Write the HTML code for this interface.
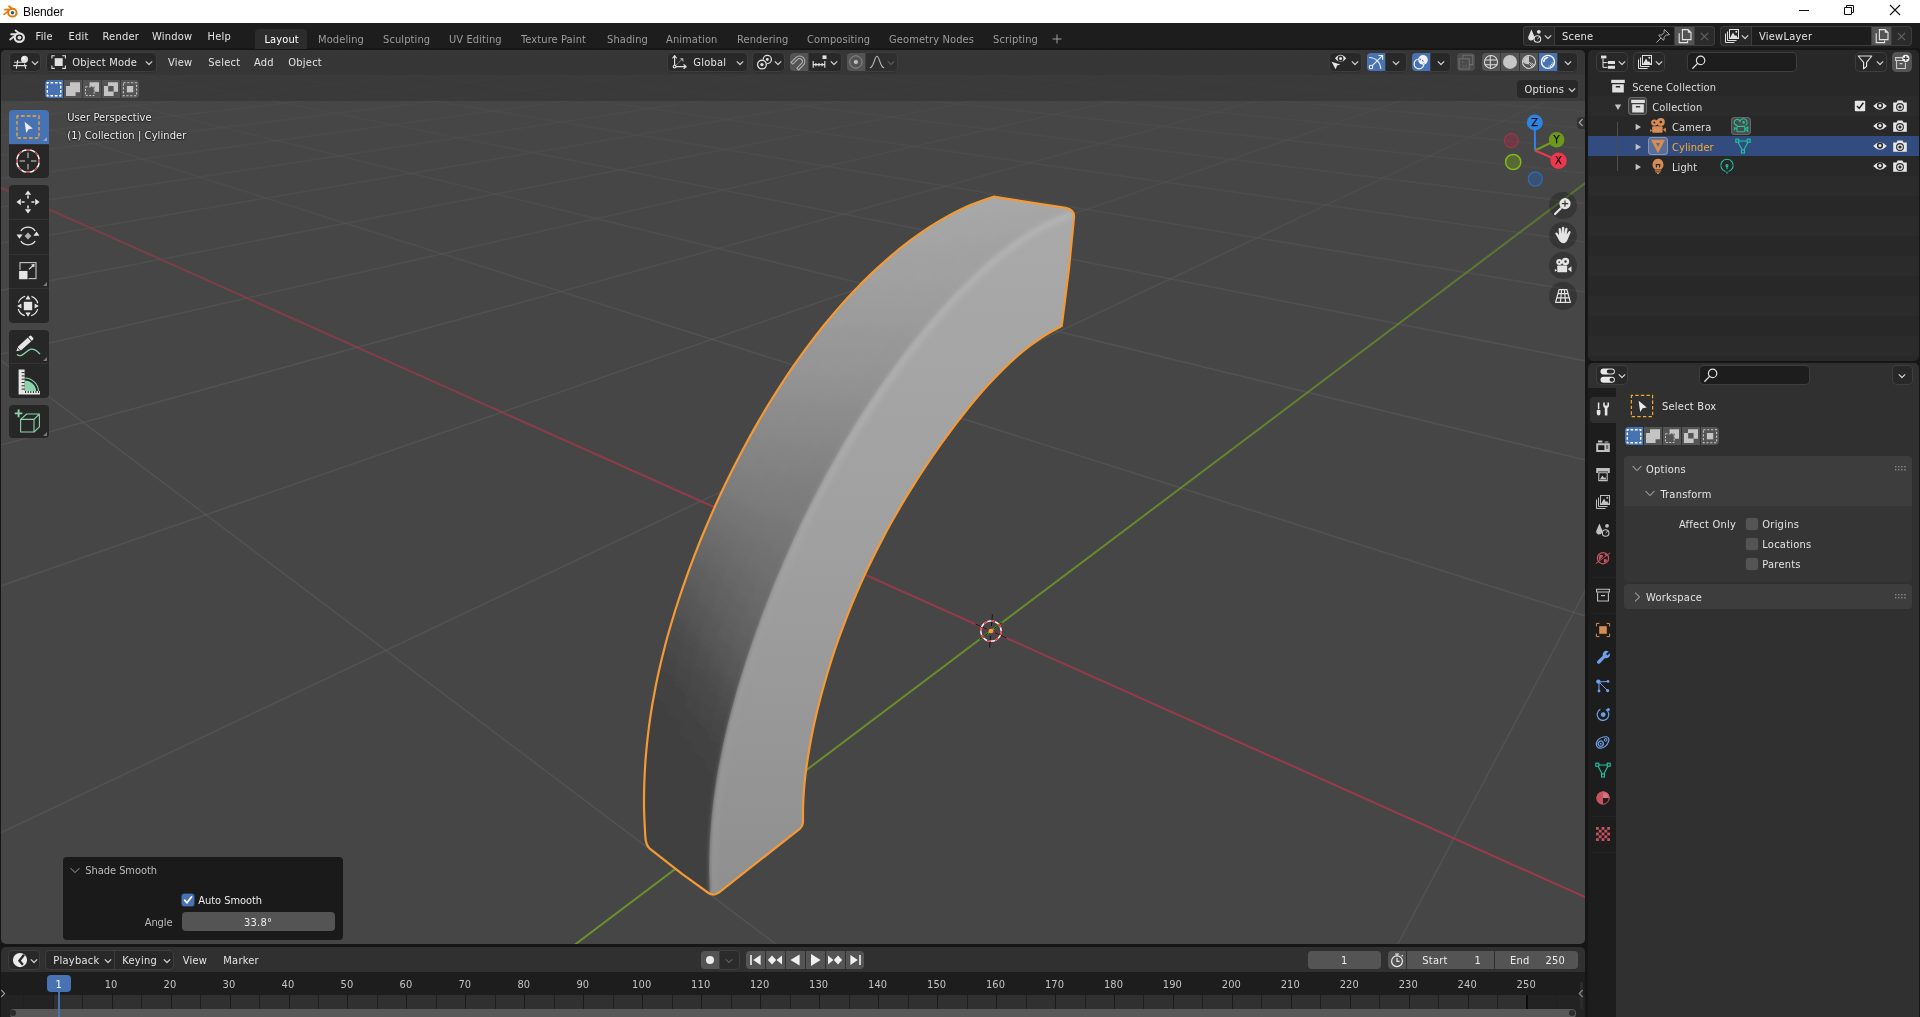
<!DOCTYPE html>
<html lang="en">
<head>
<meta charset="utf-8">
<title>Blender</title>
<style>
*{box-sizing:border-box;margin:0;padding:0}
html,body{width:1920px;height:1017px;overflow:hidden;background:#161616}
body{position:relative;font-family:"DejaVu Sans Condensed","DejaVu Sans","Liberation Sans",sans-serif;font-size:11px;font-stretch:condensed;color:#e0e0e0;line-height:1;-webkit-font-smoothing:antialiased}
.abs{position:absolute}
.t{position:absolute;white-space:nowrap;letter-spacing:.24px}
svg{position:absolute;overflow:visible}
/* title bar */
#titlebar{position:absolute;left:0;top:0;width:1920px;height:23px;background:#fff;color:#000;font-family:"Liberation Sans",sans-serif}
/* top bar */
#topbar{position:absolute;left:0;top:23px;width:1920px;height:25px;background:#1d1d1d}
/* areas */
#v3d{position:absolute;left:1px;top:50px;width:1584px;height:894px;border-radius:5px;overflow:hidden;background:#464646}
#titlebar,#topbar,#v3d,#timeline,#outliner,#props{will-change:transform}
#v3d svg.scene{left:-1px;top:-50px;width:1920px;height:1017px}
#timeline{position:absolute;left:1px;top:947px;width:1584px;height:70px;border-radius:5px 5px 0 0;overflow:hidden;background:#1d1d1d}
#outliner{position:absolute;left:1588px;top:50px;width:1332px;height:310.5px;border-radius:5px;overflow:hidden;background:#282828}
#outliner{width:331px}
#props{position:absolute;left:1588px;top:363px;width:331px;height:654px;border-radius:5px 5px 0 0;overflow:hidden;background:#303030}
.grid line{stroke:#5a5a5a;stroke-width:1.6;opacity:.62}
/* timeline */
.tk{position:absolute;top:47.5px;width:1px;height:14.3px;background:#1f1f1f}
.tk.mj{background:#1a1a1a}
.tn{position:absolute;top:32.2px;width:40px;text-align:center;color:#c4c4c4;font-size:11px;letter-spacing:.12px}
</style>
</head>
<body>
<div id="titlebar">
<svg style="left:2.6px;top:4.7px" width="14.6" height="12.8" viewBox="0 0 16 14"><g fill="none" stroke="#ea7600" stroke-width="1.9" stroke-linecap="round"><path d="M6.6 1.3 L10.4 4.2"/><path d="M2.2 5.1 H9"/><path d="M1.2 10.2 L6.2 6.4"/></g><ellipse cx="10.3" cy="8.4" rx="4.6" ry="4.3" fill="#ffffff" stroke="#ea7600" stroke-width="2.2"/><circle cx="10.4" cy="8.4" r="1.9" fill="#265787"/></svg>
<span class="abs" style="left:23px;top:6px;font-size:12px;letter-spacing:-.1px;white-space:nowrap;color:#000">Blender</span>
<svg style="left:1790px;top:0" width="130" height="23" viewBox="1790 0 130 23" fill="none" stroke="#111" stroke-width="1"><path d="M1799 10.5 H1809"/><path d="M1844.5 7.5 H1851.5 V14.5 H1844.5 Z M1846.5 7.5 V5.5 H1853.5 V12.5 H1851.5"/><path d="M1890 5 L1900 15 M1900 5 L1890 15" stroke-width="1.1"/></svg>
</div>
<div id="topbar">
<svg style="left:9.4px;top:5.7px" width="16" height="14.4" viewBox="0 0 16 14"><g fill="none" stroke="#e0e0e0" stroke-width="1.9" stroke-linecap="round"><path d="M6.6 1.3 L10.4 4.2"/><path d="M2.2 5.1 H9"/><path d="M1.2 10.2 L6.2 6.4"/></g><ellipse cx="10.3" cy="8.4" rx="4.6" ry="4.3" fill="#1d1d1d" stroke="#e0e0e0" stroke-width="2.2"/><circle cx="10.4" cy="8.4" r="1.9" fill="#e0e0e0"/></svg>
<span class="t" style="left:35.5px;top:8px;font-size:11px;color:#e3e3e3;">File</span>
<span class="t" style="left:68.5px;top:8px;font-size:11px;color:#e3e3e3;">Edit</span>
<span class="t" style="left:102.5px;top:8px;font-size:11px;color:#e3e3e3;">Render</span>
<span class="t" style="left:152px;top:8px;font-size:11px;color:#e3e3e3;">Window</span>
<span class="t" style="left:207.5px;top:8px;font-size:11px;color:#e3e3e3;">Help</span>
<div class="abs" style="left:255px;top:5.5px;width:52px;height:20px;background:#2c2c2c;border-radius:4px 4px 0 0;"></div>
<span class="t" style="left:264.5px;top:10.5px;font-size:11px;color:#ffffff;letter-spacing:.11px;">Layout</span>
<span class="t" style="left:318px;top:10.5px;font-size:11px;color:#9c9c9c;letter-spacing:.11px;">Modeling</span>
<span class="t" style="left:383px;top:10.5px;font-size:11px;color:#9c9c9c;letter-spacing:.11px;">Sculpting</span>
<span class="t" style="left:449px;top:10.5px;font-size:11px;color:#9c9c9c;letter-spacing:.11px;">UV Editing</span>
<span class="t" style="left:521px;top:10.5px;font-size:11px;color:#9c9c9c;letter-spacing:.11px;">Texture Paint</span>
<span class="t" style="left:607px;top:10.5px;font-size:11px;color:#9c9c9c;letter-spacing:.11px;">Shading</span>
<span class="t" style="left:666px;top:10.5px;font-size:11px;color:#9c9c9c;letter-spacing:.11px;">Animation</span>
<span class="t" style="left:737px;top:10.5px;font-size:11px;color:#9c9c9c;letter-spacing:.11px;">Rendering</span>
<span class="t" style="left:807px;top:10.5px;font-size:11px;color:#9c9c9c;letter-spacing:.11px;">Compositing</span>
<span class="t" style="left:889px;top:10.5px;font-size:11px;color:#9c9c9c;letter-spacing:.11px;">Geometry Nodes</span>
<span class="t" style="left:993px;top:10.5px;font-size:11px;color:#9c9c9c;letter-spacing:.11px;">Scripting</span>
<svg style="left:1052.4px;top:10.6px" width="10" height="10" viewBox="0 0 10 10"><path d="M5 0.5 V9.5 M0.5 5 H9.5" stroke="#a0a0a0" stroke-width="1" fill="none"/></svg>
<div class="abs" style="left:1523px;top:3px;width:191.5px;height:19.5px;background:#3d3d3d;border-radius:4px;"></div>
<div class="abs" style="left:1523.5px;top:3.5px;width:30.5px;height:18.5px;background:#282828;border-radius:3.5px 0 0 3.5px;"></div>
<div class="abs" style="left:1554.5px;top:3.5px;width:119.5px;height:18.5px;background:#1d1d1d;border-radius:0;"></div>
<div class="abs" style="left:1674.5px;top:3.5px;width:19.5px;height:18.5px;background:#545454;border-radius:0;"></div>
<div class="abs" style="left:1694.5px;top:3.5px;width:19.5px;height:18.5px;background:#2b2b2b;border-radius:0 3.5px 3.5px 0;"></div>
<svg style="left:1527px;top:4.5px" width="16" height="16" viewBox="0 0 16 16"><path d="M4.4 1.4 L7.8 9.6 Q6.2 13 3.2 12.4 Q0.6 11.6 1.4 8.6 Z" fill="#e0e0e0"/><circle cx="10.4" cy="11" r="3.3" fill="none" stroke="#e0e0e0" stroke-width="1.1"/><path d="M10.4 11 L13 8.6" stroke="#e0e0e0" stroke-width="1"/><circle cx="11.8" cy="3.8" r="1.9" fill="#e0e0e0"/></svg>
<svg style="left:1543px;top:10.5px" width="10" height="6" viewBox="0 0 10 6"><path d="M1.8 1.3 L5 4.5 L8.2 1.3" fill="none" stroke="#d0d0d0" stroke-width="1.2" stroke-linejoin="round"/></svg>
<span class="t" style="left:1562px;top:8.3px;font-size:11px;color:#e3e3e3;">Scene</span>
<svg style="left:1655px;top:4.5px" width="16" height="16" viewBox="0 0 16 16"><path d="M9.5 1.5 L14.5 6.5 L13 7 L11.5 6.8 L9 9.3 Q9.5 11 8.5 12.3 L3.7 7.5 Q5 6.5 6.7 7 L9.2 4.5 L9 3 Z" fill="none" stroke="#b0b0b0" stroke-width="1" stroke-linejoin="round"/><path d="M6 10 L1.5 14.5" stroke="#b0b0b0" stroke-width="1" fill="none"/></svg>
<svg style="left:1676.5px;top:4.5px" width="16" height="16" viewBox="0 0 16 16"><path d="M2.2 5.2 V14.6 H10.6 V12.6" fill="none" stroke="#e6e6e6" stroke-width="1.1"/><path d="M5.4 1.6 H11 L14 4.6 V11.6 H5.4 Z" fill="none" stroke="#e6e6e6" stroke-width="1.1"/><path d="M10.8 1.6 V4.8 H14 Z" fill="#e6e6e6"/></svg>
<svg style="left:1700px;top:9px" width="9" height="9" viewBox="0 0 9 9"><path d="M0.8 0.8 L8.2 8.2 M8.2 0.8 L0.8 8.2" stroke="#636363" stroke-width="1.1" fill="none"/></svg>
<div class="abs" style="left:1720px;top:3px;width:191.5px;height:19.5px;background:#3d3d3d;border-radius:4px;"></div>
<div class="abs" style="left:1720.5px;top:3.5px;width:30.5px;height:18.5px;background:#282828;border-radius:3.5px 0 0 3.5px;"></div>
<div class="abs" style="left:1751.5px;top:3.5px;width:119.5px;height:18.5px;background:#1d1d1d;border-radius:0;"></div>
<div class="abs" style="left:1871.5px;top:3.5px;width:19.5px;height:18.5px;background:#545454;border-radius:0;"></div>
<div class="abs" style="left:1891.5px;top:3.5px;width:19.5px;height:18.5px;background:#2b2b2b;border-radius:0 3.5px 3.5px 0;"></div>
<svg style="left:1724px;top:4.5px" width="16" height="16" viewBox="0 0 16 16"><path d="M1.5 5.5 V14.5 H10.5" fill="none" stroke="#e0e0e0" stroke-width="1"/><path d="M3.5 3.5 V12.5 H12.5" fill="none" stroke="#e0e0e0" stroke-width="1"/><rect x="5.5" y="1.5" width="9" height="9" fill="none" stroke="#e0e0e0" stroke-width="1"/><path d="M6 10 L9 4.5 L11 8 L12 7 L14 10 Z" fill="#e0e0e0"/><circle cx="12.3" cy="3.8" r="1" fill="#e0e0e0"/></svg>
<svg style="left:1740px;top:10.5px" width="10" height="6" viewBox="0 0 10 6"><path d="M1.8 1.3 L5 4.5 L8.2 1.3" fill="none" stroke="#d0d0d0" stroke-width="1.2" stroke-linejoin="round"/></svg>
<span class="t" style="left:1759px;top:8.3px;font-size:11px;color:#e3e3e3;">ViewLayer</span>
<svg style="left:1873.5px;top:4.5px" width="16" height="16" viewBox="0 0 16 16"><path d="M2.2 5.2 V14.6 H10.6 V12.6" fill="none" stroke="#e6e6e6" stroke-width="1.1"/><path d="M5.4 1.6 H11 L14 4.6 V11.6 H5.4 Z" fill="none" stroke="#e6e6e6" stroke-width="1.1"/><path d="M10.8 1.6 V4.8 H14 Z" fill="#e6e6e6"/></svg>
<svg style="left:1897px;top:9px" width="9" height="9" viewBox="0 0 9 9"><path d="M0.8 0.8 L8.2 8.2 M8.2 0.8 L0.8 8.2" stroke="#636363" stroke-width="1.1" fill="none"/></svg>
</div>
<div id="v3d">
<svg class="scene" viewBox="0 0 1920 1017">
<defs>

<linearGradient id="gr" gradientUnits="userSpaceOnUse" x1="0" y1="196" x2="0" y2="894">
<stop offset="0" stop-color="#aaaaaa"/><stop offset=".5" stop-color="#a0a0a0"/><stop offset="1" stop-color="#8f8f8f"/>
</linearGradient>
<linearGradient id="grd" gradientUnits="userSpaceOnUse" x1="0" y1="196" x2="0" y2="894">
<stop offset="0" stop-color="#b6b6b6"/><stop offset=".3" stop-color="#b0b0b0"/><stop offset=".45" stop-color="#a8a8a8"/><stop offset=".6" stop-color="#9e9e9e"/><stop offset="1" stop-color="#949494"/>
</linearGradient>
<linearGradient id="gl" gradientUnits="userSpaceOnUse" x1="0" y1="196" x2="0" y2="894"><stop offset="0.000" stop-color="#a8a8a8"/><stop offset="0.149" stop-color="#9e9e9e"/><stop offset="0.264" stop-color="#939393"/><stop offset="0.364" stop-color="#868686"/><stop offset="0.436" stop-color="#7c7c7c"/><stop offset="0.521" stop-color="#6c6c6c"/><stop offset="0.607" stop-color="#5c5c5c"/><stop offset="0.665" stop-color="#4f4f4f"/><stop offset="0.708" stop-color="#474747"/><stop offset="0.739" stop-color="#434343"/><stop offset="0.787" stop-color="#414141"/></linearGradient>
<clipPath id="csil"><path d="M645.2 834.6 C645.0 830.6 644.3 818.8 644.1 810.8 C643.9 802.8 644.0 794.8 644.2 786.8 C644.4 778.8 644.8 770.8 645.3 762.8 C645.9 754.8 646.6 746.8 647.5 738.9 C648.4 730.9 649.4 723.0 650.6 715.1 C651.8 707.2 653.2 699.3 654.7 691.5 C656.2 683.7 657.8 675.8 659.6 668.1 C661.4 660.3 663.3 652.6 665.3 644.8 C667.3 637.1 669.5 629.5 671.8 621.8 C674.0 614.2 676.4 606.6 678.9 599.0 C681.4 591.4 684.0 583.9 686.7 576.3 C689.4 568.8 692.2 561.4 695.1 553.9 C697.9 546.5 700.9 539.0 704.0 531.7 C707.1 524.3 710.3 516.9 713.5 509.6 C716.8 502.3 720.1 495.1 723.6 487.8 C727.0 480.6 730.6 473.4 734.2 466.3 C737.8 459.2 741.5 452.1 745.3 445.0 C749.1 438.0 753.0 431.0 756.9 424.1 C760.9 417.2 765.0 410.3 769.1 403.5 C773.3 396.7 777.6 389.9 781.9 383.3 C786.3 376.6 790.7 370.0 795.3 363.4 C799.9 356.9 804.5 350.5 809.3 344.1 C814.1 337.7 819.0 331.4 824.0 325.2 C829.1 319.0 834.2 312.9 839.5 306.9 C844.7 300.9 850.1 295.0 855.7 289.3 C861.2 283.5 866.9 277.9 872.7 272.4 C878.5 266.9 884.4 261.5 890.5 256.3 C896.6 251.1 902.9 246.1 909.3 241.2 C915.7 236.4 922.2 231.8 928.9 227.4 C935.6 223.1 942.5 218.9 949.5 215.1 C956.5 211.4 963.7 207.8 971.0 204.7 C978.4 201.7 989.8 198.0 993.5 196.7 L1065.5 207.8 Q1074.8 209.6 1074 217.5 L1069.2 266.5 L1064.9 301.1 L1061.7 326 C1058.9 327.5 1050.4 331.9 1045.1 335.2 C1039.8 338.5 1034.7 342.2 1029.8 345.9 C1024.8 349.6 1020.1 353.6 1015.5 357.7 C1010.8 361.8 1006.3 366.1 1002.0 370.4 C997.6 374.8 993.3 379.3 989.1 383.8 C984.9 388.4 980.8 393.1 976.8 397.8 C972.8 402.6 968.8 407.4 965.0 412.3 C961.1 417.1 957.3 422.1 953.5 427.0 C949.8 432.0 946.1 437.0 942.4 442.1 C938.8 447.2 935.2 452.3 931.7 457.4 C928.2 462.6 924.7 467.8 921.3 473.0 C917.9 478.2 914.6 483.5 911.3 488.7 C908.0 494.0 904.8 499.3 901.6 504.7 C898.5 510.0 895.4 515.4 892.3 520.8 C889.3 526.3 886.3 531.7 883.4 537.2 C880.5 542.7 877.6 548.2 874.9 553.8 C872.1 559.3 869.4 564.9 866.7 570.5 C864.1 576.1 861.5 581.8 859.0 587.5 C856.5 593.2 854.1 598.9 851.7 604.6 C849.4 610.4 847.1 616.2 844.9 622.0 C842.6 627.8 840.5 633.7 838.4 639.5 C836.3 645.4 834.3 651.3 832.4 657.2 C830.5 663.2 828.6 669.1 826.8 675.1 C825.1 681.1 823.4 687.1 821.7 693.1 C820.1 699.1 818.6 705.2 817.1 711.2 C815.7 717.3 814.3 723.3 813.0 729.4 C811.7 735.5 810.5 741.6 809.5 747.7 C808.4 753.9 807.4 760.0 806.6 766.1 C805.7 772.3 805.0 778.4 804.4 784.6 C803.9 790.8 803.4 797.0 803.2 803.2 C802.9 809.5 803.0 818.9 803.0 822.0 Q802.6 826.5 799.7 828.8 L719.1 892.4 Q713.6 896.4 708.5 893 L682 873.8 L649.5 848.3 Q645.6 845 645.2 834.6 Z"/></clipPath>
<filter id="blur3" x="-5%" y="-5%" width="110%" height="110%"><feGaussianBlur stdDeviation="2.4"/></filter>
<filter id="blur2" x="-20%" y="-20%" width="140%" height="140%"><feGaussianBlur stdDeviation="2.4"/></filter>

<linearGradient id="gfg" gradientUnits="userSpaceOnUse" x1="0" y1="70" x2="0" y2="360"><stop offset="0" stop-color="#fff" stop-opacity=".22"/><stop offset=".35" stop-color="#fff" stop-opacity=".5"/><stop offset="1" stop-color="#fff" stop-opacity="1"/></linearGradient>
<mask id="gfade" maskUnits="userSpaceOnUse" x="0" y="0" width="1920" height="1017"><rect x="0" y="0" width="1920" height="1017" fill="url(#gfg)"/></mask>
<linearGradient id="axr" gradientUnits="userSpaceOnUse" x1="0" y1="187" x2="1585" y2="897"><stop offset="0" stop-color="#963a49" stop-opacity=".62"/><stop offset=".45" stop-color="#963a49" stop-opacity=".95"/><stop offset="1" stop-color="#9c3a4a"/></linearGradient>
<linearGradient id="axg" gradientUnits="userSpaceOnUse" x1="577" y1="943" x2="1585" y2="183"><stop offset="0" stop-color="#69922a"/><stop offset=".5" stop-color="#678f29" stop-opacity=".95"/><stop offset="1" stop-color="#678f29" stop-opacity=".6"/></linearGradient>
</defs>
<g class="grid" mask="url(#gfade)">
<line x1="-50.0" y1="-29.5" x2="1650.0" y2="-79.3"/>
<line x1="-50.0" y1="-28.8" x2="1650.0" y2="-79.2"/>
<line x1="-50.0" y1="-28.1" x2="1650.0" y2="-79.1"/>
<line x1="-50.0" y1="-27.4" x2="1650.0" y2="-79.0"/>
<line x1="-50.0" y1="-26.7" x2="1650.0" y2="-78.9"/>
<line x1="-50.0" y1="-25.9" x2="1650.0" y2="-78.7"/>
<line x1="-50.0" y1="-25.2" x2="1650.0" y2="-78.6"/>
<line x1="-50.0" y1="-24.3" x2="1650.0" y2="-78.5"/>
<line x1="-50.0" y1="-23.5" x2="1650.0" y2="-78.4"/>
<line x1="-50.0" y1="-22.6" x2="1650.0" y2="-78.3"/>
<line x1="-50.0" y1="-21.7" x2="1650.0" y2="-78.1"/>
<line x1="-50.0" y1="-20.8" x2="1650.0" y2="-78.0"/>
<line x1="-50.0" y1="-19.8" x2="1650.0" y2="-77.8"/>
<line x1="-50.0" y1="-18.8" x2="1650.0" y2="-77.7"/>
<line x1="-50.0" y1="-17.7" x2="1650.0" y2="-77.5"/>
<line x1="-50.0" y1="-16.6" x2="1650.0" y2="-77.4"/>
<line x1="-50.0" y1="-15.5" x2="1650.0" y2="-77.2"/>
<line x1="-50.0" y1="-14.3" x2="1650.0" y2="-77.0"/>
<line x1="-50.0" y1="-13.0" x2="1650.0" y2="-76.8"/>
<line x1="-50.0" y1="-11.7" x2="1650.0" y2="-76.6"/>
<line x1="-50.0" y1="-10.3" x2="1650.0" y2="-76.4"/>
<line x1="-50.0" y1="-8.8" x2="1650.0" y2="-76.2"/>
<line x1="-50.0" y1="-7.3" x2="1650.0" y2="-76.0"/>
<line x1="-50.0" y1="-5.7" x2="1650.0" y2="-75.8"/>
<line x1="-50.0" y1="-4.0" x2="1650.0" y2="-75.5"/>
<line x1="-50.0" y1="-2.2" x2="1650.0" y2="-75.2"/>
<line x1="-50.0" y1="-0.4" x2="1650.0" y2="-75.0"/>
<line x1="-50.0" y1="1.6" x2="1650.0" y2="-74.7"/>
<line x1="-50.0" y1="3.7" x2="1650.0" y2="-74.4"/>
<line x1="-50.0" y1="6.0" x2="1650.0" y2="-74.0"/>
<line x1="-50.0" y1="8.4" x2="1650.0" y2="-73.7"/>
<line x1="-50.0" y1="10.9" x2="1650.0" y2="-73.3"/>
<line x1="-50.0" y1="13.6" x2="1650.0" y2="-72.9"/>
<line x1="-50.0" y1="16.5" x2="1650.0" y2="-72.5"/>
<line x1="-50.0" y1="19.6" x2="1650.0" y2="-72.0"/>
<line x1="-50.0" y1="22.9" x2="1650.0" y2="-71.5"/>
<line x1="-50.0" y1="26.5" x2="1650.0" y2="-71.0"/>
<line x1="-50.0" y1="30.4" x2="1650.0" y2="-70.4"/>
<line x1="-50.0" y1="34.6" x2="1650.0" y2="-69.8"/>
<line x1="-50.0" y1="39.2" x2="1650.0" y2="-69.1"/>
<line x1="-50.0" y1="44.3" x2="1650.0" y2="-68.4"/>
<line x1="-50.0" y1="49.8" x2="1650.0" y2="-67.6"/>
<line x1="-50.0" y1="55.8" x2="1650.0" y2="-66.7"/>
<line x1="-50.0" y1="62.5" x2="1650.0" y2="-65.7"/>
<line x1="-50.0" y1="70.0" x2="1650.0" y2="-64.6"/>
<line x1="-50.0" y1="78.4" x2="1650.0" y2="-63.3"/>
<line x1="-50.0" y1="87.8" x2="1650.0" y2="-61.9"/>
<line x1="-50.0" y1="98.5" x2="1650.0" y2="-60.4"/>
<line x1="-50.0" y1="110.8" x2="1650.0" y2="-58.5"/>
<line x1="-50.0" y1="125.0" x2="1650.0" y2="-56.4"/>
<line x1="-50.0" y1="141.7" x2="1650.0" y2="-54.0"/>
<line x1="-50.0" y1="161.5" x2="1650.0" y2="-51.0"/>
<line x1="-50.0" y1="185.4" x2="1650.0" y2="-47.5"/>
<line x1="-50.0" y1="214.9" x2="1650.0" y2="-43.2"/>
<line x1="-50.0" y1="252.0" x2="1650.0" y2="-37.7"/>
<line x1="-50.0" y1="300.3" x2="1650.0" y2="-30.6"/>
<line x1="-50.0" y1="365.6" x2="1650.0" y2="-20.9"/>
<line x1="-50.0" y1="459.0" x2="1650.0" y2="-7.1"/>
<line x1="-50.0" y1="603.5" x2="1650.0" y2="14.2"/>
<line x1="-50.0" y1="856.8" x2="1650.0" y2="51.7"/>
<line x1="-50.0" y1="3676.4" x2="1650.0" y2="468.2"/>
<line x1="-50.0" y1="-7241.6" x2="1650.0" y2="-1144.8"/>
<line x1="-50.0" y1="-1901.5" x2="1650.0" y2="-355.8"/>
<line x1="-50.0" y1="-1119.5" x2="1650.0" y2="-240.3"/>
<line x1="-50.0" y1="-457.7" x2="1650.0" y2="-1759.4"/>
<line x1="-50.0" y1="-1224.9" x2="1650.0" y2="-5067.6"/>
<line x1="-50.0" y1="1114.6" x2="1650.0" y2="5020.1"/>
<line x1="-50.0" y1="322.1" x2="1650.0" y2="1602.7"/>
<line x1="-50.0" y1="98.0" x2="1650.0" y2="636.5"/>
<line x1="-50.0" y1="60.8" x2="1650.0" y2="475.9"/>
<line x1="-50.0" y1="37.1" x2="1650.0" y2="373.8"/>
<line x1="-50.0" y1="20.7" x2="1650.0" y2="303.1"/>
<line x1="-50.0" y1="8.7" x2="1650.0" y2="251.3"/>
<line x1="-50.0" y1="-0.5" x2="1650.0" y2="211.7"/>
<line x1="-50.0" y1="-7.8" x2="1650.0" y2="180.4"/>
<line x1="-50.0" y1="-13.6" x2="1650.0" y2="155.1"/>
<line x1="-50.0" y1="-18.5" x2="1650.0" y2="134.2"/>
<line x1="-50.0" y1="-22.6" x2="1650.0" y2="116.7"/>
<line x1="-50.0" y1="-26.0" x2="1650.0" y2="101.7"/>
<line x1="-50.0" y1="-29.0" x2="1650.0" y2="88.8"/>
<line x1="-50.0" y1="-31.6" x2="1650.0" y2="77.6"/>
<line x1="-50.0" y1="-33.9" x2="1650.0" y2="67.7"/>
<line x1="-50.0" y1="-35.9" x2="1650.0" y2="59.0"/>
<line x1="-50.0" y1="-37.7" x2="1650.0" y2="51.2"/>
<line x1="-50.0" y1="-39.4" x2="1650.0" y2="44.2"/>
<line x1="-50.0" y1="-40.8" x2="1650.0" y2="37.9"/>
<line x1="-50.0" y1="-42.2" x2="1650.0" y2="32.2"/>
<line x1="-50.0" y1="-43.4" x2="1650.0" y2="26.9"/>
<line x1="-50.0" y1="-44.5" x2="1650.0" y2="22.2"/>
<line x1="-50.0" y1="-45.5" x2="1650.0" y2="17.8"/>
<line x1="-50.0" y1="-46.4" x2="1650.0" y2="13.7"/>
<line x1="-50.0" y1="-47.3" x2="1650.0" y2="10.0"/>
<line x1="-50.0" y1="-48.1" x2="1650.0" y2="6.6"/>
<line x1="-50.0" y1="-48.8" x2="1650.0" y2="3.3"/>
<line x1="-50.0" y1="-49.5" x2="1650.0" y2="0.3"/>
<line x1="-50.0" y1="-50.2" x2="1650.0" y2="-2.5"/>
<line x1="-50.0" y1="-50.8" x2="1650.0" y2="-5.1"/>
<line x1="-50.0" y1="-51.4" x2="1650.0" y2="-7.6"/>
<line x1="-50.0" y1="-51.9" x2="1650.0" y2="-9.9"/>
<line x1="-50.0" y1="-52.4" x2="1650.0" y2="-12.1"/>
<line x1="-50.0" y1="-52.9" x2="1650.0" y2="-14.1"/>
<line x1="-50.0" y1="-53.3" x2="1650.0" y2="-16.1"/>
<line x1="-50.0" y1="-53.8" x2="1650.0" y2="-17.9"/>
<line x1="-50.0" y1="-54.2" x2="1650.0" y2="-19.7"/>
<line x1="-50.0" y1="-54.6" x2="1650.0" y2="-21.3"/>
<line x1="-50.0" y1="-54.9" x2="1650.0" y2="-22.9"/>
<line x1="-50.0" y1="-55.3" x2="1650.0" y2="-24.4"/>
<line x1="-50.0" y1="-55.6" x2="1650.0" y2="-25.8"/>
<line x1="-50.0" y1="-55.9" x2="1650.0" y2="-27.2"/>
<line x1="-50.0" y1="-56.2" x2="1650.0" y2="-28.5"/>
<line x1="-50.0" y1="-56.5" x2="1650.0" y2="-29.7"/>
<line x1="-50.0" y1="-56.8" x2="1650.0" y2="-30.9"/>
<line x1="-50.0" y1="-57.1" x2="1650.0" y2="-32.1"/>
<line x1="-50.0" y1="-57.3" x2="1650.0" y2="-33.2"/>
<line x1="-50.0" y1="-57.6" x2="1650.0" y2="-34.2"/>
<line x1="-50.0" y1="-57.8" x2="1650.0" y2="-35.2"/>
<line x1="-50.0" y1="-58.0" x2="1650.0" y2="-36.2"/>
<line x1="-50.0" y1="-58.2" x2="1650.0" y2="-37.1"/>
<line x1="-50.0" y1="-58.4" x2="1650.0" y2="-38.0"/>
<line x1="-50.0" y1="-58.6" x2="1650.0" y2="-38.9"/>
<line x1="-50.0" y1="-58.8" x2="1650.0" y2="-39.7"/>
<line x1="-50.0" y1="-59.0" x2="1650.0" y2="-40.5"/>
<line x1="-50.0" y1="-59.2" x2="1650.0" y2="-41.3"/>
<line x1="-50.0" y1="-59.4" x2="1650.0" y2="-42.1"/>
<line x1="-50.0" y1="-59.5" x2="1650.0" y2="-42.8"/>
<line x1="-50.0" y1="-59.7" x2="1650.0" y2="-43.5"/>
<line x1="-50.0" y1="-59.9" x2="1650.0" y2="-44.2"/>
<line x1="-50.0" y1="-60.0" x2="1650.0" y2="-44.8"/>
<line x1="-50.0" y1="-60.2" x2="1650.0" y2="-45.4"/>
<line x1="-50.0" y1="-60.3" x2="1650.0" y2="-46.1"/>
<line x1="-50.0" y1="-60.4" x2="1650.0" y2="-46.7"/>
<line x1="-50.0" y1="-60.6" x2="1650.0" y2="-47.2"/>
<line x1="-50.0" y1="-60.7" x2="1650.0" y2="-47.8"/>
<line x1="-50.0" y1="-60.8" x2="1650.0" y2="-48.3"/>
<line x1="-50.0" y1="-61.0" x2="1650.0" y2="-48.9"/>
<line x1="-50.0" y1="-61.1" x2="1650.0" y2="-49.4"/>
<line x1="-50.0" y1="-61.2" x2="1650.0" y2="-49.9"/>
</g>
<line x1="-50" y1="165.1" x2="1650" y2="926.1" stroke="url(#axr)" stroke-width="2"/>
<line x1="500" y1="1001.1" x2="1650" y2="134.2" stroke="url(#axg)" stroke-width="2"/>

<path d="M645.2 834.6 C645.0 830.6 644.3 818.8 644.1 810.8 C643.9 802.8 644.0 794.8 644.2 786.8 C644.4 778.8 644.8 770.8 645.3 762.8 C645.9 754.8 646.6 746.8 647.5 738.9 C648.4 730.9 649.4 723.0 650.6 715.1 C651.8 707.2 653.2 699.3 654.7 691.5 C656.2 683.7 657.8 675.8 659.6 668.1 C661.4 660.3 663.3 652.6 665.3 644.8 C667.3 637.1 669.5 629.5 671.8 621.8 C674.0 614.2 676.4 606.6 678.9 599.0 C681.4 591.4 684.0 583.9 686.7 576.3 C689.4 568.8 692.2 561.4 695.1 553.9 C697.9 546.5 700.9 539.0 704.0 531.7 C707.1 524.3 710.3 516.9 713.5 509.6 C716.8 502.3 720.1 495.1 723.6 487.8 C727.0 480.6 730.6 473.4 734.2 466.3 C737.8 459.2 741.5 452.1 745.3 445.0 C749.1 438.0 753.0 431.0 756.9 424.1 C760.9 417.2 765.0 410.3 769.1 403.5 C773.3 396.7 777.6 389.9 781.9 383.3 C786.3 376.6 790.7 370.0 795.3 363.4 C799.9 356.9 804.5 350.5 809.3 344.1 C814.1 337.7 819.0 331.4 824.0 325.2 C829.1 319.0 834.2 312.9 839.5 306.9 C844.7 300.9 850.1 295.0 855.7 289.3 C861.2 283.5 866.9 277.9 872.7 272.4 C878.5 266.9 884.4 261.5 890.5 256.3 C896.6 251.1 902.9 246.1 909.3 241.2 C915.7 236.4 922.2 231.8 928.9 227.4 C935.6 223.1 942.5 218.9 949.5 215.1 C956.5 211.4 963.7 207.8 971.0 204.7 C978.4 201.7 989.8 198.0 993.5 196.7 L1065.5 207.8 Q1074.8 209.6 1074 217.5 L1069.2 266.5 L1064.9 301.1 L1061.7 326 C1058.9 327.5 1050.4 331.9 1045.1 335.2 C1039.8 338.5 1034.7 342.2 1029.8 345.9 C1024.8 349.6 1020.1 353.6 1015.5 357.7 C1010.8 361.8 1006.3 366.1 1002.0 370.4 C997.6 374.8 993.3 379.3 989.1 383.8 C984.9 388.4 980.8 393.1 976.8 397.8 C972.8 402.6 968.8 407.4 965.0 412.3 C961.1 417.1 957.3 422.1 953.5 427.0 C949.8 432.0 946.1 437.0 942.4 442.1 C938.8 447.2 935.2 452.3 931.7 457.4 C928.2 462.6 924.7 467.8 921.3 473.0 C917.9 478.2 914.6 483.5 911.3 488.7 C908.0 494.0 904.8 499.3 901.6 504.7 C898.5 510.0 895.4 515.4 892.3 520.8 C889.3 526.3 886.3 531.7 883.4 537.2 C880.5 542.7 877.6 548.2 874.9 553.8 C872.1 559.3 869.4 564.9 866.7 570.5 C864.1 576.1 861.5 581.8 859.0 587.5 C856.5 593.2 854.1 598.9 851.7 604.6 C849.4 610.4 847.1 616.2 844.9 622.0 C842.6 627.8 840.5 633.7 838.4 639.5 C836.3 645.4 834.3 651.3 832.4 657.2 C830.5 663.2 828.6 669.1 826.8 675.1 C825.1 681.1 823.4 687.1 821.7 693.1 C820.1 699.1 818.6 705.2 817.1 711.2 C815.7 717.3 814.3 723.3 813.0 729.4 C811.7 735.5 810.5 741.6 809.5 747.7 C808.4 753.9 807.4 760.0 806.6 766.1 C805.7 772.3 805.0 778.4 804.4 784.6 C803.9 790.8 803.4 797.0 803.2 803.2 C802.9 809.5 803.0 818.9 803.0 822.0 Q802.6 826.5 799.7 828.8 L719.1 892.4 Q713.6 896.4 708.5 893 L682 873.8 L649.5 848.3 Q645.6 845 645.2 834.6 Z" fill="url(#gr)"/>
<g clip-path="url(#csil)">
<path d="M645.2 834.6 C645.0 830.6 644.3 818.8 644.1 810.8 C643.9 802.8 644.0 794.8 644.2 786.8 C644.4 778.8 644.8 770.8 645.3 762.8 C645.9 754.8 646.6 746.8 647.5 738.9 C648.4 730.9 649.4 723.0 650.6 715.1 C651.8 707.2 653.2 699.3 654.7 691.5 C656.2 683.7 657.8 675.8 659.6 668.1 C661.4 660.3 663.3 652.6 665.3 644.8 C667.3 637.1 669.5 629.5 671.8 621.8 C674.0 614.2 676.4 606.6 678.9 599.0 C681.4 591.4 684.0 583.9 686.7 576.3 C689.4 568.8 692.2 561.4 695.1 553.9 C697.9 546.5 700.9 539.0 704.0 531.7 C707.1 524.3 710.3 516.9 713.5 509.6 C716.8 502.3 720.1 495.1 723.6 487.8 C727.0 480.6 730.6 473.4 734.2 466.3 C737.8 459.2 741.5 452.1 745.3 445.0 C749.1 438.0 753.0 431.0 756.9 424.1 C760.9 417.2 765.0 410.3 769.1 403.5 C773.3 396.7 777.6 389.9 781.9 383.3 C786.3 376.6 790.7 370.0 795.3 363.4 C799.9 356.9 804.5 350.5 809.3 344.1 C814.1 337.7 819.0 331.4 824.0 325.2 C829.1 319.0 834.2 312.9 839.5 306.9 C844.7 300.9 850.1 295.0 855.7 289.3 C861.2 283.5 866.9 277.9 872.7 272.4 C878.5 266.9 884.4 261.5 890.5 256.3 C896.6 251.1 902.9 246.1 909.3 241.2 C915.7 236.4 922.2 231.8 928.9 227.4 C935.6 223.1 942.5 218.9 949.5 215.1 C956.5 211.4 963.7 207.8 971.0 204.7 C978.4 201.7 989.8 198.0 993.5 196.7 L1069.2 212.4 C1065.6 213.8 1054.7 217.8 1047.8 221.1 C1040.8 224.3 1034.2 228.1 1027.7 232.1 C1021.2 236.0 1014.9 240.4 1008.8 244.9 C1002.7 249.4 996.7 254.2 990.9 259.1 C985.1 264.0 979.4 269.2 973.8 274.4 C968.2 279.7 962.8 285.1 957.4 290.6 C952.1 296.1 946.9 301.7 941.8 307.4 C936.6 313.1 931.6 318.9 926.7 324.8 C921.7 330.6 916.9 336.6 912.1 342.6 C907.4 348.6 902.7 354.7 898.2 360.8 C893.6 367.0 889.1 373.2 884.7 379.4 C880.3 385.7 876.0 392.0 871.7 398.3 C867.5 404.7 863.3 411.1 859.2 417.5 C855.1 424.0 851.1 430.5 847.2 437.1 C843.3 443.6 839.4 450.2 835.7 456.9 C831.9 463.5 828.2 470.2 824.5 476.9 C820.9 483.6 817.4 490.4 813.9 497.2 C810.4 504.0 807.0 510.9 803.6 517.8 C800.3 524.6 797.0 531.6 793.8 538.5 C790.6 545.5 787.5 552.5 784.4 559.5 C781.4 566.5 778.4 573.6 775.4 580.6 C772.5 587.7 769.7 594.8 766.9 602.0 C764.1 609.1 761.4 616.2 758.8 623.4 C756.1 630.6 753.6 637.8 751.1 645.1 C748.6 652.3 746.2 659.6 743.9 666.8 C741.6 674.1 739.3 681.4 737.2 688.8 C735.1 696.1 733.0 703.5 731.1 710.8 C729.1 718.2 727.3 725.6 725.6 733.1 C723.8 740.5 722.2 748.0 720.7 755.5 C719.2 763.0 717.9 770.5 716.6 778.1 C715.4 785.6 714.3 793.2 713.3 800.8 C712.4 808.4 711.6 816.0 710.9 823.7 C710.3 831.3 709.8 839.0 709.5 846.6 C709.2 854.3 709.1 862.0 709.1 869.6 C709.2 877.3 709.7 888.7 709.8 892.5 L709 893 L682 873.8 L649.5 848.3 L645.2 834.6 Z" fill="url(#gl)"/>
<g stroke-width=".9" stroke-linejoin="round" filter="url(#blur3)"><path d="M978.4 193.6 L971.7 195.8 L986.8 199.0 L993.5 196.7Z" fill="#a8a8a8" stroke="#a8a8a8"/><path d="M993.5 196.7 L986.8 199.0 L1001.9 202.2 L1008.6 199.8Z" fill="#a8a8a8" stroke="#a8a8a8"/><path d="M1008.6 199.8 L1001.9 202.2 L1017.0 205.4 L1023.8 203.0Z" fill="#a8a8a8" stroke="#a8a8a8"/><path d="M1023.8 203.0 L1017.0 205.4 L1032.2 208.6 L1038.9 206.1Z" fill="#a7a7a7" stroke="#a7a7a7"/><path d="M1038.9 206.1 L1032.2 208.6 L1047.3 211.8 L1054.1 209.3Z" fill="#a6a6a6" stroke="#a6a6a6"/><path d="M1054.1 209.3 L1047.3 211.8 L1062.4 215.0 L1069.2 212.4Z" fill="#a6a6a6" stroke="#a6a6a6"/><path d="M971.7 195.8 L965.0 198.0 L980.1 201.3 L986.8 199.0Z" fill="#a8a8a8" stroke="#a8a8a8"/><path d="M986.8 199.0 L980.1 201.3 L995.2 204.6 L1001.9 202.2Z" fill="#a8a8a8" stroke="#a8a8a8"/><path d="M1001.9 202.2 L995.2 204.6 L1010.3 207.8 L1017.0 205.4Z" fill="#a7a7a7" stroke="#a7a7a7"/><path d="M1017.0 205.4 L1010.3 207.8 L1025.4 211.1 L1032.2 208.6Z" fill="#a7a7a7" stroke="#a7a7a7"/><path d="M1032.2 208.6 L1025.4 211.1 L1040.5 214.4 L1047.3 211.8Z" fill="#a6a6a6" stroke="#a6a6a6"/><path d="M1047.3 211.8 L1040.5 214.4 L1055.6 217.7 L1062.4 215.0Z" fill="#a6a6a6" stroke="#a6a6a6"/><path d="M965.0 198.0 L958.4 200.4 L973.5 203.7 L980.1 201.3Z" fill="#a8a8a8" stroke="#a8a8a8"/><path d="M980.1 201.3 L973.5 203.7 L988.6 207.1 L995.2 204.6Z" fill="#a8a8a8" stroke="#a8a8a8"/><path d="M995.2 204.6 L988.6 207.1 L1003.7 210.5 L1010.3 207.8Z" fill="#a7a7a7" stroke="#a7a7a7"/><path d="M1010.3 207.8 L1003.7 210.5 L1018.7 213.8 L1025.4 211.1Z" fill="#a7a7a7" stroke="#a7a7a7"/><path d="M1025.4 211.1 L1018.7 213.8 L1033.8 217.2 L1040.5 214.4Z" fill="#a6a6a6" stroke="#a6a6a6"/><path d="M1040.5 214.4 L1033.8 217.2 L1048.9 220.5 L1055.6 217.7Z" fill="#a5a5a5" stroke="#a5a5a5"/><path d="M958.4 200.4 L951.9 203.0 L967.0 206.5 L973.5 203.7Z" fill="#a8a8a8" stroke="#a8a8a8"/><path d="M973.5 203.7 L967.0 206.5 L982.1 209.9 L988.6 207.1Z" fill="#a7a7a7" stroke="#a7a7a7"/><path d="M988.6 207.1 L982.1 209.9 L997.1 213.4 L1003.7 210.5Z" fill="#a7a7a7" stroke="#a7a7a7"/><path d="M1003.7 210.5 L997.1 213.4 L1012.2 216.9 L1018.7 213.8Z" fill="#a6a6a6" stroke="#a6a6a6"/><path d="M1018.7 213.8 L1012.2 216.9 L1027.2 220.3 L1033.8 217.2Z" fill="#a6a6a6" stroke="#a6a6a6"/><path d="M1033.8 217.2 L1027.2 220.3 L1042.3 223.8 L1048.9 220.5Z" fill="#a5a5a5" stroke="#a5a5a5"/><path d="M951.9 203.0 L945.5 205.9 L960.6 209.5 L967.0 206.5Z" fill="#a8a8a8" stroke="#a8a8a8"/><path d="M967.0 206.5 L960.6 209.5 L975.7 213.0 L982.1 209.9Z" fill="#a7a7a7" stroke="#a7a7a7"/><path d="M982.1 209.9 L975.7 213.0 L990.7 216.6 L997.1 213.4Z" fill="#a7a7a7" stroke="#a7a7a7"/><path d="M997.1 213.4 L990.7 216.6 L1005.8 220.1 L1012.2 216.9Z" fill="#a6a6a6" stroke="#a6a6a6"/><path d="M1012.2 216.9 L1005.8 220.1 L1020.8 223.7 L1027.2 220.3Z" fill="#a5a5a5" stroke="#a5a5a5"/><path d="M1027.2 220.3 L1020.8 223.7 L1035.9 227.2 L1042.3 223.8Z" fill="#a5a5a5" stroke="#a5a5a5"/><path d="M945.5 205.9 L939.2 209.0 L954.3 212.6 L960.6 209.5Z" fill="#a7a7a7" stroke="#a7a7a7"/><path d="M960.6 209.5 L954.3 212.6 L969.3 216.3 L975.7 213.0Z" fill="#a7a7a7" stroke="#a7a7a7"/><path d="M975.7 213.0 L969.3 216.3 L984.4 219.9 L990.7 216.6Z" fill="#a6a6a6" stroke="#a6a6a6"/><path d="M990.7 216.6 L984.4 219.9 L999.5 223.6 L1005.8 220.1Z" fill="#a6a6a6" stroke="#a6a6a6"/><path d="M1005.8 220.1 L999.5 223.6 L1014.5 227.3 L1020.8 223.7Z" fill="#a5a5a5" stroke="#a5a5a5"/><path d="M1020.8 223.7 L1014.5 227.3 L1029.6 230.9 L1035.9 227.2Z" fill="#a5a5a5" stroke="#a5a5a5"/><path d="M939.2 209.0 L933.0 212.2 L948.0 215.9 L954.3 212.6Z" fill="#a7a7a7" stroke="#a7a7a7"/><path d="M954.3 212.6 L948.0 215.9 L963.1 219.7 L969.3 216.3Z" fill="#a7a7a7" stroke="#a7a7a7"/><path d="M969.3 216.3 L963.1 219.7 L978.2 223.5 L984.4 219.9Z" fill="#a6a6a6" stroke="#a6a6a6"/><path d="M984.4 219.9 L978.2 223.5 L993.2 227.2 L999.5 223.6Z" fill="#a5a5a5" stroke="#a5a5a5"/><path d="M999.5 223.6 L993.2 227.2 L1008.3 231.0 L1014.5 227.3Z" fill="#a5a5a5" stroke="#a5a5a5"/><path d="M1014.5 227.3 L1008.3 231.0 L1023.4 234.8 L1029.6 230.9Z" fill="#a4a4a4" stroke="#a4a4a4"/><path d="M933.0 212.2 L926.8 215.5 L941.9 219.4 L948.0 215.9Z" fill="#a7a7a7" stroke="#a7a7a7"/><path d="M948.0 215.9 L941.9 219.4 L957.0 223.3 L963.1 219.7Z" fill="#a6a6a6" stroke="#a6a6a6"/><path d="M963.1 219.7 L957.0 223.3 L972.1 227.2 L978.2 223.5Z" fill="#a6a6a6" stroke="#a6a6a6"/><path d="M978.2 223.5 L972.1 227.2 L987.1 231.1 L993.2 227.2Z" fill="#a5a5a5" stroke="#a5a5a5"/><path d="M993.2 227.2 L987.1 231.1 L1002.2 235.0 L1008.3 231.0Z" fill="#a4a4a4" stroke="#a4a4a4"/><path d="M1008.3 231.0 L1002.2 235.0 L1017.3 238.8 L1023.4 234.8Z" fill="#a4a4a4" stroke="#a4a4a4"/><path d="M926.8 215.5 L920.7 219.1 L935.8 223.1 L941.9 219.4Z" fill="#a6a6a6" stroke="#a6a6a6"/><path d="M941.9 219.4 L935.8 223.1 L950.9 227.1 L957.0 223.3Z" fill="#a6a6a6" stroke="#a6a6a6"/><path d="M957.0 223.3 L950.9 227.1 L966.0 231.1 L972.1 227.2Z" fill="#a5a5a5" stroke="#a5a5a5"/><path d="M972.1 227.2 L966.0 231.1 L981.1 235.0 L987.1 231.1Z" fill="#a5a5a5" stroke="#a5a5a5"/><path d="M987.1 231.1 L981.1 235.0 L996.2 239.0 L1002.2 235.0Z" fill="#a4a4a4" stroke="#a4a4a4"/><path d="M1002.2 235.0 L996.2 239.0 L1011.3 243.0 L1017.3 238.8Z" fill="#a3a3a3" stroke="#a3a3a3"/><path d="M920.7 219.1 L914.7 222.7 L929.9 226.8 L935.8 223.1Z" fill="#a6a6a6" stroke="#a6a6a6"/><path d="M935.8 223.1 L929.9 226.8 L945.0 230.9 L950.9 227.1Z" fill="#a5a5a5" stroke="#a5a5a5"/><path d="M950.9 227.1 L945.0 230.9 L960.1 235.0 L966.0 231.1Z" fill="#a5a5a5" stroke="#a5a5a5"/><path d="M966.0 231.1 L960.1 235.0 L975.2 239.2 L981.1 235.0Z" fill="#a4a4a4" stroke="#a4a4a4"/><path d="M981.1 235.0 L975.2 239.2 L990.3 243.3 L996.2 239.0Z" fill="#a4a4a4" stroke="#a4a4a4"/><path d="M996.2 239.0 L990.3 243.3 L1005.5 247.4 L1011.3 243.0Z" fill="#a3a3a3" stroke="#a3a3a3"/><path d="M914.7 222.7 L908.8 226.5 L924.0 230.7 L929.9 226.8Z" fill="#a6a6a6" stroke="#a6a6a6"/><path d="M929.9 226.8 L924.0 230.7 L939.1 234.9 L945.0 230.9Z" fill="#a5a5a5" stroke="#a5a5a5"/><path d="M945.0 230.9 L939.1 234.9 L954.3 239.2 L960.1 235.0Z" fill="#a4a4a4" stroke="#a4a4a4"/><path d="M960.1 235.0 L954.3 239.2 L969.4 243.4 L975.2 239.2Z" fill="#a4a4a4" stroke="#a4a4a4"/><path d="M975.2 239.2 L969.4 243.4 L984.6 247.6 L990.3 243.3Z" fill="#a3a3a3" stroke="#a3a3a3"/><path d="M990.3 243.3 L984.6 247.6 L999.7 251.9 L1005.5 247.4Z" fill="#a3a3a3" stroke="#a3a3a3"/><path d="M908.8 226.5 L903.0 230.4 L918.2 234.7 L924.0 230.7Z" fill="#a5a5a5" stroke="#a5a5a5"/><path d="M924.0 230.7 L918.2 234.7 L933.3 239.1 L939.1 234.9Z" fill="#a5a5a5" stroke="#a5a5a5"/><path d="M939.1 234.9 L933.3 239.1 L948.5 243.4 L954.3 239.2Z" fill="#a4a4a4" stroke="#a4a4a4"/><path d="M954.3 239.2 L948.5 243.4 L963.7 247.8 L969.4 243.4Z" fill="#a3a3a3" stroke="#a3a3a3"/><path d="M969.4 243.4 L963.7 247.8 L978.9 252.1 L984.6 247.6Z" fill="#a3a3a3" stroke="#a3a3a3"/><path d="M984.6 247.6 L978.9 252.1 L994.0 256.5 L999.7 251.9Z" fill="#a2a2a2" stroke="#a2a2a2"/><path d="M903.0 230.4 L897.2 234.4 L912.4 238.9 L918.2 234.7Z" fill="#a5a5a5" stroke="#a5a5a5"/><path d="M918.2 234.7 L912.4 238.9 L927.6 243.3 L933.3 239.1Z" fill="#a4a4a4" stroke="#a4a4a4"/><path d="M933.3 239.1 L927.6 243.3 L942.8 247.8 L948.5 243.4Z" fill="#a4a4a4" stroke="#a4a4a4"/><path d="M948.5 243.4 L942.8 247.8 L958.0 252.3 L963.7 247.8Z" fill="#a3a3a3" stroke="#a3a3a3"/><path d="M963.7 247.8 L958.0 252.3 L973.2 256.7 L978.9 252.1Z" fill="#a2a2a2" stroke="#a2a2a2"/><path d="M978.9 252.1 L973.2 256.7 L988.5 261.2 L994.0 256.5Z" fill="#a2a2a2" stroke="#a2a2a2"/><path d="M897.2 234.4 L891.5 238.5 L906.8 243.1 L912.4 238.9Z" fill="#a4a4a4" stroke="#a4a4a4"/><path d="M912.4 238.9 L906.8 243.1 L922.0 247.7 L927.6 243.3Z" fill="#a4a4a4" stroke="#a4a4a4"/><path d="M927.6 243.3 L922.0 247.7 L937.3 252.3 L942.8 247.8Z" fill="#a3a3a3" stroke="#a3a3a3"/><path d="M942.8 247.8 L937.3 252.3 L952.5 256.9 L958.0 252.3Z" fill="#a3a3a3" stroke="#a3a3a3"/><path d="M958.0 252.3 L952.5 256.9 L967.7 261.4 L973.2 256.7Z" fill="#a2a2a2" stroke="#a2a2a2"/><path d="M973.2 256.7 L967.7 261.4 L983.0 266.0 L988.5 261.2Z" fill="#a1a1a1" stroke="#a1a1a1"/><path d="M891.5 238.5 L885.9 242.8 L901.2 247.5 L906.8 243.1Z" fill="#a4a4a4" stroke="#a4a4a4"/><path d="M906.8 243.1 L901.2 247.5 L916.5 252.2 L922.0 247.7Z" fill="#a3a3a3" stroke="#a3a3a3"/><path d="M922.0 247.7 L916.5 252.2 L931.8 256.9 L937.3 252.3Z" fill="#a3a3a3" stroke="#a3a3a3"/><path d="M937.3 252.3 L931.8 256.9 L947.0 261.5 L952.5 256.9Z" fill="#a2a2a2" stroke="#a2a2a2"/><path d="M952.5 256.9 L947.0 261.5 L962.3 266.2 L967.7 261.4Z" fill="#a2a2a2" stroke="#a2a2a2"/><path d="M967.7 261.4 L962.3 266.2 L977.6 270.9 L983.0 266.0Z" fill="#a1a1a1" stroke="#a1a1a1"/><path d="M885.9 242.8 L880.4 247.1 L895.7 251.9 L901.2 247.5Z" fill="#a3a3a3" stroke="#a3a3a3"/><path d="M901.2 247.5 L895.7 251.9 L911.0 256.7 L916.5 252.2Z" fill="#a3a3a3" stroke="#a3a3a3"/><path d="M916.5 252.2 L911.0 256.7 L926.3 261.5 L931.8 256.9Z" fill="#a2a2a2" stroke="#a2a2a2"/><path d="M931.8 256.9 L926.3 261.5 L941.6 266.3 L947.0 261.5Z" fill="#a2a2a2" stroke="#a2a2a2"/><path d="M947.0 261.5 L941.6 266.3 L956.9 271.1 L962.3 266.2Z" fill="#a1a1a1" stroke="#a1a1a1"/><path d="M962.3 266.2 L956.9 271.1 L972.2 275.9 L977.6 270.9Z" fill="#a1a1a1" stroke="#a1a1a1"/><path d="M880.4 247.1 L875.0 251.6 L890.3 256.5 L895.7 251.9Z" fill="#a3a3a3" stroke="#a3a3a3"/><path d="M895.7 251.9 L890.3 256.5 L905.7 261.4 L911.0 256.7Z" fill="#a2a2a2" stroke="#a2a2a2"/><path d="M911.0 256.7 L905.7 261.4 L921.0 266.3 L926.3 261.5Z" fill="#a2a2a2" stroke="#a2a2a2"/><path d="M926.3 261.5 L921.0 266.3 L936.3 271.2 L941.6 266.3Z" fill="#a1a1a1" stroke="#a1a1a1"/><path d="M941.6 266.3 L936.3 271.2 L951.6 276.1 L956.9 271.1Z" fill="#a1a1a1" stroke="#a1a1a1"/><path d="M956.9 271.1 L951.6 276.1 L967.0 281.0 L972.2 275.9Z" fill="#a0a0a0" stroke="#a0a0a0"/><path d="M875.0 251.6 L869.6 256.1 L885.0 261.1 L890.3 256.5Z" fill="#a3a3a3" stroke="#a3a3a3"/><path d="M890.3 256.5 L885.0 261.1 L900.3 266.1 L905.7 261.4Z" fill="#a2a2a2" stroke="#a2a2a2"/><path d="M905.7 261.4 L900.3 266.1 L915.7 271.1 L921.0 266.3Z" fill="#a1a1a1" stroke="#a1a1a1"/><path d="M921.0 266.3 L915.7 271.1 L931.1 276.1 L936.3 271.2Z" fill="#a1a1a1" stroke="#a1a1a1"/><path d="M936.3 271.2 L931.1 276.1 L946.4 281.1 L951.6 276.1Z" fill="#a0a0a0" stroke="#a0a0a0"/><path d="M951.6 276.1 L946.4 281.1 L961.8 286.1 L967.0 281.0Z" fill="#a0a0a0" stroke="#a0a0a0"/><path d="M869.6 256.1 L864.3 260.7 L879.7 265.8 L885.0 261.1Z" fill="#a2a2a2" stroke="#a2a2a2"/><path d="M885.0 261.1 L879.7 265.8 L895.1 270.9 L900.3 266.1Z" fill="#a1a1a1" stroke="#a1a1a1"/><path d="M900.3 266.1 L895.1 270.9 L910.5 276.0 L915.7 271.1Z" fill="#a1a1a1" stroke="#a1a1a1"/><path d="M915.7 271.1 L910.5 276.0 L925.9 281.1 L931.1 276.1Z" fill="#a0a0a0" stroke="#a0a0a0"/><path d="M931.1 276.1 L925.9 281.1 L941.3 286.2 L946.4 281.1Z" fill="#a0a0a0" stroke="#a0a0a0"/><path d="M946.4 281.1 L941.3 286.2 L956.7 291.4 L961.8 286.1Z" fill="#9f9f9f" stroke="#9f9f9f"/><path d="M864.3 260.7 L859.1 265.4 L874.5 270.6 L879.7 265.8Z" fill="#a2a2a2" stroke="#a2a2a2"/><path d="M879.7 265.8 L874.5 270.6 L890.0 275.8 L895.1 270.9Z" fill="#a1a1a1" stroke="#a1a1a1"/><path d="M895.1 270.9 L890.0 275.8 L905.4 281.0 L910.5 276.0Z" fill="#a0a0a0" stroke="#a0a0a0"/><path d="M910.5 276.0 L905.4 281.0 L920.8 286.2 L925.9 281.1Z" fill="#a0a0a0" stroke="#a0a0a0"/><path d="M925.9 281.1 L920.8 286.2 L936.2 291.4 L941.3 286.2Z" fill="#9f9f9f" stroke="#9f9f9f"/><path d="M941.3 286.2 L936.2 291.4 L951.7 296.6 L956.7 291.4Z" fill="#9f9f9f" stroke="#9f9f9f"/><path d="M859.1 265.4 L854.0 270.2 L869.4 275.5 L874.5 270.6Z" fill="#a1a1a1" stroke="#a1a1a1"/><path d="M874.5 270.6 L869.4 275.5 L884.9 280.8 L890.0 275.8Z" fill="#a0a0a0" stroke="#a0a0a0"/><path d="M890.0 275.8 L884.9 280.8 L900.3 286.1 L905.4 281.0Z" fill="#a0a0a0" stroke="#a0a0a0"/><path d="M905.4 281.0 L900.3 286.1 L915.8 291.4 L920.8 286.2Z" fill="#9f9f9f" stroke="#9f9f9f"/><path d="M920.8 286.2 L915.8 291.4 L931.2 296.7 L936.2 291.4Z" fill="#9f9f9f" stroke="#9f9f9f"/><path d="M936.2 291.4 L931.2 296.7 L946.7 302.0 L951.7 296.6Z" fill="#9e9e9e" stroke="#9e9e9e"/><path d="M854.0 270.2 L848.9 275.0 L864.4 280.4 L869.4 275.5Z" fill="#a1a1a1" stroke="#a1a1a1"/><path d="M869.4 275.5 L864.4 280.4 L879.8 285.8 L884.9 280.8Z" fill="#a0a0a0" stroke="#a0a0a0"/><path d="M884.9 280.8 L879.8 285.8 L895.3 291.2 L900.3 286.1Z" fill="#9f9f9f" stroke="#9f9f9f"/><path d="M900.3 286.1 L895.3 291.2 L910.8 296.6 L915.8 291.4Z" fill="#9f9f9f" stroke="#9f9f9f"/><path d="M915.8 291.4 L910.8 296.6 L926.3 302.0 L931.2 296.7Z" fill="#9e9e9e" stroke="#9e9e9e"/><path d="M931.2 296.7 L926.3 302.0 L941.8 307.4 L946.7 302.0Z" fill="#9e9e9e" stroke="#9e9e9e"/><path d="M848.9 275.0 L843.9 280.0 L859.4 285.4 L864.4 280.4Z" fill="#a0a0a0" stroke="#a0a0a0"/><path d="M864.4 280.4 L859.4 285.4 L874.9 290.9 L879.8 285.8Z" fill="#9f9f9f" stroke="#9f9f9f"/><path d="M879.8 285.8 L874.9 290.9 L890.4 296.4 L895.3 291.2Z" fill="#9f9f9f" stroke="#9f9f9f"/><path d="M895.3 291.2 L890.4 296.4 L905.9 301.9 L910.8 296.6Z" fill="#9e9e9e" stroke="#9e9e9e"/><path d="M910.8 296.6 L905.9 301.9 L921.4 307.4 L926.3 302.0Z" fill="#9e9e9e" stroke="#9e9e9e"/><path d="M926.3 302.0 L921.4 307.4 L936.9 312.9 L941.8 307.4Z" fill="#9d9d9d" stroke="#9d9d9d"/><path d="M843.9 280.0 L839.0 285.0 L854.5 290.5 L859.4 285.4Z" fill="#a0a0a0" stroke="#a0a0a0"/><path d="M859.4 285.4 L854.5 290.5 L870.0 296.1 L874.9 290.9Z" fill="#9f9f9f" stroke="#9f9f9f"/><path d="M874.9 290.9 L870.0 296.1 L885.5 301.7 L890.4 296.4Z" fill="#9e9e9e" stroke="#9e9e9e"/><path d="M890.4 296.4 L885.5 301.7 L901.1 307.2 L905.9 301.9Z" fill="#9e9e9e" stroke="#9e9e9e"/><path d="M905.9 301.9 L901.1 307.2 L916.6 312.8 L921.4 307.4Z" fill="#9d9d9d" stroke="#9d9d9d"/><path d="M921.4 307.4 L916.6 312.8 L932.1 318.4 L936.9 312.9Z" fill="#9c9c9c" stroke="#9c9c9c"/><path d="M839.0 285.0 L834.1 290.0 L849.6 295.7 L854.5 290.5Z" fill="#9f9f9f" stroke="#9f9f9f"/><path d="M854.5 290.5 L849.6 295.7 L865.2 301.3 L870.0 296.1Z" fill="#9e9e9e" stroke="#9e9e9e"/><path d="M870.0 296.1 L865.2 301.3 L880.7 307.0 L885.5 301.7Z" fill="#9e9e9e" stroke="#9e9e9e"/><path d="M885.5 301.7 L880.7 307.0 L896.3 312.6 L901.1 307.2Z" fill="#9d9d9d" stroke="#9d9d9d"/><path d="M901.1 307.2 L896.3 312.6 L911.8 318.3 L916.6 312.8Z" fill="#9c9c9c" stroke="#9c9c9c"/><path d="M916.6 312.8 L911.8 318.3 L927.4 323.9 L932.1 318.4Z" fill="#9b9b9b" stroke="#9b9b9b"/><path d="M834.1 290.0 L829.3 295.1 L844.9 300.9 L849.6 295.7Z" fill="#9f9f9f" stroke="#9f9f9f"/><path d="M849.6 295.7 L844.9 300.9 L860.4 306.6 L865.2 301.3Z" fill="#9e9e9e" stroke="#9e9e9e"/><path d="M865.2 301.3 L860.4 306.6 L876.0 312.3 L880.7 307.0Z" fill="#9d9d9d" stroke="#9d9d9d"/><path d="M880.7 307.0 L876.0 312.3 L891.6 318.1 L896.3 312.6Z" fill="#9c9c9c" stroke="#9c9c9c"/><path d="M896.3 312.6 L891.6 318.1 L907.1 323.8 L911.8 318.3Z" fill="#9b9b9b" stroke="#9b9b9b"/><path d="M911.8 318.3 L907.1 323.8 L922.7 329.5 L927.4 323.9Z" fill="#9b9b9b" stroke="#9b9b9b"/><path d="M829.3 295.1 L824.6 300.3 L840.2 306.1 L844.9 300.9Z" fill="#9e9e9e" stroke="#9e9e9e"/><path d="M844.9 300.9 L840.2 306.1 L855.8 312.0 L860.4 306.6Z" fill="#9d9d9d" stroke="#9d9d9d"/><path d="M860.4 306.6 L855.8 312.0 L871.3 317.8 L876.0 312.3Z" fill="#9c9c9c" stroke="#9c9c9c"/><path d="M876.0 312.3 L871.3 317.8 L886.9 323.6 L891.6 318.1Z" fill="#9c9c9c" stroke="#9c9c9c"/><path d="M891.6 318.1 L886.9 323.6 L902.5 329.4 L907.1 323.8Z" fill="#9b9b9b" stroke="#9b9b9b"/><path d="M907.1 323.8 L902.5 329.4 L918.1 335.2 L922.7 329.5Z" fill="#9a9a9a" stroke="#9a9a9a"/><path d="M824.6 300.3 L819.9 305.6 L835.5 311.5 L840.2 306.1Z" fill="#9d9d9d" stroke="#9d9d9d"/><path d="M840.2 306.1 L835.5 311.5 L851.1 317.4 L855.8 312.0Z" fill="#9c9c9c" stroke="#9c9c9c"/><path d="M855.8 312.0 L851.1 317.4 L866.7 323.2 L871.3 317.8Z" fill="#9c9c9c" stroke="#9c9c9c"/><path d="M871.3 317.8 L866.7 323.2 L882.3 329.1 L886.9 323.6Z" fill="#9b9b9b" stroke="#9b9b9b"/><path d="M886.9 323.6 L882.3 329.1 L897.9 335.0 L902.5 329.4Z" fill="#9a9a9a" stroke="#9a9a9a"/><path d="M902.5 329.4 L897.9 335.0 L913.5 340.9 L918.1 335.2Z" fill="#999999" stroke="#999999"/><path d="M819.9 305.6 L815.3 310.9 L831.0 316.9 L835.5 311.5Z" fill="#9c9c9c" stroke="#9c9c9c"/><path d="M835.5 311.5 L831.0 316.9 L846.6 322.8 L851.1 317.4Z" fill="#9c9c9c" stroke="#9c9c9c"/><path d="M851.1 317.4 L846.6 322.8 L862.2 328.8 L866.7 323.2Z" fill="#9b9b9b" stroke="#9b9b9b"/><path d="M866.7 323.2 L862.2 328.8 L877.8 334.7 L882.3 329.1Z" fill="#9a9a9a" stroke="#9a9a9a"/><path d="M882.3 329.1 L877.8 334.7 L893.4 340.7 L897.9 335.0Z" fill="#999999" stroke="#999999"/><path d="M897.9 335.0 L893.4 340.7 L909.0 346.6 L913.5 340.9Z" fill="#989898" stroke="#989898"/><path d="M815.3 310.9 L810.8 316.3 L826.4 322.3 L831.0 316.9Z" fill="#9c9c9c" stroke="#9c9c9c"/><path d="M831.0 316.9 L826.4 322.3 L842.1 328.3 L846.6 322.8Z" fill="#9b9b9b" stroke="#9b9b9b"/><path d="M846.6 322.8 L842.1 328.3 L857.7 334.3 L862.2 328.8Z" fill="#9a9a9a" stroke="#9a9a9a"/><path d="M862.2 328.8 L857.7 334.3 L873.3 340.4 L877.8 334.7Z" fill="#999999" stroke="#999999"/><path d="M877.8 334.7 L873.3 340.4 L888.9 346.4 L893.4 340.7Z" fill="#989898" stroke="#989898"/><path d="M893.4 340.7 L888.9 346.4 L904.5 352.4 L909.0 346.6Z" fill="#989898" stroke="#989898"/><path d="M810.8 316.3 L806.4 321.7 L822.0 327.8 L826.4 322.3Z" fill="#9b9b9b" stroke="#9b9b9b"/><path d="M826.4 322.3 L822.0 327.8 L837.6 333.9 L842.1 328.3Z" fill="#9a9a9a" stroke="#9a9a9a"/><path d="M842.1 328.3 L837.6 333.9 L853.2 340.0 L857.7 334.3Z" fill="#999999" stroke="#999999"/><path d="M857.7 334.3 L853.2 340.0 L868.9 346.0 L873.3 340.4Z" fill="#989898" stroke="#989898"/><path d="M873.3 340.4 L868.9 346.0 L884.5 352.1 L888.9 346.4Z" fill="#989898" stroke="#989898"/><path d="M888.9 346.4 L884.5 352.1 L900.1 358.2 L904.5 352.4Z" fill="#979797" stroke="#979797"/><path d="M806.4 321.7 L802.0 327.2 L817.6 333.3 L822.0 327.8Z" fill="#9a9a9a" stroke="#9a9a9a"/><path d="M822.0 327.8 L817.6 333.3 L833.2 339.5 L837.6 333.9Z" fill="#999999" stroke="#999999"/><path d="M837.6 333.9 L833.2 339.5 L848.9 345.6 L853.2 340.0Z" fill="#999999" stroke="#999999"/><path d="M853.2 340.0 L848.9 345.6 L864.5 351.8 L868.9 346.0Z" fill="#989898" stroke="#989898"/><path d="M868.9 346.0 L864.5 351.8 L880.1 357.9 L884.5 352.1Z" fill="#979797" stroke="#979797"/><path d="M884.5 352.1 L880.1 357.9 L895.8 364.1 L900.1 358.2Z" fill="#969696" stroke="#969696"/><path d="M802.0 327.2 L797.6 332.7 L813.3 338.9 L817.6 333.3Z" fill="#999999" stroke="#999999"/><path d="M817.6 333.3 L813.3 338.9 L828.9 345.1 L833.2 339.5Z" fill="#999999" stroke="#999999"/><path d="M833.2 339.5 L828.9 345.1 L844.5 351.3 L848.9 345.6Z" fill="#989898" stroke="#989898"/><path d="M848.9 345.6 L844.5 351.3 L860.2 357.5 L864.5 351.8Z" fill="#979797" stroke="#979797"/><path d="M864.5 351.8 L860.2 357.5 L875.8 363.8 L880.1 357.9Z" fill="#969696" stroke="#969696"/><path d="M880.1 357.9 L875.8 363.8 L891.4 370.0 L895.8 364.1Z" fill="#959595" stroke="#959595"/><path d="M797.6 332.7 L793.4 338.3 L809.0 344.5 L813.3 338.9Z" fill="#999999" stroke="#999999"/><path d="M813.3 338.9 L809.0 344.5 L824.6 350.8 L828.9 345.1Z" fill="#989898" stroke="#989898"/><path d="M828.9 345.1 L824.6 350.8 L840.3 357.1 L844.5 351.3Z" fill="#979797" stroke="#979797"/><path d="M844.5 351.3 L840.3 357.1 L855.9 363.4 L860.2 357.5Z" fill="#969696" stroke="#969696"/><path d="M860.2 357.5 L855.9 363.4 L871.5 369.6 L875.8 363.8Z" fill="#959595" stroke="#959595"/><path d="M875.8 363.8 L871.5 369.6 L887.2 375.9 L891.4 370.0Z" fill="#949494" stroke="#949494"/><path d="M793.4 338.3 L789.2 343.9 L804.8 350.2 L809.0 344.5Z" fill="#989898" stroke="#989898"/><path d="M809.0 344.5 L804.8 350.2 L820.4 356.5 L824.6 350.8Z" fill="#979797" stroke="#979797"/><path d="M824.6 350.8 L820.4 356.5 L836.1 362.9 L840.3 357.1Z" fill="#969696" stroke="#969696"/><path d="M840.3 357.1 L836.1 362.9 L851.7 369.2 L855.9 363.4Z" fill="#959595" stroke="#959595"/><path d="M855.9 363.4 L851.7 369.2 L867.3 375.5 L871.5 369.6Z" fill="#949494" stroke="#949494"/><path d="M871.5 369.6 L867.3 375.5 L883.0 381.9 L887.2 375.9Z" fill="#949494" stroke="#949494"/><path d="M789.2 343.9 L785.0 349.5 L800.6 355.9 L804.8 350.2Z" fill="#979797" stroke="#979797"/><path d="M804.8 350.2 L800.6 355.9 L816.3 362.3 L820.4 356.5Z" fill="#969696" stroke="#969696"/><path d="M820.4 356.5 L816.3 362.3 L831.9 368.7 L836.1 362.9Z" fill="#959595" stroke="#959595"/><path d="M836.1 362.9 L831.9 368.7 L847.5 375.1 L851.7 369.2Z" fill="#959595" stroke="#959595"/><path d="M851.7 369.2 L847.5 375.1 L863.2 381.5 L867.3 375.5Z" fill="#949494" stroke="#949494"/><path d="M867.3 375.5 L863.2 381.5 L878.8 387.9 L883.0 381.9Z" fill="#939393" stroke="#939393"/><path d="M785.0 349.5 L780.9 355.2 L796.6 361.7 L800.6 355.9Z" fill="#969696" stroke="#969696"/><path d="M800.6 355.9 L796.6 361.7 L812.2 368.1 L816.3 362.3Z" fill="#959595" stroke="#959595"/><path d="M816.3 362.3 L812.2 368.1 L827.8 374.6 L831.9 368.7Z" fill="#959595" stroke="#959595"/><path d="M831.9 368.7 L827.8 374.6 L843.4 381.0 L847.5 375.1Z" fill="#949494" stroke="#949494"/><path d="M847.5 375.1 L843.4 381.0 L859.1 387.5 L863.2 381.5Z" fill="#939393" stroke="#939393"/><path d="M863.2 381.5 L859.1 387.5 L874.7 393.9 L878.8 387.9Z" fill="#929292" stroke="#929292"/><path d="M780.9 355.2 L776.9 361.0 L792.5 367.5 L796.6 361.7Z" fill="#959595" stroke="#959595"/><path d="M796.6 361.7 L792.5 367.5 L808.1 374.0 L812.2 368.1Z" fill="#959595" stroke="#959595"/><path d="M812.2 368.1 L808.1 374.0 L823.8 380.5 L827.8 374.6Z" fill="#949494" stroke="#949494"/><path d="M827.8 374.6 L823.8 380.5 L839.4 387.0 L843.4 381.0Z" fill="#939393" stroke="#939393"/><path d="M843.4 381.0 L839.4 387.0 L855.0 393.5 L859.1 387.5Z" fill="#929292" stroke="#929292"/><path d="M859.1 387.5 L855.0 393.5 L870.6 400.0 L874.7 393.9Z" fill="#919191" stroke="#919191"/><path d="M776.9 361.0 L772.9 366.8 L788.5 373.3 L792.5 367.5Z" fill="#959595" stroke="#959595"/><path d="M792.5 367.5 L788.5 373.3 L804.1 379.9 L808.1 374.0Z" fill="#949494" stroke="#949494"/><path d="M808.1 374.0 L804.1 379.9 L819.8 386.4 L823.8 380.5Z" fill="#939393" stroke="#939393"/><path d="M823.8 380.5 L819.8 386.4 L835.4 393.0 L839.4 387.0Z" fill="#929292" stroke="#929292"/><path d="M839.4 387.0 L835.4 393.0 L851.0 399.5 L855.0 393.5Z" fill="#919191" stroke="#919191"/><path d="M855.0 393.5 L851.0 399.5 L866.6 406.1 L870.6 400.0Z" fill="#909090" stroke="#909090"/><path d="M772.9 366.8 L769.0 372.6 L784.6 379.2 L788.5 373.3Z" fill="#949494" stroke="#949494"/><path d="M788.5 373.3 L784.6 379.2 L800.2 385.8 L804.1 379.9Z" fill="#939393" stroke="#939393"/><path d="M804.1 379.9 L800.2 385.8 L815.8 392.4 L819.8 386.4Z" fill="#929292" stroke="#929292"/><path d="M819.8 386.4 L815.8 392.4 L831.4 399.0 L835.4 393.0Z" fill="#919191" stroke="#919191"/><path d="M835.4 393.0 L831.4 399.0 L847.0 405.6 L851.0 399.5Z" fill="#909090" stroke="#909090"/><path d="M851.0 399.5 L847.0 405.6 L862.6 412.2 L866.6 406.1Z" fill="#8e8e8e" stroke="#8e8e8e"/><path d="M769.0 372.6 L765.1 378.4 L780.7 385.1 L784.6 379.2Z" fill="#939393" stroke="#939393"/><path d="M784.6 379.2 L780.7 385.1 L796.3 391.7 L800.2 385.8Z" fill="#929292" stroke="#929292"/><path d="M800.2 385.8 L796.3 391.7 L811.9 398.4 L815.8 392.4Z" fill="#919191" stroke="#919191"/><path d="M815.8 392.4 L811.9 398.4 L827.5 405.0 L831.4 399.0Z" fill="#909090" stroke="#909090"/><path d="M831.4 399.0 L827.5 405.0 L843.1 411.7 L847.0 405.6Z" fill="#8e8e8e" stroke="#8e8e8e"/><path d="M847.0 405.6 L843.1 411.7 L858.7 418.4 L862.6 412.2Z" fill="#8d8d8d" stroke="#8d8d8d"/><path d="M765.1 378.4 L761.3 384.3 L776.9 391.0 L780.7 385.1Z" fill="#929292" stroke="#929292"/><path d="M780.7 385.1 L776.9 391.0 L792.5 397.7 L796.3 391.7Z" fill="#919191" stroke="#919191"/><path d="M796.3 391.7 L792.5 397.7 L808.1 404.4 L811.9 398.4Z" fill="#909090" stroke="#909090"/><path d="M811.9 398.4 L808.1 404.4 L823.7 411.1 L827.5 405.0Z" fill="#8e8e8e" stroke="#8e8e8e"/><path d="M827.5 405.0 L823.7 411.1 L839.3 417.8 L843.1 411.7Z" fill="#8d8d8d" stroke="#8d8d8d"/><path d="M843.1 411.7 L839.3 417.8 L854.8 424.5 L858.7 418.4Z" fill="#8c8c8c" stroke="#8c8c8c"/><path d="M761.3 384.3 L757.6 390.3 L773.1 397.0 L776.9 391.0Z" fill="#919191" stroke="#919191"/><path d="M776.9 391.0 L773.1 397.0 L788.7 403.8 L792.5 397.7Z" fill="#909090" stroke="#909090"/><path d="M792.5 397.7 L788.7 403.8 L804.3 410.5 L808.1 404.4Z" fill="#8e8e8e" stroke="#8e8e8e"/><path d="M808.1 404.4 L804.3 410.5 L819.9 417.3 L823.7 411.1Z" fill="#8d8d8d" stroke="#8d8d8d"/><path d="M823.7 411.1 L819.9 417.3 L835.4 424.0 L839.3 417.8Z" fill="#8c8c8c" stroke="#8c8c8c"/><path d="M839.3 417.8 L835.4 424.0 L851.0 430.8 L854.8 424.5Z" fill="#8b8b8b" stroke="#8b8b8b"/><path d="M757.6 390.3 L753.9 396.2 L769.4 403.0 L773.1 397.0Z" fill="#8f8f8f" stroke="#8f8f8f"/><path d="M773.1 397.0 L769.4 403.0 L785.0 409.8 L788.7 403.8Z" fill="#8e8e8e" stroke="#8e8e8e"/><path d="M788.7 403.8 L785.0 409.8 L800.6 416.6 L804.3 410.5Z" fill="#8d8d8d" stroke="#8d8d8d"/><path d="M804.3 410.5 L800.6 416.6 L816.1 423.4 L819.9 417.3Z" fill="#8c8c8c" stroke="#8c8c8c"/><path d="M819.9 417.3 L816.1 423.4 L831.7 430.2 L835.4 424.0Z" fill="#8b8b8b" stroke="#8b8b8b"/><path d="M835.4 424.0 L831.7 430.2 L847.2 437.0 L851.0 430.8Z" fill="#8a8a8a" stroke="#8a8a8a"/><path d="M753.9 396.2 L750.2 402.2 L765.8 409.1 L769.4 403.0Z" fill="#8e8e8e" stroke="#8e8e8e"/><path d="M769.4 403.0 L765.8 409.1 L781.3 415.9 L785.0 409.8Z" fill="#8d8d8d" stroke="#8d8d8d"/><path d="M785.0 409.8 L781.3 415.9 L796.9 422.8 L800.6 416.6Z" fill="#8c8c8c" stroke="#8c8c8c"/><path d="M800.6 416.6 L796.9 422.8 L812.4 429.6 L816.1 423.4Z" fill="#8b8b8b" stroke="#8b8b8b"/><path d="M816.1 423.4 L812.4 429.6 L828.0 436.4 L831.7 430.2Z" fill="#8a8a8a" stroke="#8a8a8a"/><path d="M831.7 430.2 L828.0 436.4 L843.5 443.3 L847.2 437.0Z" fill="#898989" stroke="#898989"/><path d="M750.2 402.2 L746.6 408.2 L762.1 415.1 L765.8 409.1Z" fill="#8d8d8d" stroke="#8d8d8d"/><path d="M765.8 409.1 L762.1 415.1 L777.7 422.0 L781.3 415.9Z" fill="#8c8c8c" stroke="#8c8c8c"/><path d="M781.3 415.9 L777.7 422.0 L793.2 428.9 L796.9 422.8Z" fill="#8b8b8b" stroke="#8b8b8b"/><path d="M796.9 422.8 L793.2 428.9 L808.7 435.8 L812.4 429.6Z" fill="#8a8a8a" stroke="#8a8a8a"/><path d="M812.4 429.6 L808.7 435.8 L824.3 442.7 L828.0 436.4Z" fill="#898989" stroke="#898989"/><path d="M828.0 436.4 L824.3 442.7 L839.8 449.6 L843.5 443.3Z" fill="#888888" stroke="#888888"/><path d="M746.6 408.2 L743.1 414.3 L758.6 421.2 L762.1 415.1Z" fill="#8c8c8c" stroke="#8c8c8c"/><path d="M762.1 415.1 L758.6 421.2 L774.1 428.2 L777.7 422.0Z" fill="#8b8b8b" stroke="#8b8b8b"/><path d="M777.7 422.0 L774.1 428.2 L789.6 435.1 L793.2 428.9Z" fill="#8a8a8a" stroke="#8a8a8a"/><path d="M793.2 428.9 L789.6 435.1 L805.1 442.0 L808.7 435.8Z" fill="#898989" stroke="#898989"/><path d="M808.7 435.8 L805.1 442.0 L820.7 449.0 L824.3 442.7Z" fill="#888888" stroke="#888888"/><path d="M824.3 442.7 L820.7 449.0 L836.2 455.9 L839.8 449.6Z" fill="#868686" stroke="#868686"/><path d="M743.1 414.3 L739.6 420.4 L755.1 427.4 L758.6 421.2Z" fill="#8b8b8b" stroke="#8b8b8b"/><path d="M758.6 421.2 L755.1 427.4 L770.6 434.3 L774.1 428.2Z" fill="#8a8a8a" stroke="#8a8a8a"/><path d="M774.1 428.2 L770.6 434.3 L786.1 441.3 L789.6 435.1Z" fill="#898989" stroke="#898989"/><path d="M789.6 435.1 L786.1 441.3 L801.6 448.3 L805.1 442.0Z" fill="#888888" stroke="#888888"/><path d="M805.1 442.0 L801.6 448.3 L817.1 455.3 L820.7 449.0Z" fill="#868686" stroke="#868686"/><path d="M820.7 449.0 L817.1 455.3 L832.6 462.3 L836.2 455.9Z" fill="#858585" stroke="#858585"/><path d="M739.6 420.4 L736.1 426.5 L751.6 433.5 L755.1 427.4Z" fill="#8a8a8a" stroke="#8a8a8a"/><path d="M755.1 427.4 L751.6 433.5 L767.1 440.5 L770.6 434.3Z" fill="#898989" stroke="#898989"/><path d="M770.6 434.3 L767.1 440.5 L782.6 447.6 L786.1 441.3Z" fill="#878787" stroke="#878787"/><path d="M786.1 441.3 L782.6 447.6 L798.1 454.6 L801.6 448.3Z" fill="#868686" stroke="#868686"/><path d="M801.6 448.3 L798.1 454.6 L813.6 461.6 L817.1 455.3Z" fill="#858585" stroke="#858585"/><path d="M817.1 455.3 L813.6 461.6 L829.0 468.7 L832.6 462.3Z" fill="#848484" stroke="#848484"/><path d="M736.1 426.5 L732.7 432.6 L748.2 439.7 L751.6 433.5Z" fill="#898989" stroke="#898989"/><path d="M751.6 433.5 L748.2 439.7 L763.7 446.8 L767.1 440.5Z" fill="#878787" stroke="#878787"/><path d="M767.1 440.5 L763.7 446.8 L779.1 453.8 L782.6 447.6Z" fill="#868686" stroke="#868686"/><path d="M782.6 447.6 L779.1 453.8 L794.6 460.9 L798.1 454.6Z" fill="#858585" stroke="#858585"/><path d="M798.1 454.6 L794.6 460.9 L810.1 468.0 L813.6 461.6Z" fill="#848484" stroke="#848484"/><path d="M813.6 461.6 L810.1 468.0 L825.5 475.1 L829.0 468.7Z" fill="#838383" stroke="#838383"/><path d="M732.7 432.6 L729.4 438.8 L744.8 445.9 L748.2 439.7Z" fill="#878787" stroke="#878787"/><path d="M748.2 439.7 L744.8 445.9 L760.3 453.0 L763.7 446.8Z" fill="#868686" stroke="#868686"/><path d="M763.7 446.8 L760.3 453.0 L775.7 460.1 L779.1 453.8Z" fill="#858585" stroke="#858585"/><path d="M779.1 453.8 L775.7 460.1 L791.2 467.3 L794.6 460.9Z" fill="#848484" stroke="#848484"/><path d="M794.6 460.9 L791.2 467.3 L806.6 474.4 L810.1 468.0Z" fill="#838383" stroke="#838383"/><path d="M810.1 468.0 L806.6 474.4 L822.1 481.5 L825.5 475.1Z" fill="#818181" stroke="#818181"/><path d="M729.4 438.8 L726.1 445.0 L741.5 452.1 L744.8 445.9Z" fill="#868686" stroke="#868686"/><path d="M744.8 445.9 L741.5 452.1 L756.9 459.3 L760.3 453.0Z" fill="#858585" stroke="#858585"/><path d="M760.3 453.0 L756.9 459.3 L772.4 466.5 L775.7 460.1Z" fill="#848484" stroke="#848484"/><path d="M775.7 460.1 L772.4 466.5 L787.8 473.6 L791.2 467.3Z" fill="#838383" stroke="#838383"/><path d="M791.2 467.3 L787.8 473.6 L803.2 480.8 L806.6 474.4Z" fill="#818181" stroke="#818181"/><path d="M806.6 474.4 L803.2 480.8 L818.7 488.0 L822.1 481.5Z" fill="#808080" stroke="#808080"/><path d="M726.1 445.0 L722.8 451.2 L738.2 458.4 L741.5 452.1Z" fill="#858585" stroke="#858585"/><path d="M741.5 452.1 L738.2 458.4 L753.6 465.6 L756.9 459.3Z" fill="#848484" stroke="#848484"/><path d="M756.9 459.3 L753.6 465.6 L769.1 472.8 L772.4 466.5Z" fill="#828282" stroke="#828282"/><path d="M772.4 466.5 L769.1 472.8 L784.5 480.0 L787.8 473.6Z" fill="#818181" stroke="#818181"/><path d="M787.8 473.6 L784.5 480.0 L799.9 487.2 L803.2 480.8Z" fill="#808080" stroke="#808080"/><path d="M803.2 480.8 L799.9 487.2 L815.3 494.5 L818.7 488.0Z" fill="#7f7f7f" stroke="#7f7f7f"/><path d="M722.8 451.2 L719.6 457.4 L735.0 464.7 L738.2 458.4Z" fill="#838383" stroke="#838383"/><path d="M738.2 458.4 L735.0 464.7 L750.4 471.9 L753.6 465.6Z" fill="#828282" stroke="#828282"/><path d="M753.6 465.6 L750.4 471.9 L765.8 479.2 L769.1 472.8Z" fill="#818181" stroke="#818181"/><path d="M769.1 472.8 L765.8 479.2 L781.2 486.4 L784.5 480.0Z" fill="#808080" stroke="#808080"/><path d="M784.5 480.0 L781.2 486.4 L796.6 493.7 L799.9 487.2Z" fill="#7f7f7f" stroke="#7f7f7f"/><path d="M799.9 487.2 L796.6 493.7 L812.0 501.0 L815.3 494.5Z" fill="#7e7e7e" stroke="#7e7e7e"/><path d="M719.6 457.4 L716.4 463.7 L731.8 471.0 L735.0 464.7Z" fill="#818181" stroke="#818181"/><path d="M735.0 464.7 L731.8 471.0 L747.2 478.3 L750.4 471.9Z" fill="#808080" stroke="#808080"/><path d="M750.4 471.9 L747.2 478.3 L762.6 485.6 L765.8 479.2Z" fill="#808080" stroke="#808080"/><path d="M765.8 479.2 L762.6 485.6 L777.9 492.9 L781.2 486.4Z" fill="#7f7f7f" stroke="#7f7f7f"/><path d="M781.2 486.4 L777.9 492.9 L793.3 500.2 L796.6 493.7Z" fill="#7e7e7e" stroke="#7e7e7e"/><path d="M796.6 493.7 L793.3 500.2 L808.7 507.5 L812.0 501.0Z" fill="#7d7d7d" stroke="#7d7d7d"/><path d="M716.4 463.7 L713.3 470.0 L728.7 477.3 L731.8 471.0Z" fill="#7f7f7f" stroke="#7f7f7f"/><path d="M731.8 471.0 L728.7 477.3 L744.0 484.7 L747.2 478.3Z" fill="#7f7f7f" stroke="#7f7f7f"/><path d="M747.2 478.3 L744.0 484.7 L759.4 492.0 L762.6 485.6Z" fill="#7e7e7e" stroke="#7e7e7e"/><path d="M762.6 485.6 L759.4 492.0 L774.7 499.3 L777.9 492.9Z" fill="#7e7e7e" stroke="#7e7e7e"/><path d="M777.9 492.9 L774.7 499.3 L790.1 506.7 L793.3 500.2Z" fill="#7d7d7d" stroke="#7d7d7d"/><path d="M793.3 500.2 L790.1 506.7 L805.5 514.0 L808.7 507.5Z" fill="#7c7c7c" stroke="#7c7c7c"/><path d="M713.3 470.0 L710.2 476.3 L725.6 483.7 L728.7 477.3Z" fill="#7e7e7e" stroke="#7e7e7e"/><path d="M728.7 477.3 L725.6 483.7 L740.9 491.1 L744.0 484.7Z" fill="#7d7d7d" stroke="#7d7d7d"/><path d="M744.0 484.7 L740.9 491.1 L756.3 498.4 L759.4 492.0Z" fill="#7d7d7d" stroke="#7d7d7d"/><path d="M759.4 492.0 L756.3 498.4 L771.6 505.8 L774.7 499.3Z" fill="#7c7c7c" stroke="#7c7c7c"/><path d="M774.7 499.3 L771.6 505.8 L786.9 513.2 L790.1 506.7Z" fill="#7c7c7c" stroke="#7c7c7c"/><path d="M790.1 506.7 L786.9 513.2 L802.3 520.6 L805.5 514.0Z" fill="#7b7b7b" stroke="#7b7b7b"/><path d="M710.2 476.3 L707.2 482.6 L722.5 490.0 L725.6 483.7Z" fill="#7c7c7c" stroke="#7c7c7c"/><path d="M725.6 483.7 L722.5 490.0 L737.9 497.5 L740.9 491.1Z" fill="#7b7b7b" stroke="#7b7b7b"/><path d="M740.9 491.1 L737.9 497.5 L753.2 504.9 L756.3 498.4Z" fill="#7b7b7b" stroke="#7b7b7b"/><path d="M756.3 498.4 L753.2 504.9 L768.5 512.3 L771.6 505.8Z" fill="#7b7b7b" stroke="#7b7b7b"/><path d="M771.6 505.8 L768.5 512.3 L783.8 519.8 L786.9 513.2Z" fill="#7a7a7a" stroke="#7a7a7a"/><path d="M786.9 513.2 L783.8 519.8 L799.1 527.2 L802.3 520.6Z" fill="#7a7a7a" stroke="#7a7a7a"/><path d="M707.2 482.6 L704.2 489.0 L719.5 496.4 L722.5 490.0Z" fill="#7a7a7a" stroke="#7a7a7a"/><path d="M722.5 490.0 L719.5 496.4 L734.8 503.9 L737.9 497.5Z" fill="#797979" stroke="#797979"/><path d="M737.9 497.5 L734.8 503.9 L750.1 511.4 L753.2 504.9Z" fill="#797979" stroke="#797979"/><path d="M753.2 504.9 L750.1 511.4 L765.4 518.9 L768.5 512.3Z" fill="#797979" stroke="#797979"/><path d="M768.5 512.3 L765.4 518.9 L780.7 526.3 L783.8 519.8Z" fill="#797979" stroke="#797979"/><path d="M783.8 519.8 L780.7 526.3 L796.0 533.8 L799.1 527.2Z" fill="#787878" stroke="#787878"/><path d="M704.2 489.0 L701.3 495.4 L716.6 502.9 L719.5 496.4Z" fill="#777777" stroke="#777777"/><path d="M719.5 496.4 L716.6 502.9 L731.9 510.4 L734.8 503.9Z" fill="#777777" stroke="#777777"/><path d="M734.8 503.9 L731.9 510.4 L747.1 517.9 L750.1 511.4Z" fill="#777777" stroke="#777777"/><path d="M750.1 511.4 L747.1 517.9 L762.4 525.4 L765.4 518.9Z" fill="#777777" stroke="#777777"/><path d="M765.4 518.9 L762.4 525.4 L777.7 532.9 L780.7 526.3Z" fill="#777777" stroke="#777777"/><path d="M780.7 526.3 L777.7 532.9 L793.0 540.4 L796.0 533.8Z" fill="#777777" stroke="#777777"/><path d="M701.3 495.4 L698.4 501.7 L713.7 509.3 L716.6 502.9Z" fill="#757575" stroke="#757575"/><path d="M716.6 502.9 L713.7 509.3 L728.9 516.9 L731.9 510.4Z" fill="#757575" stroke="#757575"/><path d="M731.9 510.4 L728.9 516.9 L744.2 524.4 L747.1 517.9Z" fill="#757575" stroke="#757575"/><path d="M747.1 517.9 L744.2 524.4 L759.4 532.0 L762.4 525.4Z" fill="#757575" stroke="#757575"/><path d="M762.4 525.4 L759.4 532.0 L774.7 539.5 L777.7 532.9Z" fill="#767676" stroke="#767676"/><path d="M777.7 532.9 L774.7 539.5 L789.9 547.1 L793.0 540.4Z" fill="#767676" stroke="#767676"/><path d="M698.4 501.7 L695.6 508.2 L710.8 515.8 L713.7 509.3Z" fill="#727272" stroke="#727272"/><path d="M713.7 509.3 L710.8 515.8 L726.0 523.4 L728.9 516.9Z" fill="#737373" stroke="#737373"/><path d="M728.9 516.9 L726.0 523.4 L741.3 531.0 L744.2 524.4Z" fill="#737373" stroke="#737373"/><path d="M744.2 524.4 L741.3 531.0 L756.5 538.6 L759.4 532.0Z" fill="#747474" stroke="#747474"/><path d="M759.4 532.0 L756.5 538.6 L771.7 546.1 L774.7 539.5Z" fill="#747474" stroke="#747474"/><path d="M774.7 539.5 L771.7 546.1 L787.0 553.7 L789.9 547.1Z" fill="#747474" stroke="#747474"/><path d="M695.6 508.2 L692.8 514.6 L708.0 522.2 L710.8 515.8Z" fill="#707070" stroke="#707070"/><path d="M710.8 515.8 L708.0 522.2 L723.2 529.9 L726.0 523.4Z" fill="#717171" stroke="#717171"/><path d="M726.0 523.4 L723.2 529.9 L738.4 537.5 L741.3 531.0Z" fill="#717171" stroke="#717171"/><path d="M741.3 531.0 L738.4 537.5 L753.6 545.2 L756.5 538.6Z" fill="#727272" stroke="#727272"/><path d="M756.5 538.6 L753.6 545.2 L768.8 552.8 L771.7 546.1Z" fill="#727272" stroke="#727272"/><path d="M771.7 546.1 L768.8 552.8 L784.0 560.4 L787.0 553.7Z" fill="#737373" stroke="#737373"/><path d="M692.8 514.6 L690.1 521.1 L705.2 528.7 L708.0 522.2Z" fill="#6e6e6e" stroke="#6e6e6e"/><path d="M708.0 522.2 L705.2 528.7 L720.4 536.4 L723.2 529.9Z" fill="#6e6e6e" stroke="#6e6e6e"/><path d="M723.2 529.9 L720.4 536.4 L735.6 544.1 L738.4 537.5Z" fill="#6f6f6f" stroke="#6f6f6f"/><path d="M738.4 537.5 L735.6 544.1 L750.8 551.8 L753.6 545.2Z" fill="#707070" stroke="#707070"/><path d="M753.6 545.2 L750.8 551.8 L765.9 559.5 L768.8 552.8Z" fill="#717171" stroke="#717171"/><path d="M768.8 552.8 L765.9 559.5 L781.1 567.1 L784.0 560.4Z" fill="#727272" stroke="#727272"/><path d="M690.1 521.1 L687.4 527.5 L702.5 535.3 L705.2 528.7Z" fill="#6b6b6b" stroke="#6b6b6b"/><path d="M705.2 528.7 L702.5 535.3 L717.7 543.0 L720.4 536.4Z" fill="#6c6c6c" stroke="#6c6c6c"/><path d="M720.4 536.4 L717.7 543.0 L732.8 550.7 L735.6 544.1Z" fill="#6d6d6d" stroke="#6d6d6d"/><path d="M735.6 544.1 L732.8 550.7 L748.0 558.4 L750.8 551.8Z" fill="#6e6e6e" stroke="#6e6e6e"/><path d="M750.8 551.8 L748.0 558.4 L763.1 566.1 L765.9 559.5Z" fill="#6f6f6f" stroke="#6f6f6f"/><path d="M765.9 559.5 L763.1 566.1 L778.3 573.9 L781.1 567.1Z" fill="#707070" stroke="#707070"/><path d="M687.4 527.5 L684.7 534.0 L699.8 541.8 L702.5 535.3Z" fill="#696969" stroke="#696969"/><path d="M702.5 535.3 L699.8 541.8 L715.0 549.6 L717.7 543.0Z" fill="#6a6a6a" stroke="#6a6a6a"/><path d="M717.7 543.0 L715.0 549.6 L730.1 557.3 L732.8 550.7Z" fill="#6b6b6b" stroke="#6b6b6b"/><path d="M732.8 550.7 L730.1 557.3 L745.2 565.1 L748.0 558.4Z" fill="#6d6d6d" stroke="#6d6d6d"/><path d="M748.0 558.4 L745.2 565.1 L760.3 572.8 L763.1 566.1Z" fill="#6e6e6e" stroke="#6e6e6e"/><path d="M763.1 566.1 L760.3 572.8 L775.5 580.6 L778.3 573.9Z" fill="#6f6f6f" stroke="#6f6f6f"/><path d="M684.7 534.0 L682.1 540.6 L697.2 548.4 L699.8 541.8Z" fill="#666666" stroke="#666666"/><path d="M699.8 541.8 L697.2 548.4 L712.3 556.2 L715.0 549.6Z" fill="#686868" stroke="#686868"/><path d="M715.0 549.6 L712.3 556.2 L727.4 564.0 L730.1 557.3Z" fill="#696969" stroke="#696969"/><path d="M730.1 557.3 L727.4 564.0 L742.5 571.8 L745.2 565.1Z" fill="#6b6b6b" stroke="#6b6b6b"/><path d="M745.2 565.1 L742.5 571.8 L757.6 579.6 L760.3 572.8Z" fill="#6c6c6c" stroke="#6c6c6c"/><path d="M760.3 572.8 L757.6 579.6 L772.7 587.4 L775.5 580.6Z" fill="#6e6e6e" stroke="#6e6e6e"/><path d="M682.1 540.6 L679.6 547.1 L694.7 554.9 L697.2 548.4Z" fill="#646464" stroke="#646464"/><path d="M697.2 548.4 L694.7 554.9 L709.7 562.8 L712.3 556.2Z" fill="#666666" stroke="#666666"/><path d="M712.3 556.2 L709.7 562.8 L724.8 570.6 L727.4 564.0Z" fill="#676767" stroke="#676767"/><path d="M727.4 564.0 L724.8 570.6 L739.8 578.5 L742.5 571.8Z" fill="#696969" stroke="#696969"/><path d="M742.5 571.8 L739.8 578.5 L754.9 586.3 L757.6 579.6Z" fill="#6b6b6b" stroke="#6b6b6b"/><path d="M757.6 579.6 L754.9 586.3 L770.0 594.1 L772.7 587.4Z" fill="#6c6c6c" stroke="#6c6c6c"/><path d="M679.6 547.1 L677.1 553.7 L692.1 561.5 L694.7 554.9Z" fill="#616161" stroke="#616161"/><path d="M694.7 554.9 L692.1 561.5 L707.2 569.4 L709.7 562.8Z" fill="#636363" stroke="#636363"/><path d="M709.7 562.8 L707.2 569.4 L722.2 577.3 L724.8 570.6Z" fill="#656565" stroke="#656565"/><path d="M724.8 570.6 L722.2 577.3 L737.2 585.2 L739.8 578.5Z" fill="#676767" stroke="#676767"/><path d="M739.8 578.5 L737.2 585.2 L752.3 593.1 L754.9 586.3Z" fill="#696969" stroke="#696969"/><path d="M754.9 586.3 L752.3 593.1 L767.3 600.9 L770.0 594.1Z" fill="#6b6b6b" stroke="#6b6b6b"/><path d="M677.1 553.7 L674.7 560.2 L689.7 568.2 L692.1 561.5Z" fill="#5f5f5f" stroke="#5f5f5f"/><path d="M692.1 561.5 L689.7 568.2 L704.7 576.1 L707.2 569.4Z" fill="#616161" stroke="#616161"/><path d="M707.2 569.4 L704.7 576.1 L719.6 584.0 L722.2 577.3Z" fill="#636363" stroke="#636363"/><path d="M722.2 577.3 L719.6 584.0 L734.6 591.9 L737.2 585.2Z" fill="#656565" stroke="#656565"/><path d="M737.2 585.2 L734.6 591.9 L749.6 599.8 L752.3 593.1Z" fill="#686868" stroke="#686868"/><path d="M752.3 593.1 L749.6 599.8 L764.6 607.7 L767.3 600.9Z" fill="#6a6a6a" stroke="#6a6a6a"/><path d="M674.7 560.2 L672.3 566.8 L687.2 574.8 L689.7 568.2Z" fill="#5d5d5d" stroke="#5d5d5d"/><path d="M689.7 568.2 L687.2 574.8 L702.2 582.7 L704.7 576.1Z" fill="#5f5f5f" stroke="#5f5f5f"/><path d="M704.7 576.1 L702.2 582.7 L717.2 590.7 L719.6 584.0Z" fill="#616161" stroke="#616161"/><path d="M719.6 584.0 L717.2 590.7 L732.1 598.7 L734.6 591.9Z" fill="#646464" stroke="#646464"/><path d="M734.6 591.9 L732.1 598.7 L747.1 606.6 L749.6 599.8Z" fill="#666666" stroke="#666666"/><path d="M749.6 599.8 L747.1 606.6 L762.0 614.6 L764.6 607.7Z" fill="#686868" stroke="#686868"/><path d="M672.3 566.8 L669.9 573.5 L684.9 581.5 L687.2 574.8Z" fill="#5a5a5a" stroke="#5a5a5a"/><path d="M687.2 574.8 L684.9 581.5 L699.8 589.4 L702.2 582.7Z" fill="#5d5d5d" stroke="#5d5d5d"/><path d="M702.2 582.7 L699.8 589.4 L714.7 597.4 L717.2 590.7Z" fill="#5f5f5f" stroke="#5f5f5f"/><path d="M717.2 590.7 L714.7 597.4 L729.6 605.4 L732.1 598.7Z" fill="#626262" stroke="#626262"/><path d="M732.1 598.7 L729.6 605.4 L744.6 613.4 L747.1 606.6Z" fill="#646464" stroke="#646464"/><path d="M747.1 606.6 L744.6 613.4 L759.5 621.4 L762.0 614.6Z" fill="#676767" stroke="#676767"/><path d="M669.9 573.5 L667.6 580.1 L682.5 588.1 L684.9 581.5Z" fill="#575757" stroke="#575757"/><path d="M684.9 581.5 L682.5 588.1 L697.4 596.2 L699.8 589.4Z" fill="#5a5a5a" stroke="#5a5a5a"/><path d="M699.8 589.4 L697.4 596.2 L712.3 604.2 L714.7 597.4Z" fill="#5d5d5d" stroke="#5d5d5d"/><path d="M714.7 597.4 L712.3 604.2 L727.2 612.2 L729.6 605.4Z" fill="#606060" stroke="#606060"/><path d="M729.6 605.4 L727.2 612.2 L742.1 620.2 L744.6 613.4Z" fill="#636363" stroke="#636363"/><path d="M744.6 613.4 L742.1 620.2 L757.0 628.3 L759.5 621.4Z" fill="#656565" stroke="#656565"/><path d="M667.6 580.1 L665.4 586.7 L680.3 594.8 L682.5 588.1Z" fill="#555555" stroke="#555555"/><path d="M682.5 588.1 L680.3 594.8 L695.1 602.9 L697.4 596.2Z" fill="#585858" stroke="#585858"/><path d="M697.4 596.2 L695.1 602.9 L710.0 610.9 L712.3 604.2Z" fill="#5b5b5b" stroke="#5b5b5b"/><path d="M712.3 604.2 L710.0 610.9 L724.8 619.0 L727.2 612.2Z" fill="#5e5e5e" stroke="#5e5e5e"/><path d="M727.2 612.2 L724.8 619.0 L739.7 627.1 L742.1 620.2Z" fill="#616161" stroke="#616161"/><path d="M742.1 620.2 L739.7 627.1 L754.5 635.1 L757.0 628.3Z" fill="#646464" stroke="#646464"/><path d="M665.4 586.7 L663.3 593.4 L678.1 601.5 L680.3 594.8Z" fill="#535353" stroke="#535353"/><path d="M680.3 594.8 L678.1 601.5 L692.9 609.6 L695.1 602.9Z" fill="#565656" stroke="#565656"/><path d="M695.1 602.9 L692.9 609.6 L707.7 617.7 L710.0 610.9Z" fill="#595959" stroke="#595959"/><path d="M710.0 610.9 L707.7 617.7 L722.5 625.8 L724.8 619.0Z" fill="#5c5c5c" stroke="#5c5c5c"/><path d="M724.8 619.0 L722.5 625.8 L737.3 633.9 L739.7 627.1Z" fill="#5f5f5f" stroke="#5f5f5f"/><path d="M739.7 627.1 L737.3 633.9 L752.1 642.0 L754.5 635.1Z" fill="#626262" stroke="#626262"/><path d="M663.3 593.4 L661.1 600.1 L675.9 608.3 L678.1 601.5Z" fill="#515151" stroke="#515151"/><path d="M678.1 601.5 L675.9 608.3 L690.7 616.4 L692.9 609.6Z" fill="#545454" stroke="#545454"/><path d="M692.9 609.6 L690.7 616.4 L705.4 624.5 L707.7 617.7Z" fill="#575757" stroke="#575757"/><path d="M707.7 617.7 L705.4 624.5 L720.2 632.7 L722.5 625.8Z" fill="#5a5a5a" stroke="#5a5a5a"/><path d="M722.5 625.8 L720.2 632.7 L735.0 640.8 L737.3 633.9Z" fill="#5d5d5d" stroke="#5d5d5d"/><path d="M737.3 633.9 L735.0 640.8 L749.8 648.9 L752.1 642.0Z" fill="#606060" stroke="#606060"/><path d="M661.1 600.1 L659.1 606.8 L673.8 615.0 L675.9 608.3Z" fill="#4e4e4e" stroke="#4e4e4e"/><path d="M675.9 608.3 L673.8 615.0 L688.5 623.2 L690.7 616.4Z" fill="#525252" stroke="#525252"/><path d="M690.7 616.4 L688.5 623.2 L703.3 631.3 L705.4 624.5Z" fill="#555555" stroke="#555555"/><path d="M705.4 624.5 L703.3 631.3 L718.0 639.5 L720.2 632.7Z" fill="#585858" stroke="#585858"/><path d="M720.2 632.7 L718.0 639.5 L732.7 647.7 L735.0 640.8Z" fill="#5b5b5b" stroke="#5b5b5b"/><path d="M735.0 640.8 L732.7 647.7 L747.4 655.9 L749.8 648.9Z" fill="#5e5e5e" stroke="#5e5e5e"/><path d="M659.1 606.8 L657.1 613.6 L671.8 621.8 L673.8 615.0Z" fill="#4d4d4d" stroke="#4d4d4d"/><path d="M673.8 615.0 L671.8 621.8 L686.5 630.0 L688.5 623.2Z" fill="#4f4f4f" stroke="#4f4f4f"/><path d="M688.5 623.2 L686.5 630.0 L701.1 638.2 L703.3 631.3Z" fill="#535353" stroke="#535353"/><path d="M703.3 631.3 L701.1 638.2 L715.8 646.4 L718.0 639.5Z" fill="#565656" stroke="#565656"/><path d="M718.0 639.5 L715.8 646.4 L730.5 654.6 L732.7 647.7Z" fill="#595959" stroke="#595959"/><path d="M732.7 647.7 L730.5 654.6 L745.2 662.8 L747.4 655.9Z" fill="#5c5c5c" stroke="#5c5c5c"/><path d="M657.1 613.6 L655.2 620.3 L669.8 628.5 L671.8 621.8Z" fill="#4b4b4b" stroke="#4b4b4b"/><path d="M671.8 621.8 L669.8 628.5 L684.4 636.8 L686.5 630.0Z" fill="#4d4d4d" stroke="#4d4d4d"/><path d="M686.5 630.0 L684.4 636.8 L699.1 645.0 L701.1 638.2Z" fill="#505050" stroke="#505050"/><path d="M701.1 638.2 L699.1 645.0 L713.7 653.3 L715.8 646.4Z" fill="#545454" stroke="#545454"/><path d="M715.8 646.4 L713.7 653.3 L728.3 661.5 L730.5 654.6Z" fill="#575757" stroke="#575757"/><path d="M730.5 654.6 L728.3 661.5 L743.0 669.8 L745.2 662.8Z" fill="#5a5a5a" stroke="#5a5a5a"/><path d="M655.2 620.3 L653.3 627.1 L667.9 635.3 L669.8 628.5Z" fill="#494949" stroke="#494949"/><path d="M669.8 628.5 L667.9 635.3 L682.5 643.6 L684.4 636.8Z" fill="#4c4c4c" stroke="#4c4c4c"/><path d="M684.4 636.8 L682.5 643.6 L697.0 651.9 L699.1 645.0Z" fill="#4e4e4e" stroke="#4e4e4e"/><path d="M699.1 645.0 L697.0 651.9 L711.6 660.2 L713.7 653.3Z" fill="#515151" stroke="#515151"/><path d="M713.7 653.3 L711.6 660.2 L726.2 668.5 L728.3 661.5Z" fill="#555555" stroke="#555555"/><path d="M728.3 661.5 L726.2 668.5 L740.8 676.7 L743.0 669.8Z" fill="#585858" stroke="#585858"/><path d="M653.3 627.1 L651.5 633.8 L666.0 642.2 L667.9 635.3Z" fill="#474747" stroke="#474747"/><path d="M667.9 635.3 L666.0 642.2 L680.6 650.5 L682.5 643.6Z" fill="#4a4a4a" stroke="#4a4a4a"/><path d="M682.5 643.6 L680.6 650.5 L695.1 658.8 L697.0 651.9Z" fill="#4c4c4c" stroke="#4c4c4c"/><path d="M697.0 651.9 L695.1 658.8 L709.6 667.1 L711.6 660.2Z" fill="#4f4f4f" stroke="#4f4f4f"/><path d="M711.6 660.2 L709.6 667.1 L724.1 675.4 L726.2 668.5Z" fill="#525252" stroke="#525252"/><path d="M726.2 668.5 L724.1 675.4 L738.7 683.7 L740.8 676.7Z" fill="#565656" stroke="#565656"/><path d="M651.5 633.8 L649.8 640.6 L664.2 649.0 L666.0 642.2Z" fill="#464646" stroke="#464646"/><path d="M666.0 642.2 L664.2 649.0 L678.7 657.3 L680.6 650.5Z" fill="#484848" stroke="#484848"/><path d="M680.6 650.5 L678.7 657.3 L693.2 665.7 L695.1 658.8Z" fill="#4b4b4b" stroke="#4b4b4b"/><path d="M695.1 658.8 L693.2 665.7 L707.7 674.0 L709.6 667.1Z" fill="#4d4d4d" stroke="#4d4d4d"/><path d="M709.6 667.1 L707.7 674.0 L722.1 682.4 L724.1 675.4Z" fill="#505050" stroke="#505050"/><path d="M724.1 675.4 L722.1 682.4 L736.6 690.7 L738.7 683.7Z" fill="#535353" stroke="#535353"/><path d="M649.8 640.6 L648.1 647.5 L662.5 655.9 L664.2 649.0Z" fill="#454545" stroke="#454545"/><path d="M664.2 649.0 L662.5 655.9 L676.9 664.2 L678.7 657.3Z" fill="#464646" stroke="#464646"/><path d="M678.7 657.3 L676.9 664.2 L691.4 672.6 L693.2 665.7Z" fill="#494949" stroke="#494949"/><path d="M693.2 665.7 L691.4 672.6 L705.8 681.0 L707.7 674.0Z" fill="#4b4b4b" stroke="#4b4b4b"/><path d="M707.7 674.0 L705.8 681.0 L720.2 689.4 L722.1 682.4Z" fill="#4e4e4e" stroke="#4e4e4e"/><path d="M722.1 682.4 L720.2 689.4 L734.6 697.8 L736.6 690.7Z" fill="#515151" stroke="#515151"/><path d="M648.1 647.5 L646.5 654.3 L660.9 662.7 L662.5 655.9Z" fill="#434343" stroke="#434343"/><path d="M662.5 655.9 L660.9 662.7 L675.2 671.1 L676.9 664.2Z" fill="#454545" stroke="#454545"/><path d="M676.9 664.2 L675.2 671.1 L689.6 679.6 L691.4 672.6Z" fill="#474747" stroke="#474747"/><path d="M691.4 672.6 L689.6 679.6 L704.0 688.0 L705.8 681.0Z" fill="#4a4a4a" stroke="#4a4a4a"/><path d="M705.8 681.0 L704.0 688.0 L718.3 696.4 L720.2 689.4Z" fill="#4c4c4c" stroke="#4c4c4c"/><path d="M720.2 689.4 L718.3 696.4 L732.7 704.8 L734.6 697.8Z" fill="#4f4f4f" stroke="#4f4f4f"/><path d="M646.5 654.3 L645.0 661.1 L659.3 669.6 L660.9 662.7Z" fill="#434343" stroke="#434343"/><path d="M660.9 662.7 L659.3 669.6 L673.6 678.1 L675.2 671.1Z" fill="#444444" stroke="#444444"/><path d="M675.2 671.1 L673.6 678.1 L687.9 686.5 L689.6 679.6Z" fill="#464646" stroke="#464646"/><path d="M689.6 679.6 L687.9 686.5 L702.2 695.0 L704.0 688.0Z" fill="#484848" stroke="#484848"/><path d="M704.0 688.0 L702.2 695.0 L716.5 703.4 L718.3 696.4Z" fill="#4a4a4a" stroke="#4a4a4a"/><path d="M718.3 696.4 L716.5 703.4 L730.8 711.9 L732.7 704.8Z" fill="#4d4d4d" stroke="#4d4d4d"/><path d="M645.0 661.1 L643.5 668.0 L657.7 676.5 L659.3 669.6Z" fill="#424242" stroke="#424242"/><path d="M659.3 669.6 L657.7 676.5 L672.0 685.0 L673.6 678.1Z" fill="#434343" stroke="#434343"/><path d="M673.6 678.1 L672.0 685.0 L686.2 693.5 L687.9 686.5Z" fill="#444444" stroke="#444444"/><path d="M687.9 686.5 L686.2 693.5 L700.5 702.0 L702.2 695.0Z" fill="#464646" stroke="#464646"/><path d="M702.2 695.0 L700.5 702.0 L714.7 710.5 L716.5 703.4Z" fill="#494949" stroke="#494949"/><path d="M716.5 703.4 L714.7 710.5 L729.0 718.9 L730.8 711.9Z" fill="#4b4b4b" stroke="#4b4b4b"/><path d="M643.5 668.0 L642.1 674.9 L656.3 683.4 L657.7 676.5Z" fill="#424242" stroke="#424242"/><path d="M657.7 676.5 L656.3 683.4 L670.5 691.9 L672.0 685.0Z" fill="#424242" stroke="#424242"/><path d="M672.0 685.0 L670.5 691.9 L684.7 700.5 L686.2 693.5Z" fill="#434343" stroke="#434343"/><path d="M686.2 693.5 L684.7 700.5 L698.9 709.0 L700.5 702.0Z" fill="#454545" stroke="#454545"/><path d="M700.5 702.0 L698.9 709.0 L713.0 717.5 L714.7 710.5Z" fill="#474747" stroke="#474747"/><path d="M714.7 710.5 L713.0 717.5 L727.2 726.0 L729.0 718.9Z" fill="#494949" stroke="#494949"/><path d="M642.1 674.9 L640.8 681.8 L654.9 690.3 L656.3 683.4Z" fill="#414141" stroke="#414141"/><path d="M656.3 683.4 L654.9 690.3 L669.0 698.9 L670.5 691.9Z" fill="#424242" stroke="#424242"/><path d="M670.5 691.9 L669.0 698.9 L683.2 707.5 L684.7 700.5Z" fill="#434343" stroke="#434343"/><path d="M684.7 700.5 L683.2 707.5 L697.3 716.0 L698.9 709.0Z" fill="#444444" stroke="#444444"/><path d="M698.9 709.0 L697.3 716.0 L711.4 724.6 L713.0 717.5Z" fill="#464646" stroke="#464646"/><path d="M713.0 717.5 L711.4 724.6 L725.5 733.1 L727.2 726.0Z" fill="#474747" stroke="#474747"/><path d="M640.8 681.8 L639.6 688.7 L653.6 697.3 L654.9 690.3Z" fill="#414141" stroke="#414141"/><path d="M654.9 690.3 L653.6 697.3 L667.7 705.9 L669.0 698.9Z" fill="#424242" stroke="#424242"/><path d="M669.0 698.9 L667.7 705.9 L681.7 714.5 L683.2 707.5Z" fill="#424242" stroke="#424242"/><path d="M683.2 707.5 L681.7 714.5 L695.8 723.1 L697.3 716.0Z" fill="#434343" stroke="#434343"/><path d="M697.3 716.0 L695.8 723.1 L709.9 731.7 L711.4 724.6Z" fill="#444444" stroke="#444444"/><path d="M711.4 724.6 L709.9 731.7 L723.9 740.3 L725.5 733.1Z" fill="#464646" stroke="#464646"/><path d="M639.6 688.7 L638.4 695.6 L652.4 704.2 L653.6 697.3Z" fill="#414141" stroke="#414141"/><path d="M653.6 697.3 L652.4 704.2 L666.4 712.9 L667.7 705.9Z" fill="#414141" stroke="#414141"/><path d="M667.7 705.9 L666.4 712.9 L680.4 721.5 L681.7 714.5Z" fill="#424242" stroke="#424242"/><path d="M681.7 714.5 L680.4 721.5 L694.4 730.1 L695.8 723.1Z" fill="#424242" stroke="#424242"/><path d="M695.8 723.1 L694.4 730.1 L708.4 738.8 L709.9 731.7Z" fill="#434343" stroke="#434343"/><path d="M709.9 731.7 L708.4 738.8 L722.4 747.4 L723.9 740.3Z" fill="#454545" stroke="#454545"/><path d="M638.4 695.6 L637.3 702.5 L651.2 711.2 L652.4 704.2Z" fill="#414141" stroke="#414141"/><path d="M652.4 704.2 L651.2 711.2 L665.2 719.9 L666.4 712.9Z" fill="#414141" stroke="#414141"/><path d="M666.4 712.9 L665.2 719.9 L679.1 728.6 L680.4 721.5Z" fill="#414141" stroke="#414141"/><path d="M680.4 721.5 L679.1 728.6 L693.0 737.2 L694.4 730.1Z" fill="#424242" stroke="#424242"/><path d="M694.4 730.1 L693.0 737.2 L707.0 745.9 L708.4 738.8Z" fill="#434343" stroke="#434343"/><path d="M708.4 738.8 L707.0 745.9 L720.9 754.6 L722.4 747.4Z" fill="#434343" stroke="#434343"/><path d="M637.3 702.5 L636.3 709.5 L650.2 718.2 L651.2 711.2Z" fill="#414141" stroke="#414141"/><path d="M651.2 711.2 L650.2 718.2 L664.0 726.9 L665.2 719.9Z" fill="#414141" stroke="#414141"/><path d="M665.2 719.9 L664.0 726.9 L677.9 735.6 L679.1 728.6Z" fill="#414141" stroke="#414141"/><path d="M679.1 728.6 L677.9 735.6 L691.8 744.3 L693.0 737.2Z" fill="#424242" stroke="#424242"/><path d="M693.0 737.2 L691.8 744.3 L705.6 753.0 L707.0 745.9Z" fill="#424242" stroke="#424242"/><path d="M707.0 745.9 L705.6 753.0 L719.5 761.7 L720.9 754.6Z" fill="#434343" stroke="#434343"/><path d="M636.3 709.5 L635.4 716.5 L649.2 725.2 L650.2 718.2Z" fill="#414141" stroke="#414141"/><path d="M650.2 718.2 L649.2 725.2 L663.0 733.9 L664.0 726.9Z" fill="#414141" stroke="#414141"/><path d="M664.0 726.9 L663.0 733.9 L676.8 742.7 L677.9 735.6Z" fill="#414141" stroke="#414141"/><path d="M677.9 735.6 L676.8 742.7 L690.6 751.4 L691.8 744.3Z" fill="#414141" stroke="#414141"/><path d="M691.8 744.3 L690.6 751.4 L704.4 760.2 L705.6 753.0Z" fill="#424242" stroke="#424242"/><path d="M705.6 753.0 L704.4 760.2 L718.2 768.9 L719.5 761.7Z" fill="#424242" stroke="#424242"/><path d="M635.4 716.5 L634.5 723.4 L648.3 732.2 L649.2 725.2Z" fill="#414141" stroke="#414141"/><path d="M649.2 725.2 L648.3 732.2 L662.0 741.0 L663.0 733.9Z" fill="#414141" stroke="#414141"/><path d="M663.0 733.9 L662.0 741.0 L675.7 749.8 L676.8 742.7Z" fill="#414141" stroke="#414141"/><path d="M676.8 742.7 L675.7 749.8 L689.5 758.5 L690.6 751.4Z" fill="#414141" stroke="#414141"/><path d="M690.6 751.4 L689.5 758.5 L703.2 767.3 L704.4 760.2Z" fill="#414141" stroke="#414141"/><path d="M704.4 760.2 L703.2 767.3 L716.9 776.1 L718.2 768.9Z" fill="#424242" stroke="#424242"/><path d="M634.5 723.4 L633.8 730.4 L647.5 739.2 L648.3 732.2Z" fill="#414141" stroke="#414141"/><path d="M648.3 732.2 L647.5 739.2 L661.1 748.0 L662.0 741.0Z" fill="#414141" stroke="#414141"/><path d="M662.0 741.0 L661.1 748.0 L674.8 756.9 L675.7 749.8Z" fill="#414141" stroke="#414141"/><path d="M675.7 749.8 L674.8 756.9 L688.5 765.7 L689.5 758.5Z" fill="#414141" stroke="#414141"/><path d="M689.5 758.5 L688.5 765.7 L702.1 774.5 L703.2 767.3Z" fill="#414141" stroke="#414141"/><path d="M703.2 767.3 L702.1 774.5 L715.8 783.3 L716.9 776.1Z" fill="#414141" stroke="#414141"/><path d="M633.8 730.4 L633.1 737.4 L646.7 746.2 L647.5 739.2Z" fill="#414141" stroke="#414141"/><path d="M647.5 739.2 L646.7 746.2 L660.3 755.1 L661.1 748.0Z" fill="#414141" stroke="#414141"/><path d="M661.1 748.0 L660.3 755.1 L673.9 764.0 L674.8 756.9Z" fill="#414141" stroke="#414141"/><path d="M674.8 756.9 L673.9 764.0 L687.5 772.8 L688.5 765.7Z" fill="#414141" stroke="#414141"/><path d="M688.5 765.7 L687.5 772.8 L701.1 781.7 L702.1 774.5Z" fill="#414141" stroke="#414141"/><path d="M702.1 774.5 L701.1 781.7 L714.7 790.5 L715.8 783.3Z" fill="#414141" stroke="#414141"/><path d="M633.1 737.4 L632.5 744.4 L646.1 753.3 L646.7 746.2Z" fill="#414141" stroke="#414141"/><path d="M646.7 746.2 L646.1 753.3 L659.6 762.2 L660.3 755.1Z" fill="#414141" stroke="#414141"/><path d="M660.3 755.1 L659.6 762.2 L673.1 771.1 L673.9 764.0Z" fill="#414141" stroke="#414141"/><path d="M673.9 764.0 L673.1 771.1 L686.7 780.0 L687.5 772.8Z" fill="#414141" stroke="#414141"/><path d="M687.5 772.8 L686.7 780.0 L700.2 788.9 L701.1 781.7Z" fill="#414141" stroke="#414141"/><path d="M701.1 781.7 L700.2 788.9 L713.7 797.8 L714.7 790.5Z" fill="#414141" stroke="#414141"/><path d="M632.5 744.4 L632.0 751.4 L645.5 760.3 L646.1 753.3Z" fill="#414141" stroke="#414141"/><path d="M646.1 753.3 L645.5 760.3 L659.0 769.3 L659.6 762.2Z" fill="#414141" stroke="#414141"/><path d="M659.6 762.2 L659.0 769.3 L672.4 778.2 L673.1 771.1Z" fill="#414141" stroke="#414141"/><path d="M673.1 771.1 L672.4 778.2 L685.9 787.1 L686.7 780.0Z" fill="#414141" stroke="#414141"/><path d="M686.7 780.0 L685.9 787.1 L699.4 796.1 L700.2 788.9Z" fill="#414141" stroke="#414141"/><path d="M700.2 788.9 L699.4 796.1 L712.8 805.0 L713.7 797.8Z" fill="#414141" stroke="#414141"/><path d="M632.0 751.4 L631.6 758.4 L645.0 767.4 L645.5 760.3Z" fill="#414141" stroke="#414141"/><path d="M645.5 760.3 L645.0 767.4 L658.4 776.4 L659.0 769.3Z" fill="#414141" stroke="#414141"/><path d="M659.0 769.3 L658.4 776.4 L671.8 785.3 L672.4 778.2Z" fill="#414141" stroke="#414141"/><path d="M672.4 778.2 L671.8 785.3 L685.2 794.3 L685.9 787.1Z" fill="#414141" stroke="#414141"/><path d="M685.9 787.1 L685.2 794.3 L698.6 803.3 L699.4 796.1Z" fill="#414141" stroke="#414141"/><path d="M699.4 796.1 L698.6 803.3 L712.0 812.3 L712.8 805.0Z" fill="#414141" stroke="#414141"/><path d="M631.6 758.4 L631.3 765.4 L644.6 774.4 L645.0 767.4Z" fill="#404040" stroke="#404040"/><path d="M645.0 767.4 L644.6 774.4 L658.0 783.4 L658.4 776.4Z" fill="#414141" stroke="#414141"/><path d="M658.4 776.4 L658.0 783.4 L671.3 792.5 L671.8 785.3Z" fill="#414141" stroke="#414141"/><path d="M671.8 785.3 L671.3 792.5 L684.6 801.5 L685.2 794.3Z" fill="#414141" stroke="#414141"/><path d="M685.2 794.3 L684.6 801.5 L698.0 810.5 L698.6 803.3Z" fill="#414141" stroke="#414141"/><path d="M698.6 803.3 L698.0 810.5 L711.3 819.5 L712.0 812.3Z" fill="#414141" stroke="#414141"/><path d="M631.3 765.4 L631.1 772.4 L644.3 781.5 L644.6 774.4Z" fill="#404040" stroke="#404040"/><path d="M644.6 774.4 L644.3 781.5 L657.6 790.5 L658.0 783.4Z" fill="#414141" stroke="#414141"/><path d="M658.0 783.4 L657.6 790.5 L670.9 799.6 L671.3 792.5Z" fill="#414141" stroke="#414141"/><path d="M671.3 792.5 L670.9 799.6 L684.1 808.7 L684.6 801.5Z" fill="#414141" stroke="#414141"/><path d="M684.6 801.5 L684.1 808.7 L697.4 817.8 L698.0 810.5Z" fill="#414141" stroke="#414141"/><path d="M698.0 810.5 L697.4 817.8 L710.7 826.8 L711.3 819.5Z" fill="#414141" stroke="#414141"/><path d="M631.1 772.4 L630.9 779.4 L644.1 788.5 L644.3 781.5Z" fill="#404040" stroke="#404040"/><path d="M644.3 781.5 L644.1 788.5 L657.3 797.7 L657.6 790.5Z" fill="#404040" stroke="#404040"/><path d="M657.6 790.5 L657.3 797.7 L670.5 806.8 L670.9 799.6Z" fill="#414141" stroke="#414141"/><path d="M670.9 799.6 L670.5 806.8 L683.8 815.9 L684.1 808.7Z" fill="#414141" stroke="#414141"/><path d="M684.1 808.7 L683.8 815.9 L697.0 825.0 L697.4 817.8Z" fill="#414141" stroke="#414141"/><path d="M697.4 817.8 L697.0 825.0 L710.2 834.1 L710.7 826.8Z" fill="#414141" stroke="#414141"/><path d="M630.9 779.4 L630.9 786.4 L644.0 795.6 L644.1 788.5Z" fill="#404040" stroke="#404040"/><path d="M644.1 788.5 L644.0 795.6 L657.2 804.8 L657.3 797.7Z" fill="#404040" stroke="#404040"/><path d="M657.3 797.7 L657.2 804.8 L670.3 813.9 L670.5 806.8Z" fill="#404040" stroke="#404040"/><path d="M670.5 806.8 L670.3 813.9 L683.5 823.1 L683.8 815.9Z" fill="#414141" stroke="#414141"/><path d="M683.8 815.9 L683.5 823.1 L696.6 832.2 L697.0 825.0Z" fill="#414141" stroke="#414141"/><path d="M697.0 825.0 L696.6 832.2 L709.8 841.4 L710.2 834.1Z" fill="#414141" stroke="#414141"/><path d="M630.9 786.4 L630.9 793.5 L644.0 802.7 L644.0 795.6Z" fill="#404040" stroke="#404040"/><path d="M644.0 795.6 L644.0 802.7 L657.1 811.9 L657.2 804.8Z" fill="#404040" stroke="#404040"/><path d="M657.2 804.8 L657.1 811.9 L670.2 821.1 L670.3 813.9Z" fill="#404040" stroke="#404040"/><path d="M670.3 813.9 L670.2 821.1 L683.3 830.3 L683.5 823.1Z" fill="#414141" stroke="#414141"/><path d="M683.5 823.1 L683.3 830.3 L696.4 839.5 L696.6 832.2Z" fill="#414141" stroke="#414141"/><path d="M696.6 832.2 L696.4 839.5 L709.4 848.7 L709.8 841.4Z" fill="#414141" stroke="#414141"/><path d="M630.9 793.5 L631.1 800.5 L644.1 809.7 L644.0 802.7Z" fill="#404040" stroke="#404040"/><path d="M644.0 802.7 L644.1 809.7 L657.1 819.0 L657.1 811.9Z" fill="#404040" stroke="#404040"/><path d="M657.1 811.9 L657.1 819.0 L670.1 828.2 L670.2 821.1Z" fill="#404040" stroke="#404040"/><path d="M670.2 821.1 L670.1 828.2 L683.2 837.5 L683.3 830.3Z" fill="#404040" stroke="#404040"/><path d="M683.3 830.3 L683.2 837.5 L696.2 846.7 L696.4 839.5Z" fill="#414141" stroke="#414141"/><path d="M696.4 839.5 L696.2 846.7 L709.2 856.0 L709.4 848.7Z" fill="#414141" stroke="#414141"/><path d="M631.1 800.5 L631.3 807.5 L644.3 816.8 L644.1 809.7Z" fill="#404040" stroke="#404040"/><path d="M644.1 809.7 L644.3 816.8 L657.2 826.1 L657.1 819.0Z" fill="#404040" stroke="#404040"/><path d="M657.1 819.0 L657.2 826.1 L670.2 835.4 L670.1 828.2Z" fill="#404040" stroke="#404040"/><path d="M670.1 828.2 L670.2 835.4 L683.2 844.7 L683.2 837.5Z" fill="#404040" stroke="#404040"/><path d="M683.2 837.5 L683.2 844.7 L696.2 854.0 L696.2 846.7Z" fill="#404040" stroke="#404040"/><path d="M696.2 846.7 L696.2 854.0 L709.1 863.3 L709.2 856.0Z" fill="#414141" stroke="#414141"/><path d="M631.3 807.5 L631.7 814.5 L644.6 823.9 L644.3 816.8Z" fill="#404040" stroke="#404040"/><path d="M644.3 816.8 L644.6 823.9 L657.5 833.2 L657.2 826.1Z" fill="#404040" stroke="#404040"/><path d="M657.2 826.1 L657.5 833.2 L670.4 842.6 L670.2 835.4Z" fill="#404040" stroke="#404040"/><path d="M670.2 835.4 L670.4 842.6 L683.3 851.9 L683.2 844.7Z" fill="#404040" stroke="#404040"/><path d="M683.2 844.7 L683.3 851.9 L696.2 861.3 L696.2 854.0Z" fill="#404040" stroke="#404040"/><path d="M696.2 854.0 L696.2 861.3 L709.1 870.6 L709.1 863.3Z" fill="#404040" stroke="#404040"/><path d="M631.7 814.5 L632.1 821.5 L644.9 830.9 L644.6 823.9Z" fill="#404040" stroke="#404040"/><path d="M644.6 823.9 L644.9 830.9 L657.8 840.3 L657.5 833.2Z" fill="#404040" stroke="#404040"/><path d="M657.5 833.2 L657.8 840.3 L670.7 849.7 L670.4 842.6Z" fill="#404040" stroke="#404040"/><path d="M670.4 842.6 L670.7 849.7 L683.5 859.1 L683.3 851.9Z" fill="#404040" stroke="#404040"/><path d="M683.3 851.9 L683.5 859.1 L696.4 868.5 L696.2 861.3Z" fill="#404040" stroke="#404040"/><path d="M696.2 861.3 L696.4 868.5 L709.3 877.9 L709.1 870.6Z" fill="#404040" stroke="#404040"/><path d="M632.1 821.5 L632.8 828.5 L645.5 837.9 L644.9 830.9Z" fill="#404040" stroke="#404040"/><path d="M644.9 830.9 L645.5 837.9 L658.3 847.4 L657.8 840.3Z" fill="#404040" stroke="#404040"/><path d="M657.8 840.3 L658.3 847.4 L671.1 856.9 L670.7 849.7Z" fill="#404040" stroke="#404040"/><path d="M670.7 849.7 L671.1 856.9 L683.9 866.3 L683.5 859.1Z" fill="#404040" stroke="#404040"/><path d="M683.5 859.1 L683.9 866.3 L696.7 875.8 L696.4 868.5Z" fill="#404040" stroke="#404040"/><path d="M696.4 868.5 L696.7 875.8 L709.5 885.2 L709.3 877.9Z" fill="#404040" stroke="#404040"/><path d="M632.8 828.5 L634.2 835.4 L646.8 844.9 L645.5 837.9Z" fill="#404040" stroke="#404040"/><path d="M645.5 837.9 L646.8 844.9 L659.4 854.4 L658.3 847.4Z" fill="#404040" stroke="#404040"/><path d="M658.3 847.4 L659.4 854.4 L672.0 863.9 L671.1 856.9Z" fill="#404040" stroke="#404040"/><path d="M671.1 856.9 L672.0 863.9 L684.6 873.5 L683.9 866.3Z" fill="#404040" stroke="#404040"/><path d="M683.9 866.3 L684.6 873.5 L697.2 883.0 L696.7 875.8Z" fill="#404040" stroke="#404040"/><path d="M696.7 875.8 L697.2 883.0 L709.8 892.5 L709.5 885.2Z" fill="#404040" stroke="#404040"/></g>
<path d="M1069.2 212.4 C1065.6 213.8 1054.7 217.8 1047.8 221.1 C1040.8 224.3 1034.2 228.1 1027.7 232.1 C1021.2 236.0 1014.9 240.4 1008.8 244.9 C1002.7 249.4 996.7 254.2 990.9 259.1 C985.1 264.0 979.4 269.2 973.8 274.4 C968.2 279.7 962.8 285.1 957.4 290.6 C952.1 296.1 946.9 301.7 941.8 307.4 C936.6 313.1 931.6 318.9 926.7 324.8 C921.7 330.6 916.9 336.6 912.1 342.6 C907.4 348.6 902.7 354.7 898.2 360.8 C893.6 367.0 889.1 373.2 884.7 379.4 C880.3 385.7 876.0 392.0 871.7 398.3 C867.5 404.7 863.3 411.1 859.2 417.5 C855.1 424.0 851.1 430.5 847.2 437.1 C843.3 443.6 839.4 450.2 835.7 456.9 C831.9 463.5 828.2 470.2 824.5 476.9 C820.9 483.6 817.4 490.4 813.9 497.2 C810.4 504.0 807.0 510.9 803.6 517.8 C800.3 524.6 797.0 531.6 793.8 538.5 C790.6 545.5 787.5 552.5 784.4 559.5 C781.4 566.5 778.4 573.6 775.4 580.6 C772.5 587.7 769.7 594.8 766.9 602.0 C764.1 609.1 761.4 616.2 758.8 623.4 C756.1 630.6 753.6 637.8 751.1 645.1 C748.6 652.3 746.2 659.6 743.9 666.8 C741.6 674.1 739.3 681.4 737.2 688.8 C735.1 696.1 733.0 703.5 731.1 710.8 C729.1 718.2 727.3 725.6 725.6 733.1 C723.8 740.5 722.2 748.0 720.7 755.5 C719.2 763.0 717.9 770.5 716.6 778.1 C715.4 785.6 714.3 793.2 713.3 800.8 C712.4 808.4 711.6 816.0 710.9 823.7 C710.3 831.3 709.8 839.0 709.5 846.6 C709.2 854.3 709.1 862.0 709.1 869.6 C709.2 877.3 709.7 888.7 709.8 892.5" fill="none" stroke="url(#grd)" stroke-width="5.5" filter="url(#blur2)" transform="translate(4,1.5)"/>
</g>
<path d="M645.2 834.6 C645.0 830.6 644.3 818.8 644.1 810.8 C643.9 802.8 644.0 794.8 644.2 786.8 C644.4 778.8 644.8 770.8 645.3 762.8 C645.9 754.8 646.6 746.8 647.5 738.9 C648.4 730.9 649.4 723.0 650.6 715.1 C651.8 707.2 653.2 699.3 654.7 691.5 C656.2 683.7 657.8 675.8 659.6 668.1 C661.4 660.3 663.3 652.6 665.3 644.8 C667.3 637.1 669.5 629.5 671.8 621.8 C674.0 614.2 676.4 606.6 678.9 599.0 C681.4 591.4 684.0 583.9 686.7 576.3 C689.4 568.8 692.2 561.4 695.1 553.9 C697.9 546.5 700.9 539.0 704.0 531.7 C707.1 524.3 710.3 516.9 713.5 509.6 C716.8 502.3 720.1 495.1 723.6 487.8 C727.0 480.6 730.6 473.4 734.2 466.3 C737.8 459.2 741.5 452.1 745.3 445.0 C749.1 438.0 753.0 431.0 756.9 424.1 C760.9 417.2 765.0 410.3 769.1 403.5 C773.3 396.7 777.6 389.9 781.9 383.3 C786.3 376.6 790.7 370.0 795.3 363.4 C799.9 356.9 804.5 350.5 809.3 344.1 C814.1 337.7 819.0 331.4 824.0 325.2 C829.1 319.0 834.2 312.9 839.5 306.9 C844.7 300.9 850.1 295.0 855.7 289.3 C861.2 283.5 866.9 277.9 872.7 272.4 C878.5 266.9 884.4 261.5 890.5 256.3 C896.6 251.1 902.9 246.1 909.3 241.2 C915.7 236.4 922.2 231.8 928.9 227.4 C935.6 223.1 942.5 218.9 949.5 215.1 C956.5 211.4 963.7 207.8 971.0 204.7 C978.4 201.7 989.8 198.0 993.5 196.7 L1065.5 207.8 Q1074.8 209.6 1074 217.5 L1069.2 266.5 L1064.9 301.1 L1061.7 326 C1058.9 327.5 1050.4 331.9 1045.1 335.2 C1039.8 338.5 1034.7 342.2 1029.8 345.9 C1024.8 349.6 1020.1 353.6 1015.5 357.7 C1010.8 361.8 1006.3 366.1 1002.0 370.4 C997.6 374.8 993.3 379.3 989.1 383.8 C984.9 388.4 980.8 393.1 976.8 397.8 C972.8 402.6 968.8 407.4 965.0 412.3 C961.1 417.1 957.3 422.1 953.5 427.0 C949.8 432.0 946.1 437.0 942.4 442.1 C938.8 447.2 935.2 452.3 931.7 457.4 C928.2 462.6 924.7 467.8 921.3 473.0 C917.9 478.2 914.6 483.5 911.3 488.7 C908.0 494.0 904.8 499.3 901.6 504.7 C898.5 510.0 895.4 515.4 892.3 520.8 C889.3 526.3 886.3 531.7 883.4 537.2 C880.5 542.7 877.6 548.2 874.9 553.8 C872.1 559.3 869.4 564.9 866.7 570.5 C864.1 576.1 861.5 581.8 859.0 587.5 C856.5 593.2 854.1 598.9 851.7 604.6 C849.4 610.4 847.1 616.2 844.9 622.0 C842.6 627.8 840.5 633.7 838.4 639.5 C836.3 645.4 834.3 651.3 832.4 657.2 C830.5 663.2 828.6 669.1 826.8 675.1 C825.1 681.1 823.4 687.1 821.7 693.1 C820.1 699.1 818.6 705.2 817.1 711.2 C815.7 717.3 814.3 723.3 813.0 729.4 C811.7 735.5 810.5 741.6 809.5 747.7 C808.4 753.9 807.4 760.0 806.6 766.1 C805.7 772.3 805.0 778.4 804.4 784.6 C803.9 790.8 803.4 797.0 803.2 803.2 C802.9 809.5 803.0 818.9 803.0 822.0 Q802.6 826.5 799.7 828.8 L719.1 892.4 Q713.6 896.4 708.5 893 L682 873.8 L649.5 848.3 Q645.6 845 645.2 834.6 Z" fill="none" stroke="#f39a36" stroke-width="2.2" stroke-linejoin="round"/>


<g transform="translate(991,631)" fill="none">
<path d="M1.4 -16.5 L0.4 -5 M-0.4 5 L-1.4 16.5" stroke="#151515" stroke-width="1"/>
<path d="M3.65 1.63 L15.5 6.94 M-3.65 -1.63 L-15.5 -6.94" stroke="#151515" stroke-width="1"/>
<path d="M3.2 -2.4 L11.2 -8.4 M-3.2 2.4 L-11.2 8.4" stroke="#151515" stroke-width="1"/>
<circle r="10.2" stroke="#fff" stroke-width="1.3"/>
<circle r="10.2" stroke="#e8202c" stroke-width="1.3" stroke-dasharray="4.005 4.005"/>
<circle r="2.3" fill="#f7a030"/>
</g>

</svg>
<div class="abs" style="left:0px;top:0px;width:1585px;height:25px;background:rgba(51,51,51,.86);border-radius:0;"></div>
<div class="abs" style="left:0px;top:25px;width:1585px;height:26px;background:rgba(51,51,51,.62);border-radius:0;"></div>
<div class="abs" style="left:9px;top:3px;width:30px;height:18px;background:#282828;border-radius:4px;box-shadow:0 0 0 1px #3e3e3e,0 2px 0 0 rgba(0,0,0,.10);"></div>
<svg style="left:11px;top:4px" width="16" height="16" viewBox="0 0 16 16"><g fill="none" stroke="#e0e0e0" stroke-width="1.1"><path d="M2 8.3 H14 M1.3 11.6 H14.8 M5.8 6.2 L4.3 14.8 M12.4 9.6 L13.8 14.8"/></g><circle cx="12.5" cy="5.2" r="3.5" fill="#e0e0e0"/><circle cx="11.4" cy="4.2" r="1.2" fill="#ffffff"/></svg>
<svg style="left:28.5px;top:9.8px" width="10" height="6" viewBox="0 0 10 6"><path d="M1.8 1.3 L5 4.5 L8.2 1.3" fill="none" stroke="#d0d0d0" stroke-width="1.2" stroke-linejoin="round"/></svg>
<div class="abs" style="left:46px;top:3px;width:108.5px;height:18px;background:#282828;border-radius:4px;box-shadow:0 0 0 1px #3e3e3e,0 2px 0 0 rgba(0,0,0,.10);"></div>
<svg style="left:49.5px;top:4px" width="16" height="16" viewBox="0 0 16 16"><g fill="none" stroke="#e0e0e0" stroke-width="1.1"><path d="M0.9 4.6 V1.8 H3.8 M11.2 1.8 H14.4 V4.6 M14.4 11.4 V14.4 H11.2 M3.8 14.4 H0.9 V11.4"/></g><rect x="3.7" y="4.2" width="8" height="7.8" fill="#e0e0e0"/></svg>
<span class="t" style="left:71.2px;top:7px;font-size:11px;color:#e3e3e3;">Object Mode</span>
<svg style="left:143px;top:9.8px" width="10" height="6" viewBox="0 0 10 6"><path d="M1.8 1.3 L5 4.5 L8.2 1.3" fill="none" stroke="#d0d0d0" stroke-width="1.2" stroke-linejoin="round"/></svg>
<span class="t" style="left:167px;top:7px;font-size:11px;color:#e3e3e3;">View</span>
<span class="t" style="left:207.3px;top:7px;font-size:11px;color:#e3e3e3;">Select</span>
<span class="t" style="left:253px;top:7px;font-size:11px;color:#e3e3e3;">Add</span>
<span class="t" style="left:287.3px;top:7px;font-size:11px;color:#e3e3e3;">Object</span>
<div class="abs" style="left:667px;top:3px;width:78.5px;height:18px;background:#282828;border-radius:4px;box-shadow:0 0 0 1px #3e3e3e,0 2px 0 0 rgba(0,0,0,.10);"></div>
<svg style="left:670px;top:4px" width="16" height="16" viewBox="0 0 16 16"><g fill="none" stroke="#e0e0e0" stroke-width="1.15" stroke-linecap="round" stroke-linejoin="round"><path d="M3.6 11 V2 M1.7 4 L3.6 1.6 L5.5 4"/><path d="M5.2 12.6 H15 M13 10.7 L15.2 12.6 L13 14.5"/><circle cx="3.6" cy="12.6" r="1.4"/></g><path d="M5 11.2 L11.4 5" fill="none" stroke="#a8a8a8" stroke-width="1" stroke-dasharray="1.3 .7"/><path d="M8.6 4.2 H12.4 V8 Z" fill="#a8a8a8"/></svg>
<span class="t" style="left:692.3px;top:7px;font-size:11px;color:#e3e3e3;">Global</span>
<svg style="left:734px;top:9.8px" width="10" height="6" viewBox="0 0 10 6"><path d="M1.8 1.3 L5 4.5 L8.2 1.3" fill="none" stroke="#d0d0d0" stroke-width="1.2" stroke-linejoin="round"/></svg>
<div class="abs" style="left:752px;top:3px;width:30.5px;height:18px;background:#282828;border-radius:4px;box-shadow:0 0 0 1px #3e3e3e,0 2px 0 0 rgba(0,0,0,.10);"></div>
<svg style="left:754.5px;top:4px" width="16" height="16" viewBox="0 0 16 16"><circle cx="11.3" cy="5.5" r="4.1" fill="none" stroke="#e0e0e0" stroke-width="1.25"/><circle cx="11.3" cy="5.5" r="1.4" fill="#e0e0e0"/><circle cx="5.95" cy="10.6" r="5.4" fill="#282828"/><circle cx="5.95" cy="10.6" r="4.35" fill="none" stroke="#e0e0e0" stroke-width="1.3"/><circle cx="5.95" cy="10.6" r="1.65" fill="#e0e0e0"/></svg>
<svg style="left:771.5px;top:9.8px" width="10" height="6" viewBox="0 0 10 6"><path d="M1.8 1.3 L5 4.5 L8.2 1.3" fill="none" stroke="#d0d0d0" stroke-width="1.2" stroke-linejoin="round"/></svg>
<div class="abs" style="left:789px;top:3px;width:18.5px;height:18px;background:#545454;border-radius:4px 0 0 4px;"></div>
<div class="abs" style="left:808px;top:3px;width:31.5px;height:18px;background:#282828;border-radius:0 4px 4px 0;box-shadow:0 0 0 1px #3e3e3e,0 2px 0 0 rgba(0,0,0,.10);"></div>
<svg style="left:790px;top:4px" width="16" height="16" viewBox="0 0 16 16"><g transform="rotate(45 8 8)"><path d="M3.9 14.4 V7.2 A4.1 4.1 0 0 1 12.1 7.2 V14.4" fill="none" stroke="#b4b4b4" stroke-width="3.5"/><path d="M3.9 13.5 V7.2 A4.1 4.1 0 0 1 12.1 7.2 V13.5" fill="none" stroke="#545454" stroke-width="1.5"/></g></svg>
<svg style="left:809.5px;top:4px" width="16" height="16" viewBox="0 0 16 16"><g fill="none" stroke="#e0e0e0" stroke-width="1.15"><path d="M2.2 7.1 V13.8 M13.8 7.1 V13.8 M1.6 10.6 H14.4 M4.9 9.1 V12.2 M8 9.1 V12.2 M11.1 9.1 V12.2"/></g><rect x="11.5" y="1.4" width="4" height="3.6" fill="#e0e0e0"/></svg>
<svg style="left:828px;top:9.8px" width="10" height="6" viewBox="0 0 10 6"><path d="M1.8 1.3 L5 4.5 L8.2 1.3" fill="none" stroke="#d0d0d0" stroke-width="1.2" stroke-linejoin="round"/></svg>
<div class="abs" style="left:846px;top:3px;width:18.5px;height:18px;background:#545454;border-radius:4px 0 0 4px;"></div>
<div class="abs" style="left:865px;top:3px;width:31px;height:18px;background:#2e2e2e;border-radius:0 4px 4px 0;box-shadow:0 0 0 1px #3e3e3e,0 2px 0 0 rgba(0,0,0,.10);"></div>
<svg style="left:847px;top:4px" width="16" height="16" viewBox="0 0 16 16"><circle cx="7.9" cy="8" r="6.2" fill="none" stroke="#8c8c8c" stroke-width="1"/><circle cx="7.9" cy="8" r="2.1" fill="#c2c2c2"/></svg>
<svg style="left:867px;top:4px" width="16" height="16" viewBox="0 0 16 16"><path d="M1.8 13.8 C6 13.8 6.4 2.3 9 2.3 C11.6 2.3 12 13.8 16.2 13.8" fill="none" stroke="#b4b4b4" stroke-width="1.1"/></svg>
<svg style="left:884.5px;top:9.8px" width="10" height="6" viewBox="0 0 10 6"><path d="M1.8 1.3 L5 4.5 L8.2 1.3" fill="none" stroke="#5a5a5a" stroke-width="1.2" stroke-linejoin="round"/></svg>
<div class="abs" style="left:1329px;top:3px;width:30.5px;height:18px;background:#282828;border-radius:4px;box-shadow:0 0 0 1px #3e3e3e,0 2px 0 0 rgba(0,0,0,.10);"></div>
<svg style="left:1331px;top:4px" width="16" height="16" viewBox="0 0 16 16"><path d="M3 4.5 Q8.6 -3 14.2 4.5 Q8.6 11.2 3 4.5 Z" fill="#e6e6e6"/><circle cx="8.55" cy="4.5" r="2.9" fill="#282828"/><circle cx="8.55" cy="4.5" r="1.5" fill="#e6e6e6"/><path d="M-0.5 7.8 L8.4 10.6 L5.1 11.6 L3.6 15.2 Z" fill="#e6e6e6"/></svg>
<svg style="left:1348.5px;top:9.8px" width="10" height="6" viewBox="0 0 10 6"><path d="M1.8 1.3 L5 4.5 L8.2 1.3" fill="none" stroke="#d0d0d0" stroke-width="1.2" stroke-linejoin="round"/></svg>
<div class="abs" style="left:1366px;top:3px;width:18.5px;height:18px;background:#4772b3;border-radius:4px 0 0 4px;"></div>
<div class="abs" style="left:1385px;top:3px;width:19.5px;height:18px;background:#282828;border-radius:0 4px 4px 0;box-shadow:0 0 0 1px #3e3e3e,0 2px 0 0 rgba(0,0,0,.10);"></div>
<svg style="left:1367px;top:4px" width="16" height="16" viewBox="0 0 16 16"><g fill="none" stroke="#f0f0f0" stroke-width="1.15"><circle cx="3" cy="13" r="1.75"/><path d="M4.3 11.7 L14.2 1.9 M10.4 1.5 H14.6 V5.7"/><path d="M1.2 3.5 A11.5 11.5 0 0 1 12.7 15"/></g></svg>
<svg style="left:1389.5px;top:9.8px" width="10" height="6" viewBox="0 0 10 6"><path d="M1.8 1.3 L5 4.5 L8.2 1.3" fill="none" stroke="#d0d0d0" stroke-width="1.2" stroke-linejoin="round"/></svg>
<div class="abs" style="left:1411px;top:3px;width:18.5px;height:18px;background:#4772b3;border-radius:4px 0 0 4px;"></div>
<div class="abs" style="left:1430px;top:3px;width:19px;height:18px;background:#282828;border-radius:0 4px 4px 0;box-shadow:0 0 0 1px #3e3e3e,0 2px 0 0 rgba(0,0,0,.10);"></div>
<svg style="left:1412px;top:4px" width="16" height="16" viewBox="0 0 16 16"><circle cx="6" cy="9.9" r="4.9" fill="none" stroke="#f2f2f2" stroke-width="1.2"/><circle cx="10" cy="5.9" r="4.8" fill="#f2f2f2"/><path d="M6.43 5.02 A4.9 4.9 0 0 1 10.88 9.47" fill="none" stroke="#4772b3" stroke-width="1.2" stroke-dasharray="1.7 1.3"/></svg>
<svg style="left:1434.5px;top:9.8px" width="10" height="6" viewBox="0 0 10 6"><path d="M1.8 1.3 L5 4.5 L8.2 1.3" fill="none" stroke="#d0d0d0" stroke-width="1.2" stroke-linejoin="round"/></svg>
<div class="abs" style="left:1456px;top:3px;width:18px;height:18px;background:#4b4b4b;border-radius:4px;"></div>
<svg style="left:1457px;top:4px" width="16" height="16" viewBox="0 0 16 16"><g fill="none" stroke="#6e6e6e" stroke-width="1.1"><path d="M5 4.4 V1.2 H14.8 V10.6 H11.6"/><rect x="1.1" y="4.8" width="10.2" height="10.2"/><path d="M4.6 7.4 V9.4 M5 12 H9" stroke-dasharray="1.4 1.2"/></g></svg>
<div class="abs" style="left:1481px;top:3px;width:18.2px;height:18px;background:#545454;border-radius:4px 0 0 4px;"></div>
<div class="abs" style="left:1500px;top:3px;width:18.2px;height:18px;background:#545454;border-radius:0;"></div>
<div class="abs" style="left:1519px;top:3px;width:18.2px;height:18px;background:#545454;border-radius:0;"></div>
<div class="abs" style="left:1538px;top:3px;width:18px;height:18px;background:#4772b3;border-radius:0;"></div>
<div class="abs" style="left:1556.5px;top:3px;width:19.5px;height:18px;background:#282828;border-radius:0 4px 4px 0;box-shadow:0 0 0 1px #3e3e3e,0 2px 0 0 rgba(0,0,0,.10);"></div>
<svg style="left:1482px;top:4px" width="16" height="16" viewBox="0 0 16 16"><g fill="none" stroke="#dcdcdc" stroke-width="1.05"><circle cx="8" cy="7.9" r="6.5"/><path d="M7.3 1.6 V14.2 M1.8 6 H14.2 M1.8 10.8 H14.2"/></g></svg>
<svg style="left:1501px;top:4px" width="16" height="16" viewBox="0 0 16 16"><circle cx="8" cy="7.9" r="7" fill="#c6c6c6"/></svg>
<svg style="left:1520px;top:4px" width="16" height="16" viewBox="0 0 16 16"><circle cx="8" cy="7.9" r="6.5" fill="none" stroke="#d6d6d6" stroke-width="1.05"/><path d="M8 7.9 V1.9 A6 6 0 0 0 2 7.9 Q4.4 10.6 8 10.2 Z" fill="#c6c6c6"/><path d="M8 7.9 L12.6 12.5 M10.4 8.6 L13.4 11.6 M8.6 10.6 L11.4 13.4" stroke="#d6d6d6" stroke-width=".9" fill="none"/></svg>
<svg style="left:1539px;top:4px" width="16" height="16" viewBox="0 0 16 16"><circle cx="8" cy="7.9" r="6.5" fill="none" stroke="#f6f6f6" stroke-width="1.4"/><path d="M3.8 7.4 A4.6 4.6 0 0 1 7.6 3.5" fill="none" stroke="#f6f6f6" stroke-width="1.6" stroke-linecap="round"/><path d="M12.7 8.6 A4.8 4.8 0 0 1 8.8 12.6" fill="none" stroke="#f6f6f6" stroke-width="2" stroke-dasharray=".9 .9"/></svg>
<svg style="left:1561.5px;top:9.8px" width="10" height="6" viewBox="0 0 10 6"><path d="M1.8 1.3 L5 4.5 L8.2 1.3" fill="none" stroke="#d0d0d0" stroke-width="1.2" stroke-linejoin="round"/></svg>
<div class="abs" style="left:1516px;top:30px;width:60.5px;height:17.5px;background:#282828;border-radius:4px;"></div>
<span class="t" style="left:1523.4px;top:33.8px;font-size:11px;color:#e3e3e3;">Options</span>
<svg style="left:1566.3px;top:36.5px" width="10" height="6" viewBox="0 0 10 6"><path d="M1.8 1.3 L5 4.5 L8.2 1.3" fill="none" stroke="#d0d0d0" stroke-width="1.2" stroke-linejoin="round"/></svg>
<div class="abs" style="left:44.3px;top:30px;width:18.2px;height:18px;background:#4772b3;border-radius:4px 0 0 4px;"></div>
<svg style="left:45.3px;top:31px" width="16" height="16" viewBox="0 0 16 16"><rect x="1.3" y="1.7" width="13.4" height="13" fill="none" stroke="#ffffff" stroke-width="1.4" stroke-dasharray="2.7 1.7" stroke-dashoffset="1.2"/></svg>
<div class="abs" style="left:63.1px;top:30px;width:18.2px;height:18px;background:#545454;border-radius:0;"></div>
<svg style="left:64.1px;top:31px" width="16" height="16" viewBox="0 0 16 16"><path d="M5 1.2 H15 V11.2 H10.6 V14.9 H1 V4.9 H5 Z" fill="#c4c4c4"/></svg>
<div class="abs" style="left:81.9px;top:30px;width:18.2px;height:18px;background:#545454;border-radius:0;"></div>
<svg style="left:82.9px;top:31px" width="16" height="16" viewBox="0 0 16 16"><path d="M5.6 1.2 H15 V10.8 H10.6 V5.4 H5.6 Z" fill="#c4c4c4"/><path d="M1.5 5.8 H10.2 V14.5 H1.5 Z" fill="none" stroke="#c4c4c4" stroke-width="1" stroke-dasharray="2 1.4"/></svg>
<div class="abs" style="left:100.7px;top:30px;width:18.2px;height:18px;background:#545454;border-radius:0;"></div>
<svg style="left:101.7px;top:31px" width="16" height="16" viewBox="0 0 16 16"><path d="M5 1.2 H15 V10.8 H10.6 V14.9 H1 V4.9 H5 Z M5.2 5 V10.6 H10.6 V5 Z" fill="#c4c4c4" fill-rule="evenodd"/></svg>
<div class="abs" style="left:119.5px;top:30px;width:18.2px;height:18px;background:#545454;border-radius:0 4px 4px 0;"></div>
<svg style="left:120.5px;top:31px" width="16" height="16" viewBox="0 0 16 16"><rect x="1.4" y="1.7" width="13.2" height="13" fill="none" stroke="#c4c4c4" stroke-width="1.1" stroke-dasharray="2.2 1.6"/><rect x="4.9" y="5" width="6.3" height="6.3" fill="#c4c4c4"/></svg>
<span class="t" style="left:66.2px;top:62px;font-size:11px;color:#f0f0f0;letter-spacing:.1px;text-shadow:0 0 2px rgba(0,0,0,.9),0 1px 1px rgba(0,0,0,.6);">User Perspective</span>
<span class="t" style="left:66.2px;top:79.6px;font-size:11px;color:#f0f0f0;letter-spacing:.1px;text-shadow:0 0 2px rgba(0,0,0,.9),0 1px 1px rgba(0,0,0,.6);">(1) Collection | Cylinder</span>
<div class="abs" style="left:8px;top:60px;width:40px;height:33.5px;background:#4772b3;border-radius:4px 4px 0 0;"></div>
<svg style="left:11px;top:60.95px" width="32" height="32" viewBox="-16 -16 32 32"><rect x="-11" y="-11" width="22" height="22" fill="none" stroke="#f7a928" stroke-width="1.3" stroke-dasharray="3.6 2.2" stroke-dashoffset="1.8"/><path d="M-3.4 -5.2 L4.8 1.6 L0.6 2.2 L-1.8 6 Z" fill="#ececec"/></svg>
<svg style="left:42px;top:87px" width="4" height="4" viewBox="0 0 4 4"><path d="M4 0 V4 H0 Z" fill="#8ea6d0"/></svg>
<div class="abs" style="left:8px;top:94px;width:40px;height:34px;background:#272727;border-radius:0 0 4px 4px;"></div>
<div class="abs" style="left:8px;top:93.5px;width:40px;height:0.8px;background:#333333;border-radius:0;"></div>
<svg style="left:11px;top:95.2px" width="32" height="32" viewBox="-16 -16 32 32"><circle r="11.3" fill="none" stroke="#f2f2f2" stroke-width="1.5"/><circle r="11.3" fill="none" stroke="#b5404a" stroke-width="1.5" stroke-dasharray="4.4375 4.4375" transform="rotate(-11.25)"/><path d="M0 -8.5 V-3 M0 3 V8.5 M-8.5 0 H-3 M3 0 H8.5" stroke="#9a9a9a" stroke-width="1.5" fill="none"/></svg>
<div class="abs" style="left:8px;top:135px;width:40px;height:33.5px;background:#272727;border-radius:4px 4px 0 0;"></div>
<svg style="left:11px;top:135.95px" width="32" height="32" viewBox="-16 -16 32 32"><g transform="rotate(0)"><path d="M0 -11.6 L3.2 -7.2 H-3.2 Z" fill="#e6e6e6"/><path d="M0 -6.4 V-3.4" stroke="#e6e6e6" stroke-width="1.6"/></g><g transform="rotate(90)"><path d="M0 -11.6 L3.2 -7.2 H-3.2 Z" fill="#e6e6e6"/><path d="M0 -6.4 V-3.4" stroke="#e6e6e6" stroke-width="1.6"/></g><g transform="rotate(180)"><path d="M0 -11.6 L3.2 -7.2 H-3.2 Z" fill="#e6e6e6"/><path d="M0 -6.4 V-3.4" stroke="#e6e6e6" stroke-width="1.6"/></g><g transform="rotate(270)"><path d="M0 -11.6 L3.2 -7.2 H-3.2 Z" fill="#e6e6e6"/><path d="M0 -6.4 V-3.4" stroke="#e6e6e6" stroke-width="1.6"/></g></svg>
<div class="abs" style="left:8px;top:169px;width:40px;height:34.5px;background:#272727;border-radius:0 0 0 0;"></div>
<div class="abs" style="left:8px;top:168.5px;width:40px;height:0.8px;background:#333333;border-radius:0;"></div>
<svg style="left:11px;top:170.45px" width="32" height="32" viewBox="-16 -16 32 32"><path d="M-7.2 -5.2 A9 9 0 0 1 7.2 -5.2" fill="none" stroke="#e6e6e6" stroke-width="1.3"/><path d="M7.2 5.2 A9 9 0 0 1 -7.2 5.2" fill="none" stroke="#e6e6e6" stroke-width="1.3"/><path d="M5.4 -0.2 L11.4 -0.2 L8.6 -4.6 Z" fill="#e6e6e6"/><path d="M-5.4 -1.6 L-11.4 -1.6 L-8.6 2.8 Z" fill="#e6e6e6"/><path d="M0 -3.4 L3.4 0 L0 3.4 L-3.4 0 Z" fill="#b0b0b0"/></svg>
<div class="abs" style="left:8px;top:204px;width:40px;height:34px;background:#272727;border-radius:0 0 0 0;"></div>
<div class="abs" style="left:8px;top:203.5px;width:40px;height:0.8px;background:#333333;border-radius:0;"></div>
<svg style="left:11px;top:205.2px" width="32" height="32" viewBox="-16 -16 32 32"><rect x="-8" y="-8.4" width="16" height="16" fill="none" stroke="#c8c8c8" stroke-width="1.1"/><rect x="-9.4" y="-0.6" width="9.4" height="9.4" fill="#e6e6e6" stroke="#262626" stroke-width="1"/><path d="M1 -1.6 L5.4 -5.8" stroke="#e6e6e6" stroke-width="1.2"/><path d="M6.6 -7 L6.2 -3.4 L3 -6.6 Z" fill="#e6e6e6"/></svg>
<svg style="left:42px;top:231.5px" width="4" height="4" viewBox="0 0 4 4"><path d="M4 0 V4 H0 Z" fill="#7a7a7a"/></svg>
<div class="abs" style="left:8px;top:238.5px;width:40px;height:34px;background:#272727;border-radius:0 0 4px 4px;"></div>
<div class="abs" style="left:8px;top:238px;width:40px;height:0.8px;background:#333333;border-radius:0;"></div>
<svg style="left:11px;top:239.7px" width="32" height="32" viewBox="-16 -16 32 32"><circle r="10.2" fill="none" stroke="#e6e6e6" stroke-width="1.2" stroke-dasharray="9.6 6.42" stroke-dashoffset="-3.2"/><path d="M0 -10.8 L2.6 -6.6 H-2.6 Z" fill="#e6e6e6" transform="rotate(0)"/><path d="M0 -10.8 L2.6 -6.6 H-2.6 Z" fill="#e6e6e6" transform="rotate(90)"/><path d="M0 -10.8 L2.6 -6.6 H-2.6 Z" fill="#e6e6e6" transform="rotate(180)"/><path d="M0 -10.8 L2.6 -6.6 H-2.6 Z" fill="#e6e6e6" transform="rotate(270)"/><rect x="-4.2" y="-4.2" width="8.4" height="8.4" fill="#e6e6e6"/></svg>
<div class="abs" style="left:8px;top:280px;width:40px;height:33px;background:#272727;border-radius:4px 4px 0 0;"></div>
<svg style="left:11px;top:280.7px" width="32" height="32" viewBox="-16 -16 32 32"><path d="M-11 7.4 C-6 12 -2 3 3 2.2 C7 1.6 9.4 4.4 12 7" fill="none" stroke="#8bd5ac" stroke-width="1.3"/><g transform="translate(-0.6,-5.6) rotate(-42)"><path d="M-14.8 0 L-10.6 -2.5 H5.2 Q6.6 -2.5 6.6 -1.2 V1.2 Q6.6 2.5 5.2 2.5 H-10.6 Z" fill="#e6e6e6"/><path d="M3.2 -3 V3" stroke="#272727" stroke-width="1"/><path d="M-11.4 -2.6 V2.6" stroke="#272727" stroke-width=".8"/></g></svg>
<svg style="left:42px;top:306.5px" width="4" height="4" viewBox="0 0 4 4"><path d="M4 0 V4 H0 Z" fill="#7a7a7a"/></svg>
<div class="abs" style="left:8px;top:313.5px;width:40px;height:34px;background:#272727;border-radius:0 0 4px 4px;"></div>
<div class="abs" style="left:8px;top:313px;width:40px;height:0.8px;background:#333333;border-radius:0;"></div>
<svg style="left:11px;top:315.7px" width="32" height="32" viewBox="-16 -16 32 32"><path d="M-3.4 10 V-1.6 A11.6 11.6 0 0 1 8.2 10 Z" fill="#8bd5ac"/><path d="M-3.4 -4 A14 14 0 0 1 10.6 10" fill="none" stroke="#8bd5ac" stroke-width="1.1"/><path d="M-9.4 -12.4 H-3.4 V9 H12 V12.6 H-9.4 Z" fill="#e6e6e6"/><path d="M-6.4 -9.4 H-3.4" stroke="#262626" stroke-width="1"/><path d="M-6.4 -6.1 H-3.4" stroke="#262626" stroke-width="1"/><path d="M-6.4 -2.8 H-3.4" stroke="#262626" stroke-width="1"/><path d="M-6.4 0.5 H-3.4" stroke="#262626" stroke-width="1"/><path d="M-6.4 3.8 H-3.4" stroke="#262626" stroke-width="1"/><path d="M-6.4 7.1 H-3.4" stroke="#262626" stroke-width="1"/><path d="M-2.4 9 V11" stroke="#262626" stroke-width="1"/><path d="M0.2 9 V11" stroke="#262626" stroke-width="1"/><path d="M2.8 9 V11" stroke="#262626" stroke-width="1"/><path d="M5.4 9 V11" stroke="#262626" stroke-width="1"/><path d="M8 9 V11" stroke="#262626" stroke-width="1"/><path d="M10.6 9 V11" stroke="#262626" stroke-width="1"/></svg>
<div class="abs" style="left:8px;top:355px;width:40px;height:33px;background:#272727;border-radius:4px 4px 4px 4px;"></div>
<svg style="left:11px;top:355.7px" width="32" height="32" viewBox="-16 -16 32 32"><g fill="none" stroke="#8bd5ac" stroke-width="1.1" stroke-linejoin="round"><rect x="-7.4" y="-2.6" width="13.4" height="12.6"/><path d="M-7.4 -2.6 L-1.4 -8 H11.4 L6 -2.6 M11.4 -8 V4.8 L6 10"/></g><path d="M-9.4 -12.4 V-4.8 M-13.2 -8.6 H-5.6" stroke="#8bd5ac" stroke-width="1.9" fill="none"/></svg>
<svg style="left:42px;top:381.5px" width="4" height="4" viewBox="0 0 4 4"><path d="M4 0 V4 H0 Z" fill="#7a7a7a"/></svg>
<svg style="left:1489px;top:55px" width="120" height="100" viewBox="1490 105 120 100"><circle cx="1511.3" cy="140.6" r="7" fill="rgba(139,50,68,.55)" stroke="#93384a" stroke-width="1.4"/><circle cx="1535.3" cy="179" r="7" fill="rgba(47,93,153,.55)" stroke="#2f69b0" stroke-width="1.4"/><line x1="1535" y1="150.5" x2="1556.5" y2="140" stroke="#6f9d1d" stroke-width="2"/><line x1="1535" y1="150.5" x2="1534.8" y2="122.5" stroke="#2f83e3" stroke-width="2"/><line x1="1535" y1="150.5" x2="1558.5" y2="160.6" stroke="#f0364f" stroke-width="2"/><circle cx="1513.2" cy="162" r="7.6" fill="rgba(98,128,36,.6)" stroke="#80b81c" stroke-width="1.5"/><circle cx="1556.6" cy="139.8" r="7.8" fill="#6d991b"/><circle cx="1534.8" cy="122.4" r="8" fill="#2d84e4"/><circle cx="1558.5" cy="160.8" r="8.2" fill="#f0364f"/><text x="1534.8" y="126" text-anchor="middle" style="font-family:'DejaVu Sans','Liberation Sans',sans-serif;font-size:10px;font-weight:normal;font-stretch:normal;fill:#0a0a0a;stroke:#0a0a0a;stroke-width:.25px">Z</text><text x="1556.6" y="143.4" text-anchor="middle" style="font-family:'DejaVu Sans','Liberation Sans',sans-serif;font-size:10px;font-weight:normal;font-stretch:normal;fill:#0a0a0a;stroke:#0a0a0a;stroke-width:.25px">Y</text><text x="1558.5" y="164.4" text-anchor="middle" style="font-family:'DejaVu Sans','Liberation Sans',sans-serif;font-size:10px;font-weight:normal;font-stretch:normal;fill:#0a0a0a;stroke:#0a0a0a;stroke-width:.25px">X</text></svg>
<div class="abs" style="left:1548.4px;top:142px;width:27.2px;height:27.2px;background:rgba(0,0,0,.22);border-radius:50%;"></div>
<svg style="left:1550px;top:143.6px" width="24" height="24" viewBox="-12 -12 24 24"><g transform="scale(1)"><circle cx="2" cy="-2.4" r="5.6" fill="#e4e4e4"/><path d="M-2.2 2.2 L-8 8" stroke="#e4e4e4" stroke-width="2.2" stroke-linecap="round"/><path d="M2 -5.6 V0.8 M-1.2 -2.4 H5.2" stroke="#333" stroke-width="1.2"/></g></svg>
<div class="abs" style="left:1548.4px;top:172px;width:27.2px;height:27.2px;background:rgba(0,0,0,.22);border-radius:50%;"></div>
<svg style="left:1550px;top:173.6px" width="24" height="24" viewBox="-12 -12 24 24"><g transform="scale(0.95)"><path d="M-5.8 1.4 L-8 -2.2 Q-8.6 -3.6 -7.2 -3.8 Q-6.2 -3.8 -5.4 -2.6 L-4.2 -0.6 L-4.6 -7 Q-4.6 -8.4 -3.4 -8.4 Q-2.4 -8.4 -2.2 -7 L-1.6 -2.4 L-1.2 -8.6 Q-1 -9.8 0.2 -9.8 Q1.4 -9.8 1.4 -8.4 L1.2 -2.4 L2.4 -7.6 Q2.8 -8.8 3.8 -8.6 Q4.9 -8.3 4.8 -7 L3.8 -1.6 L5.8 -4.6 Q6.6 -5.6 7.6 -5 Q8.4 -4.4 7.8 -3.2 L5 3.4 Q3.6 7.4 0.2 7.6 Q-3.2 7.6 -5.8 1.4 Z" fill="#e4e4e4"/></g></svg>
<div class="abs" style="left:1548.4px;top:202.2px;width:27.2px;height:27.2px;background:rgba(0,0,0,.22);border-radius:50%;"></div>
<svg style="left:1550px;top:203.8px" width="24" height="24" viewBox="-12 -12 24 24"><g transform="scale(0.9)"><circle cx="-4.2" cy="-4.4" r="3.3" fill="#e4e4e4"/><circle cx="2.8" cy="-5" r="4.1" fill="#e4e4e4"/><circle cx="-4.2" cy="-4.4" r="1" fill="#333"/><circle cx="2.8" cy="-5" r="1.3" fill="#333"/><rect x="-6.4" y="-0.6" width="11" height="7.6" rx="1" fill="#e4e4e4"/><path d="M5.4 3.2 L9.4 0.4 V7 Z" fill="#e4e4e4"/><path d="M-6.4 4.6 L-9 6.4 V3.2 Z" fill="#e4e4e4"/></g></svg>
<div class="abs" style="left:1548.4px;top:232.4px;width:27.2px;height:27.2px;background:rgba(0,0,0,.22);border-radius:50%;"></div>
<svg style="left:1550px;top:234px" width="24" height="24" viewBox="-12 -12 24 24"><g transform="scale(0.86)"><path d="M-4.6 -7.4 H4.6 L8.6 7.4 H-8.6 Z" fill="none" stroke="#e4e4e4" stroke-width="1.4" stroke-linejoin="round"/><path d="M-1.6 -7.4 L-3 7.4 M1.6 -7.4 L3 7.4 M-5.8 -2.8 H5.8 M-7.2 2.2 H7.2" stroke="#e4e4e4" stroke-width="1.3" fill="none"/></g></svg>
<div class="abs" style="left:1576px;top:66.5px;width:9px;height:12.5px;background:rgba(48,48,48,.9);border-radius:4px 0 0 4px;"></div>
<svg style="left:1577.3px;top:68.3px" width="6" height="9" viewBox="0 0 6 9"><path d="M4.6 1 L1.2 4.5 L4.6 8" fill="none" stroke="#a8a8a8" stroke-width="1.1"/></svg>
<div class="abs" style="left:62.3px;top:807.3px;width:279.4px;height:82.6px;background:rgba(24,24,24,.96);border-radius:4px;"></div>
<svg style="left:69.3px;top:816.6px" width="10" height="7" viewBox="0 0 10 7"><path d="M0.6 1.2 L5 5.6 L9.4 1.2" fill="none" stroke="#a0a0a0" stroke-width="1"/></svg>
<span class="t" style="left:84.3px;top:815px;font-size:11px;color:#bcbcbc;letter-spacing:-.05px;">Shade Smooth</span>
<div class="abs" style="left:180.8px;top:843.8px;width:12.4px;height:12.4px;background:#4772b3;border-radius:2.5px;box-shadow:0 0 0 .6px #3b5f96;"></div>
<svg style="left:181px;top:844px" width="12" height="12" viewBox="0 0 12 12"><path d="M2.6 6.2 L5 8.8 L9.6 2.8" fill="none" stroke="#ffffff" stroke-width="1.7" stroke-linecap="round" stroke-linejoin="round"/></svg>
<span class="t" style="left:197.3px;top:845px;font-size:11px;color:#ececec;letter-spacing:-.05px;">Auto Smooth</span>
<span class="t" style="left:111.6px;top:867px;width:60px;text-align:right;letter-spacing:-.05px;color:#bcbcbc">Angle</span>
<div class="abs" style="left:180.6px;top:862.3px;width:153.2px;height:19.2px;background:#545454;border-radius:4px;"></div>
<span class="t" style="left:180.8px;top:867px;width:152.6px;text-align:center;color:#ececec">33.8°</span>
</div>
<div id="timeline">
<div class="abs" style="left:0px;top:0px;width:1585px;height:25px;background:#303030;border-radius:0;"></div>
<div class="abs" style="left:0px;top:47.5px;width:1585px;height:23px;background:#232323;border-radius:0;"></div>
<div class="abs" style="left:51.6px;top:47.5px;width:1474.1px;height:23px;background:#303030;border-radius:0;"></div>
<i class="tk" style="left:22.1px"></i>
<i class="tk mj" style="left:51.6px"></i>
<i class="tk" style="left:81.1px"></i>
<i class="tk mj" style="left:110.6px"></i>
<i class="tk" style="left:140.0px"></i>
<i class="tk mj" style="left:169.5px"></i>
<i class="tk" style="left:199.0px"></i>
<i class="tk mj" style="left:228.5px"></i>
<i class="tk" style="left:258.0px"></i>
<i class="tk mj" style="left:287.5px"></i>
<i class="tk" style="left:316.9px"></i>
<i class="tk mj" style="left:346.4px"></i>
<i class="tk" style="left:375.9px"></i>
<i class="tk mj" style="left:405.4px"></i>
<i class="tk" style="left:434.9px"></i>
<i class="tk mj" style="left:464.3px"></i>
<i class="tk" style="left:493.8px"></i>
<i class="tk mj" style="left:523.3px"></i>
<i class="tk" style="left:552.8px"></i>
<i class="tk mj" style="left:582.3px"></i>
<i class="tk" style="left:611.8px"></i>
<i class="tk mj" style="left:641.2px"></i>
<i class="tk" style="left:670.7px"></i>
<i class="tk mj" style="left:700.2px"></i>
<i class="tk" style="left:729.7px"></i>
<i class="tk mj" style="left:759.2px"></i>
<i class="tk" style="left:788.6px"></i>
<i class="tk mj" style="left:818.1px"></i>
<i class="tk" style="left:847.6px"></i>
<i class="tk mj" style="left:877.1px"></i>
<i class="tk" style="left:906.6px"></i>
<i class="tk mj" style="left:936.1px"></i>
<i class="tk" style="left:965.5px"></i>
<i class="tk mj" style="left:995.0px"></i>
<i class="tk" style="left:1024.5px"></i>
<i class="tk mj" style="left:1054.0px"></i>
<i class="tk" style="left:1083.5px"></i>
<i class="tk mj" style="left:1113.0px"></i>
<i class="tk" style="left:1142.4px"></i>
<i class="tk mj" style="left:1171.9px"></i>
<i class="tk" style="left:1201.4px"></i>
<i class="tk mj" style="left:1230.9px"></i>
<i class="tk" style="left:1260.4px"></i>
<i class="tk mj" style="left:1289.8px"></i>
<i class="tk" style="left:1319.3px"></i>
<i class="tk mj" style="left:1348.8px"></i>
<i class="tk" style="left:1378.3px"></i>
<i class="tk mj" style="left:1407.8px"></i>
<i class="tk" style="left:1437.3px"></i>
<i class="tk mj" style="left:1466.7px"></i>
<i class="tk" style="left:1496.2px"></i>
<i class="tk mj" style="left:1525.7px"></i>
<i class="tk" style="left:1555.2px"></i>
<span class="tn" style="left:90.1px">10</span>
<span class="tn" style="left:149.0px">20</span>
<span class="tn" style="left:208.0px">30</span>
<span class="tn" style="left:267.0px">40</span>
<span class="tn" style="left:325.9px">50</span>
<span class="tn" style="left:384.9px">60</span>
<span class="tn" style="left:443.8px">70</span>
<span class="tn" style="left:502.8px">80</span>
<span class="tn" style="left:561.8px">90</span>
<span class="tn" style="left:620.7px">100</span>
<span class="tn" style="left:679.7px">110</span>
<span class="tn" style="left:738.7px">120</span>
<span class="tn" style="left:797.6px">130</span>
<span class="tn" style="left:856.6px">140</span>
<span class="tn" style="left:915.6px">150</span>
<span class="tn" style="left:974.5px">160</span>
<span class="tn" style="left:1033.5px">170</span>
<span class="tn" style="left:1092.5px">180</span>
<span class="tn" style="left:1151.4px">190</span>
<span class="tn" style="left:1210.4px">200</span>
<span class="tn" style="left:1269.3px">210</span>
<span class="tn" style="left:1328.3px">220</span>
<span class="tn" style="left:1387.3px">230</span>
<span class="tn" style="left:1446.2px">240</span>
<span class="tn" style="left:1505.2px">250</span>
<div class="abs" style="left:1525.4px;top:47.5px;width:1.6px;height:14.3px;background:#0c0c0c;border-radius:0;"></div>
<div class="abs" style="left:8.5px;top:61.8px;width:1566.8px;height:9px;background:#585858;border-radius:4px;"></div>
<svg style="left:8px;top:61.8px" width="8" height="8" viewBox="0 0 8 8"><circle cx="4" cy="4" r="3" fill="#2c2c2c"/></svg>
<svg style="left:1567.2px;top:61.8px" width="8" height="8" viewBox="0 0 8 8"><circle cx="4" cy="4" r="3" fill="#2c2c2c"/></svg>
<div class="abs" style="left:8px;top:4.1px;width:30px;height:18px;background:#282828;border-radius:4px;box-shadow:0 0 0 1px #3e3e3e;"></div>
<svg style="left:11px;top:5.1px" width="16" height="16" viewBox="0 0 16 16"><circle cx="8" cy="8.1" r="7.1" fill="#ebebeb"/><path d="M12 2.8 L7.4 8.8 L10.9 12.8" fill="none" stroke="#282828" stroke-width="2.3" stroke-linejoin="miter"/></svg>
<svg style="left:27.5px;top:10.9px" width="10" height="6" viewBox="0 0 10 6"><path d="M1.8 1.3 L5 4.5 L8.2 1.3" fill="none" stroke="#d0d0d0" stroke-width="1.2" stroke-linejoin="round"/></svg>
<div class="abs" style="left:45px;top:4.1px;width:68.4px;height:18px;background:#282828;border-radius:4px 0 0 4px;box-shadow:0 0 0 1px #3e3e3e;"></div>
<div class="abs" style="left:114.4px;top:4.1px;width:58px;height:18px;background:#282828;border-radius:0 4px 4px 0;box-shadow:0 0 0 1px #3e3e3e;"></div>
<span class="t" style="left:52.3px;top:8.3px;font-size:11px;color:#e3e3e3;">Playback</span>
<svg style="left:102px;top:10.9px" width="10" height="6" viewBox="0 0 10 6"><path d="M1.8 1.3 L5 4.5 L8.2 1.3" fill="none" stroke="#d0d0d0" stroke-width="1.2" stroke-linejoin="round"/></svg>
<span class="t" style="left:121.3px;top:8.3px;font-size:11px;color:#e3e3e3;">Keying</span>
<svg style="left:161px;top:10.9px" width="10" height="6" viewBox="0 0 10 6"><path d="M1.8 1.3 L5 4.5 L8.2 1.3" fill="none" stroke="#d0d0d0" stroke-width="1.2" stroke-linejoin="round"/></svg>
<span class="t" style="left:181.7px;top:8.3px;font-size:11px;color:#e3e3e3;">View</span>
<span class="t" style="left:222.3px;top:8.3px;font-size:11px;color:#e3e3e3;">Marker</span>
<div class="abs" style="left:700px;top:4.1px;width:18.6px;height:18px;background:#545454;border-radius:4px 0 0 4px;"></div>
<div class="abs" style="left:719.4px;top:4.1px;width:18.4px;height:18px;background:#2b2b2b;border-radius:0 4px 4px 0;box-shadow:0 0 0 1px #3e3e3e;"></div>
<svg style="left:704.2px;top:8.2px" width="10" height="10" viewBox="0 0 10 10"><circle cx="5" cy="5" r="4" fill="#ececec"/></svg>
<svg style="left:723.4px;top:10.9px" width="10" height="6" viewBox="0 0 10 6"><path d="M1.8 1.3 L5 4.5 L8.2 1.3" fill="none" stroke="#5c5c5c" stroke-width="1.2" stroke-linejoin="round"/></svg>
<div class="abs" style="left:745px;top:4.1px;width:18.5px;height:18px;background:#545454;border-radius:4px 0 0 4px;"></div>
<svg style="left:746.6px;top:5.1px" width="16" height="16" viewBox="0 0 16 16"><path d="M3 3 V13" stroke="#f0f0f0" stroke-width="1.6"/><path d="M12.6 3 V13 L5.2 8 Z" fill="#f0f0f0"/></svg>
<div class="abs" style="left:764.5px;top:4.1px;width:19px;height:18px;background:#545454;border-radius:0;"></div>
<svg style="left:766.1px;top:5.1px" width="16" height="16" viewBox="0 0 16 16"><path d="M5 3.4 L9.2 8 L5 12.6 L0.8 8 Z" fill="#f0f0f0"/><path d="M15 3.6 V12.4 L9.6 8 Z" fill="#f0f0f0"/></svg>
<div class="abs" style="left:784.5px;top:4.1px;width:19px;height:18px;background:#545454;border-radius:0;"></div>
<svg style="left:786.1px;top:5.1px" width="16" height="16" viewBox="0 0 16 16"><path d="M12.6 2.4 V13.6 L3.4 8 Z" fill="#f0f0f0"/></svg>
<div class="abs" style="left:804.5px;top:4.1px;width:19px;height:18px;background:#545454;border-radius:0;"></div>
<svg style="left:806.1px;top:5.1px" width="16" height="16" viewBox="0 0 16 16"><path d="M4 2 V14 L13.6 8 Z" fill="#f0f0f0"/></svg>
<div class="abs" style="left:824.5px;top:4.1px;width:19px;height:18px;background:#545454;border-radius:0;"></div>
<svg style="left:826.1px;top:5.1px" width="16" height="16" viewBox="0 0 16 16"><path d="M11 3.4 L15.2 8 L11 12.6 L6.8 8 Z" fill="#f0f0f0"/><path d="M1 3.6 V12.4 L6.4 8 Z" fill="#f0f0f0"/></svg>
<div class="abs" style="left:844.5px;top:4.1px;width:18.7px;height:18px;background:#545454;border-radius:0 4px 4px 0;"></div>
<svg style="left:846.1px;top:5.1px" width="16" height="16" viewBox="0 0 16 16"><path d="M13 3 V13" stroke="#f0f0f0" stroke-width="1.6"/><path d="M3.4 3 V13 L10.8 8 Z" fill="#f0f0f0"/></svg>
<div class="abs" style="left:1306.7px;top:4.1px;width:73.4px;height:18px;background:#545454;border-radius:4px;"></div>
<span class="t" style="left:1306.7px;top:8.3px;width:73.4px;text-align:center;color:#ececec">1</span>
<div class="abs" style="left:1386.7px;top:4.1px;width:18.4px;height:18px;background:#545454;border-radius:4px 0 0 4px;"></div>
<svg style="left:1388px;top:5.1px" width="16" height="16" viewBox="0 0 16 16"><g fill="none" stroke="#ececec" stroke-width="1.2"><circle cx="8" cy="9.2" r="5.4"/><path d="M8 6 V9.4 H10.6"/><path d="M6 2 H10 M8 2 V3.8 M12.6 4.4 L13.8 3.2"/></g></svg>
<div class="abs" style="left:1406px;top:4.1px;width:87px;height:18px;background:#545454;border-radius:0;"></div>
<div class="abs" style="left:1494px;top:4.1px;width:83.4px;height:18px;background:#545454;border-radius:0 4px 4px 0;"></div>
<span class="t" style="left:1421.3px;top:8.3px;font-size:11px;color:#ececec;">Start</span>
<span class="t" style="left:1440px;top:8.3px;width:40px;text-align:right;color:#ececec">1</span>
<span class="t" style="left:1509px;top:8.3px;font-size:11px;color:#ececec;">End</span>
<span class="t" style="left:1524px;top:8.3px;width:40px;text-align:right;color:#ececec">250</span>
<div class="abs" style="left:56.8px;top:43px;width:2.4px;height:28px;background:#4772b3;border-radius:0;"></div>
<div class="abs" style="left:45.6px;top:28px;width:24.2px;height:17px;background:#4772b3;border-radius:4px;"></div>
<span class="t" style="left:45.7px;top:31.6px;width:24px;text-align:center;color:#ffffff">1</span>
<svg style="left:-0.8px;top:42.2px" width="6" height="9" viewBox="0 0 6 9"><path d="M1.2 1 L4.6 4.5 L1.2 8" fill="none" stroke="#a0a0a0" stroke-width="1.1"/></svg>
<div class="abs" style="left:1579.4px;top:35px;width:2.4px;height:27px;background:#2c2c2c;border-radius:1px;"></div>
<svg style="left:1577.4px;top:42px" width="6" height="9" viewBox="0 0 6 9"><path d="M4.6 1 L1.2 4.5 L4.6 8" fill="none" stroke="#8a8a8a" stroke-width="1.1"/></svg>
</div>
<div id="outliner">
<div class="abs" style="left:0px;top:46px;width:332px;height:20px;background:#2b2b2b;border-radius:0;"></div>
<div class="abs" style="left:0px;top:86px;width:332px;height:20px;background:#2b2b2b;border-radius:0;"></div>
<div class="abs" style="left:0px;top:126px;width:332px;height:20px;background:#2b2b2b;border-radius:0;"></div>
<div class="abs" style="left:0px;top:166px;width:332px;height:20px;background:#2b2b2b;border-radius:0;"></div>
<div class="abs" style="left:0px;top:206px;width:332px;height:20px;background:#2b2b2b;border-radius:0;"></div>
<div class="abs" style="left:0px;top:246px;width:332px;height:20px;background:#2b2b2b;border-radius:0;"></div>
<div class="abs" style="left:0px;top:286px;width:332px;height:20px;background:#2b2b2b;border-radius:0;"></div>
<div class="abs" style="left:0px;top:86px;width:332px;height:20px;background:#334c7f;border-radius:0;"></div>
<div class="abs" style="left:9px;top:3px;width:30.4px;height:18px;background:#282828;border-radius:4px;box-shadow:0 0 0 1px #3e3e3e;"></div>
<svg style="left:12px;top:4.3px" width="16" height="16" viewBox="0 0 16 16"><rect x="1" y="1.6" width="5.4" height="2.8" fill="#e0e0e0"/><path d="M3 4.4 V13.4 H7.6 M3 8.6 H7.6" fill="none" stroke="#e0e0e0" stroke-width="1"/><rect x="8" y="7" width="7" height="3" fill="#e0e0e0"/><rect x="8" y="11.8" width="7" height="3" fill="#e0e0e0"/></svg>
<svg style="left:28.5px;top:9.8px" width="10" height="6" viewBox="0 0 10 6"><path d="M1.8 1.3 L5 4.5 L8.2 1.3" fill="none" stroke="#d0d0d0" stroke-width="1.2" stroke-linejoin="round"/></svg>
<div class="abs" style="left:46px;top:3px;width:30.4px;height:18px;background:#282828;border-radius:4px;box-shadow:0 0 0 1px #3e3e3e;"></div>
<svg style="left:48.8px;top:4px" width="16" height="16" viewBox="0 0 16 16"><path d="M1.5 5.5 V14.5 H10.5" fill="none" stroke="#e0e0e0" stroke-width="1"/><path d="M3.5 3.5 V12.5 H12.5" fill="none" stroke="#e0e0e0" stroke-width="1"/><rect x="5.5" y="1.5" width="9" height="9" fill="none" stroke="#e0e0e0" stroke-width="1"/><path d="M6 10 L9 4.5 L11 8 L12 7 L14 10 Z" fill="#e0e0e0"/><circle cx="12.3" cy="3.8" r="1" fill="#e0e0e0"/></svg>
<svg style="left:65.5px;top:9.8px" width="10" height="6" viewBox="0 0 10 6"><path d="M1.8 1.3 L5 4.5 L8.2 1.3" fill="none" stroke="#d0d0d0" stroke-width="1.2" stroke-linejoin="round"/></svg>
<div class="abs" style="left:100.2px;top:3px;width:108.2px;height:18px;background:#1d1d1d;border-radius:4px;box-shadow:0 0 0 1px #3e3e3e;"></div>
<svg style="left:103px;top:4px" width="16" height="16" viewBox="0 0 16 16"><circle cx="9.6" cy="6.4" r="4.2" fill="none" stroke="#e0e0e0" stroke-width="1.2"/><path d="M6.6 9.4 L1.8 14.2" stroke="#e0e0e0" stroke-width="1.3" stroke-linecap="round"/></svg>
<div class="abs" style="left:267.6px;top:3px;width:30.6px;height:18px;background:#282828;border-radius:4px;box-shadow:0 0 0 1px #3e3e3e;"></div>
<svg style="left:268.8px;top:4px" width="16" height="16" viewBox="0 0 16 16"><path d="M1.2 2 H14.8 L9.6 8.4 V12.4 L6.6 14.8 V8.4 Z" fill="none" stroke="#e0e0e0" stroke-width="1.15" stroke-linejoin="round"/></svg>
<svg style="left:287px;top:9.8px" width="10" height="6" viewBox="0 0 10 6"><path d="M1.8 1.3 L5 4.5 L8.2 1.3" fill="none" stroke="#d0d0d0" stroke-width="1.2" stroke-linejoin="round"/></svg>
<div class="abs" style="left:304.2px;top:2.3px;width:19.6px;height:19.4px;background:#545454;border-radius:4.5px;"></div>
<svg style="left:305.8px;top:4px" width="16" height="16" viewBox="0 0 16 16"><g fill="none" stroke="#d0d0d0" stroke-width="1.05"><path d="M8.2 3.6 H1.6 V6.4 H12.4"/><path d="M2.6 6.6 V14.4 H11.4 V8.4"/><path d="M5.6 9.6 H8.4"/></g><circle cx="11.8" cy="4.3" r="3.6" fill="#f2f2f2"/><path d="M11.8 1.9 V6.7 M9.4 4.3 H14.2" stroke="#3a3a3a" stroke-width="1.3"/></svg>
<div class="abs" style="left:29.2px;top:71.5px;width:1px;height:49.5px;background:#4d4d4d;border-radius:0;"></div>
<svg style="left:22.2px;top:27.9px" width="16" height="16" viewBox="0 0 16 16"><rect x="1.2" y="1.8" width="13.6" height="3.2" fill="#e0e0e0"/><path d="M2.2 6.2 H13.8 V14.4 H2.2 Z M5.8 8 V9.6 H10.2 V8 Z" fill="#e0e0e0" fill-rule="evenodd"/></svg>
<span class="t" style="left:44.2px;top:32.2px;font-size:11px;color:#dcdcdc;letter-spacing:.1px;">Scene Collection</span>
<svg style="left:25.6px;top:52.6px" width="8" height="8" viewBox="0 0 8 8"><path d="M0.8 1.6 H7.2 L4 7 Z" fill="#c2c2c2"/></svg>
<div class="abs" style="left:40.4px;top:47.4px;width:19px;height:17.4px;background:#3f3f3f;border-radius:4px;box-shadow:inset 0 0 0 1px #6b6b6b;"></div>
<svg style="left:41.9px;top:48.2px" width="16" height="16" viewBox="0 0 16 16"><rect x="1.2" y="1.8" width="13.6" height="3.2" fill="#e0e0e0"/><path d="M2.2 6.2 H13.8 V14.4 H2.2 Z M5.8 8 V9.6 H10.2 V8 Z" fill="#e0e0e0" fill-rule="evenodd"/></svg>
<span class="t" style="left:64.3px;top:52.1px;font-size:11px;color:#dcdcdc;letter-spacing:.1px;">Collection</span>
<svg style="left:45.6px;top:72.5px" width="8" height="8" viewBox="0 0 8 8"><path d="M1.6 0.8 V7.2 L7 4 Z" fill="#c2c2c2"/></svg>
<svg style="left:62px;top:68.4px" width="16" height="16" viewBox="0 0 16 16"><circle cx="4.4" cy="4.6" r="3.2" fill="#d68c52"/><circle cx="10.8" cy="4" r="4" fill="#d68c52"/><circle cx="4.4" cy="4.6" r="1" fill="#282828"/><circle cx="10.8" cy="4" r="1.3" fill="#282828"/><rect x="2.2" y="8.2" width="10.4" height="6.6" rx="1" fill="#d68c52"/><path d="M13 11.6 L15.8 9.4 V14.6 Z" fill="#d68c52"/><path d="M2.2 12.6 L0.2 14 V11 Z" fill="#d68c52"/></svg>
<span class="t" style="left:84px;top:72.1px;font-size:11px;color:#dcdcdc;letter-spacing:.1px;">Camera</span>
<div class="abs" style="left:143.2px;top:67.4px;width:19.8px;height:17.4px;background:#4a4a4a;border-radius:4px;box-shadow:inset 0 0 0 1px #666;"></div>
<svg style="left:145.2px;top:68.2px" width="16" height="16" viewBox="0 0 16 16"><g fill="none" stroke="#1fc79b" stroke-width="1.1"><path d="M4.2 7.4 A3 3 0 1 1 7 3.4 A3.6 3.6 0 1 1 12.4 7.4"/><circle cx="10.6" cy="4.4" r="0.8"/><rect x="4" y="8.4" width="7.8" height="5.4" rx=".8"/><path d="M12 11 L14.8 9 V13.4 L12 11.4 M4 11 L1.4 9.6 M1.4 9.4 V12.4"/></g></svg>
<svg style="left:45.6px;top:92.5px" width="8" height="8" viewBox="0 0 8 8"><path d="M1.6 0.8 V7.2 L7 4 Z" fill="#c2c2c2"/></svg>
<div class="abs" style="left:60.4px;top:87.4px;width:19.6px;height:17.4px;background:#5b6f96;border-radius:4px;box-shadow:inset 0 0 0 1px #8595b5;"></div>
<svg style="left:62.2px;top:88.2px" width="16" height="16" viewBox="0 0 16 16"><path d="M1 1.8 H15 L8 15.2 Z M5.9 4.9 H10.1 L8 9 Z" fill="#d68c52" fill-rule="evenodd"/></svg>
<span class="t" style="left:84px;top:92.1px;font-size:11px;color:#f8ab32;letter-spacing:.1px;">Cylinder</span>
<svg style="left:147.2px;top:88.2px" width="16" height="16" viewBox="0 0 16 16"><g fill="none" stroke="#1fc79b" stroke-width="1.1"><path d="M3.4 3 H12.6 M3.2 4.4 L7.2 12 M12.8 4.4 L8.8 12"/><rect x="0.8" y="1.2" width="3" height="3"/><rect x="12.2" y="1.2" width="3" height="3"/><rect x="6.5" y="12" width="3" height="3"/></g></svg>
<svg style="left:45.6px;top:112.5px" width="8" height="8" viewBox="0 0 8 8"><path d="M1.6 0.8 V7.2 L7 4 Z" fill="#c2c2c2"/></svg>
<svg style="left:62px;top:108.2px" width="16" height="16" viewBox="0 0 16 16"><path d="M8 0.8 A5.8 5.8 0 0 1 11.4 11 V11.6 H4.6 V11 A5.8 5.8 0 0 1 8 0.8 Z" fill="#d68c52"/><path d="M5.6 6.6 H10.4 M6.4 6.6 V9.6 M9.6 6.6 V9.6" stroke="#282828" stroke-width="1.1" fill="none"/><path d="M4.8 12.8 H11.2 M5.6 14.2 H10.4 M7 15.6 H9" stroke="#d68c52" stroke-width="1" fill="none"/></svg>
<span class="t" style="left:84px;top:112.1px;font-size:11px;color:#dcdcdc;letter-spacing:.1px;">Light</span>
<svg style="left:130.6px;top:108.2px" width="16" height="16" viewBox="0 0 16 16"><g fill="none" stroke="#1fc79b" stroke-width="1.1"><path d="M6.4 13.4 A6.2 6.2 0 1 1 9.6 13.4"/><circle cx="8" cy="7.6" r="1"/><path d="M8 8.8 V11.6 M8 13.4 V15.8" stroke-dasharray="2.4 1.6"/></g></svg>
<svg style="left:264px;top:48.4px" width="16" height="16" viewBox="0 0 16 16"><rect x="2.8" y="2.8" width="10.4" height="10.4" rx="1" fill="#e6e6e6"/><path d="M5 8 L7.2 10.4 L11.4 4.8" fill="none" stroke="#222" stroke-width="1.5"/></svg>
<svg style="left:283.8px;top:48px" width="16" height="16" viewBox="0 0 16 16"><path d="M1.2 8 Q8 0.6 14.8 8 Q8 15.4 1.2 8 Z" fill="#e6e6e6"/><circle cx="8" cy="7.6" r="3.1" fill="#282828"/><circle cx="8" cy="7.6" r="1.5" fill="#e6e6e6"/></svg>
<svg style="left:303.6px;top:48px" width="16" height="16" viewBox="0 0 16 16"><path d="M1.2 4.4 H4.6 L5.6 2.6 H10.4 L11.4 4.4 H14.8 V13.8 H1.2 Z" fill="#e6e6e6"/><circle cx="8" cy="9" r="3.4" fill="none" stroke="#282828" stroke-width="1.1"/><circle cx="8" cy="9" r="1.6" fill="#282828"/></svg>
<svg style="left:283.8px;top:68px" width="16" height="16" viewBox="0 0 16 16"><path d="M1.2 8 Q8 0.6 14.8 8 Q8 15.4 1.2 8 Z" fill="#e6e6e6"/><circle cx="8" cy="7.6" r="3.1" fill="#282828"/><circle cx="8" cy="7.6" r="1.5" fill="#e6e6e6"/></svg>
<svg style="left:303.6px;top:68px" width="16" height="16" viewBox="0 0 16 16"><path d="M1.2 4.4 H4.6 L5.6 2.6 H10.4 L11.4 4.4 H14.8 V13.8 H1.2 Z" fill="#e6e6e6"/><circle cx="8" cy="9" r="3.4" fill="none" stroke="#282828" stroke-width="1.1"/><circle cx="8" cy="9" r="1.6" fill="#282828"/></svg>
<svg style="left:283.8px;top:88px" width="16" height="16" viewBox="0 0 16 16"><path d="M1.2 8 Q8 0.6 14.8 8 Q8 15.4 1.2 8 Z" fill="#e6e6e6"/><circle cx="8" cy="7.6" r="3.1" fill="#282828"/><circle cx="8" cy="7.6" r="1.5" fill="#e6e6e6"/></svg>
<svg style="left:303.6px;top:88px" width="16" height="16" viewBox="0 0 16 16"><path d="M1.2 4.4 H4.6 L5.6 2.6 H10.4 L11.4 4.4 H14.8 V13.8 H1.2 Z" fill="#e6e6e6"/><circle cx="8" cy="9" r="3.4" fill="none" stroke="#282828" stroke-width="1.1"/><circle cx="8" cy="9" r="1.6" fill="#282828"/></svg>
<svg style="left:283.8px;top:108px" width="16" height="16" viewBox="0 0 16 16"><path d="M1.2 8 Q8 0.6 14.8 8 Q8 15.4 1.2 8 Z" fill="#e6e6e6"/><circle cx="8" cy="7.6" r="3.1" fill="#282828"/><circle cx="8" cy="7.6" r="1.5" fill="#e6e6e6"/></svg>
<svg style="left:303.6px;top:108px" width="16" height="16" viewBox="0 0 16 16"><path d="M1.2 4.4 H4.6 L5.6 2.6 H10.4 L11.4 4.4 H14.8 V13.8 H1.2 Z" fill="#e6e6e6"/><circle cx="8" cy="9" r="3.4" fill="none" stroke="#282828" stroke-width="1.1"/><circle cx="8" cy="9" r="1.6" fill="#282828"/></svg>
</div>
<div id="props">
<div class="abs" style="left:0px;top:24.8px;width:28px;height:640px;background:#1d1d1d;border-radius:0;"></div>
<div class="abs" style="left:2.4px;top:34.4px;width:25.6px;height:25.2px;background:#303030;border-radius:4px 0 0 4px;"></div>
<div class="abs" style="left:9px;top:2.7px;width:30.4px;height:18px;background:#282828;border-radius:4px;box-shadow:0 0 0 1px #3e3e3e;"></div>
<svg style="left:11px;top:3.7px" width="16" height="16" viewBox="0 0 16 16"><rect x="1.5" y="1.5" width="14.4" height="6" rx="3" fill="#e8e8e8"/><rect x="7.8" y="2.5" width="7.2" height="4" rx="2" fill="#282828"/><rect x="1.5" y="9.7" width="14.4" height="6" rx="3" fill="#e8e8e8"/><rect x="10.6" y="10.7" width="4.4" height="4" rx="2" fill="#282828"/></svg>
<svg style="left:28.5px;top:9.5px" width="10" height="6" viewBox="0 0 10 6"><path d="M1.8 1.3 L5 4.5 L8.2 1.3" fill="none" stroke="#d0d0d0" stroke-width="1.2" stroke-linejoin="round"/></svg>
<div class="abs" style="left:112px;top:2.7px;width:109.4px;height:18px;background:#1d1d1d;border-radius:4px;box-shadow:0 0 0 1px #3e3e3e;"></div>
<svg style="left:114.6px;top:3.7px" width="16" height="16" viewBox="0 0 16 16"><circle cx="9.6" cy="6.4" r="4.2" fill="none" stroke="#e0e0e0" stroke-width="1.2"/><path d="M6.6 9.4 L1.8 14.2" stroke="#e0e0e0" stroke-width="1.3" stroke-linecap="round"/></svg>
<div class="abs" style="left:304.8px;top:2.7px;width:18.8px;height:18px;background:#282828;border-radius:4px;box-shadow:0 0 0 1px #3e3e3e;"></div>
<svg style="left:309.2px;top:9.5px" width="10" height="6" viewBox="0 0 10 6"><path d="M1.8 1.3 L5 4.5 L8.2 1.3" fill="none" stroke="#d0d0d0" stroke-width="1.2" stroke-linejoin="round"/></svg>
<svg style="left:7px;top:37.8px" width="16" height="16" viewBox="0 0 16 16"><path d="M3.6 1.6 V8.2" stroke="#e6e6e6" stroke-width="1.5"/><path d="M1.8 9 H5.4 V12.6 Q5.4 14.6 3.6 14.6 Q1.8 14.6 1.8 12.6 Z" fill="#e6e6e6"/><path d="M8.2 1.4 V4.6 Q8.2 6.4 9.8 7 V14.6 H12.4 V7 Q14 6.4 14 4.6 V1.4 H12.4 V4.6 H9.8 V1.4 Z" fill="#e6e6e6"/></svg>
<svg style="left:7px;top:74.5px" width="16" height="16" viewBox="0 0 16 16"><path d="M1.2 5.2 H14.8 V14 H1.2 Z M3.2 7.2 V12 H9.4 V7.2 Z" fill="#c0c0c0" fill-rule="evenodd"/><path d="M3 2.6 H7.4 V4.4 H3 Z M9.6 3.4 H13.4 V4.6 H9.6 Z" fill="#c0c0c0"/><path d="M11 8 H13.2 M11 10 H13.2" stroke="#1d1d1d" stroke-width="1"/></svg>
<svg style="left:7px;top:103px" width="16" height="16" viewBox="0 0 16 16"><path d="M1.2 2 H14.8 V7 H13 V5.4 H3 V7 H1.2 Z" fill="#c0c0c0"/><path d="M3.8 6.8 H12.2 V14.6 H3.8 Z" fill="none" stroke="#c0c0c0" stroke-width="1.1"/><path d="M4.8 13.6 L7.4 9.4 L9.2 12 L10.2 11 L11.4 13.6 Z" fill="#c0c0c0"/></svg>
<svg style="left:7px;top:130.6px" width="16" height="16" viewBox="0 0 16 16"><path d="M1.5 5.5 V14.5 H10.5" fill="none" stroke="#c0c0c0" stroke-width="1"/><path d="M3.5 3.5 V12.5 H12.5" fill="none" stroke="#c0c0c0" stroke-width="1"/><rect x="5.5" y="1.5" width="9" height="9" fill="none" stroke="#c0c0c0" stroke-width="1"/><path d="M6 10 L9 4.5 L11 8 L12 7 L14 10 Z" fill="#c0c0c0"/><circle cx="12.3" cy="3.8" r="1" fill="#c0c0c0"/></svg>
<svg style="left:7px;top:159px" width="16" height="16" viewBox="0 0 16 16"><path d="M4.4 1.4 L7.8 9.6 Q6.2 13 3.2 12.4 Q0.6 11.6 1.4 8.6 Z" fill="#c0c0c0"/><circle cx="10.6" cy="11" r="3.3" fill="none" stroke="#c0c0c0" stroke-width="1.1"/><path d="M10.6 11 L13.2 8.6" stroke="#c0c0c0" stroke-width="1"/><circle cx="12" cy="3.8" r="1.9" fill="#c0c0c0"/></svg>
<svg style="left:7px;top:187.3px" width="16" height="16" viewBox="0 0 16 16"><circle cx="8" cy="8.2" r="5.6" fill="none" stroke="#c4525f" stroke-width="1.25"/><path d="M4.6 4.8 Q6.8 4.4 8.2 5.6 Q8 7.4 6.2 8 Q5 9.2 4.6 11 Q2.8 8 4.6 4.8 Z M9 9.2 Q10.8 8.8 12.2 10 Q11.4 12.4 9.4 13 Q8.4 11 9 9.2 Z M9.6 3.4 Q11.4 3.8 12.4 5.6 Q10.8 6 9.8 4.8 Z" fill="#c4525f"/><path d="M0.8 13.6 L15.2 2.8" stroke="#c4525f" stroke-width="1"/></svg>
<svg style="left:7px;top:223.7px" width="16" height="16" viewBox="0 0 16 16"><path d="M1.6 2.2 H14.4 V5 H1.6 Z" fill="none" stroke="#c0c0c0" stroke-width="1.1"/><path d="M2.6 5.4 V14 H13.4 V5.4" fill="none" stroke="#c0c0c0" stroke-width="1.1"/><path d="M6 8.6 H10" stroke="#c0c0c0" stroke-width="1.3"/></svg>
<svg style="left:7px;top:258.5px" width="16" height="16" viewBox="0 0 16 16"><rect x="4.2" y="4.2" width="7.6" height="7.6" fill="#d68c52"/><path d="M1.4 4.4 V1.4 H4.4 M11.6 1.4 H14.6 V4.4 M14.6 11.6 V14.6 H11.6 M4.4 14.6 H1.4 V11.6" fill="none" stroke="#d68c52" stroke-width="1"/></svg>
<svg style="left:7px;top:286.4px" width="16" height="16" viewBox="0 0 16 16"><path d="M13.8 2.2 L11 5 L12.4 6.4 L14.8 4 Q15.6 7 13.4 8.6 Q11.8 9.6 10 9 L5 14.2 Q3.6 15.4 2.4 14.2 Q1.4 13 2.6 11.8 L7.8 6.8 Q7.2 4.8 8.4 3.2 Q10.4 1 13.8 2.2 Z" fill="#6f9fe8"/></svg>
<svg style="left:7px;top:315px" width="16" height="16" viewBox="0 0 16 16"><circle cx="3.4" cy="3.6" r="2.2" fill="#6f9fe8"/><circle cx="13" cy="3.4" r="1.4" fill="#6f9fe8"/><circle cx="4" cy="13" r="1.4" fill="#6f9fe8"/><circle cx="12.6" cy="12.6" r="1.6" fill="#6f9fe8"/><path d="M4 4 L13 3.4 M4 4 L4 13 M4 4 L12.4 12.4" stroke="#6f9fe8" stroke-width="1"/></svg>
<svg style="left:7px;top:343px" width="16" height="16" viewBox="0 0 16 16"><circle cx="8" cy="8.6" r="5.8" fill="none" stroke="#6f9fe8" stroke-width="1.2" stroke-dasharray="30 6.4" transform="rotate(-60 8 8.6)"/><circle cx="8.2" cy="8.6" r="2.4" fill="#6f9fe8"/><circle cx="13.4" cy="3.4" r="1.5" fill="#6f9fe8"/></svg>
<svg style="left:7px;top:371.3px" width="16" height="16" viewBox="0 0 16 16"><g transform="rotate(-38 8 8)"><path d="M5 3.4 Q10 2.4 14.2 6.2 Q15.4 8 14.2 9.8 Q10 13.6 5 12.6 Q0.6 11.4 0.6 8 Q0.6 4.6 5 3.4 Z" fill="none" stroke="#6f9fe8" stroke-width="1.2"/><circle cx="5.2" cy="8" r="2.6" fill="none" stroke="#6f9fe8" stroke-width="1.2"/><circle cx="5.2" cy="8" r="0.9" fill="#6f9fe8"/><circle cx="11.4" cy="8" r="1.3" fill="none" stroke="#6f9fe8" stroke-width="1"/></g></svg>
<svg style="left:7px;top:398.8px" width="16" height="16" viewBox="0 0 16 16"><g fill="none" stroke="#1fc79b" stroke-width="1.1"><path d="M3.4 3 H12.6 M3.2 4.4 L7.2 12 M12.8 4.4 L8.8 12"/><rect x="0.8" y="1.2" width="3" height="3"/><rect x="12.2" y="1.2" width="3" height="3"/><rect x="6.5" y="12" width="3" height="3"/></g></svg>
<svg style="left:7px;top:427px" width="16" height="16" viewBox="0 0 16 16"><circle cx="8" cy="8" r="6.6" fill="#c4525f"/><path d="M8 8 V1.4 A6.6 6.6 0 0 1 14.6 8 Z" fill="#1d1d1d" opacity=".0"/><path d="M8 8 H14.6 A6.6 6.6 0 0 1 8 14.6 Z" fill="#1d1d1d"/><path d="M8 8 V1.4 A6.6 6.6 0 0 1 14.6 8 Z" fill="#d7737f"/><circle cx="8" cy="8" r="6.1" fill="none" stroke="#c4525f" stroke-width="1"/></svg>
<svg style="left:7px;top:462.8px" width="16" height="16" viewBox="0 0 16 16"><rect x="1" y="1" width="2.8" height="2.8" fill="#c4525f"/><rect x="6.6" y="1" width="2.8" height="2.8" fill="#c4525f"/><rect x="12.2" y="1" width="2.8" height="2.8" fill="#c4525f"/><rect x="3.8" y="3.8" width="2.8" height="2.8" fill="#c4525f"/><rect x="9.4" y="3.8" width="2.8" height="2.8" fill="#c4525f"/><rect x="1" y="6.6" width="2.8" height="2.8" fill="#c4525f"/><rect x="6.6" y="6.6" width="2.8" height="2.8" fill="#c4525f"/><rect x="12.2" y="6.6" width="2.8" height="2.8" fill="#c4525f"/><rect x="3.8" y="9.4" width="2.8" height="2.8" fill="#c4525f"/><rect x="9.4" y="9.4" width="2.8" height="2.8" fill="#c4525f"/><rect x="1" y="12.2" width="2.8" height="2.8" fill="#c4525f"/><rect x="6.6" y="12.2" width="2.8" height="2.8" fill="#c4525f"/><rect x="12.2" y="12.2" width="2.8" height="2.8" fill="#c4525f"/></svg>
<div class="abs" style="left:4px;top:213.5px;width:24px;height:1px;background:#232323;border-radius:0;"></div>
<div class="abs" style="left:4px;top:249.5px;width:24px;height:1px;background:#232323;border-radius:0;"></div>
<div class="abs" style="left:4px;top:453px;width:24px;height:1px;background:#232323;border-radius:0;"></div>
<div class="abs" style="left:4px;top:488.5px;width:24px;height:1px;background:#232323;border-radius:0;"></div>
<svg style="left:42px;top:30.8px" width="24" height="24" viewBox="-12 -12 24 24"><rect x="-10.6" y="-10.6" width="21.2" height="21.2" fill="none" stroke="#f7a928" stroke-width="1.2" stroke-dasharray="3.4 2.2" stroke-dashoffset="1.7"/><path d="M-3.4 -5.2 L4.8 1.6 L0.6 2.2 L-1.8 6 Z" fill="#ececec"/></svg>
<span class="t" style="left:74px;top:37.8px;font-size:11px;color:#e3e3e3;">Select Box</span>
<div class="abs" style="left:37.2px;top:64.2px;width:18.1px;height:18px;background:#4772b3;border-radius:4px 0 0 4px;"></div>
<svg style="left:38.2px;top:65.2px" width="16" height="16" viewBox="0 0 16 16"><rect x="1.3" y="1.7" width="13.4" height="13" fill="none" stroke="#ffffff" stroke-width="1.4" stroke-dasharray="2.7 1.7" stroke-dashoffset="1.2"/></svg>
<div class="abs" style="left:56.13px;top:64.2px;width:18.1px;height:18px;background:#545454;border-radius:0;"></div>
<svg style="left:57.13px;top:65.2px" width="16" height="16" viewBox="0 0 16 16"><path d="M5 1.2 H15 V11.2 H10.6 V14.9 H1 V4.9 H5 Z" fill="#c4c4c4"/></svg>
<div class="abs" style="left:75.06px;top:64.2px;width:18.1px;height:18px;background:#545454;border-radius:0;"></div>
<svg style="left:76.06px;top:65.2px" width="16" height="16" viewBox="0 0 16 16"><path d="M5.6 1.2 H15 V10.8 H10.6 V5.4 H5.6 Z" fill="#c4c4c4"/><path d="M1.5 5.8 H10.2 V14.5 H1.5 Z" fill="none" stroke="#c4c4c4" stroke-width="1" stroke-dasharray="2 1.4"/></svg>
<div class="abs" style="left:93.99px;top:64.2px;width:18.1px;height:18px;background:#545454;border-radius:0;"></div>
<svg style="left:94.99px;top:65.2px" width="16" height="16" viewBox="0 0 16 16"><path d="M5 1.2 H15 V10.8 H10.6 V14.9 H1 V4.9 H5 Z M5.2 5 V10.6 H10.6 V5 Z" fill="#c4c4c4" fill-rule="evenodd"/></svg>
<div class="abs" style="left:112.92px;top:64.2px;width:18.1px;height:18px;background:#545454;border-radius:0 4px 4px 0;"></div>
<svg style="left:113.92px;top:65.2px" width="16" height="16" viewBox="0 0 16 16"><rect x="1.4" y="1.7" width="13.2" height="13" fill="none" stroke="#c4c4c4" stroke-width="1.1" stroke-dasharray="2.2 1.6"/><rect x="4.9" y="5" width="6.3" height="6.3" fill="#c4c4c4"/></svg>
<div class="abs" style="left:36px;top:92.9px;width:288px;height:125.8px;background:#353535;border-radius:4px;"></div>
<div class="abs" style="left:36px;top:92.9px;width:288px;height:50.1px;background:#3d3d3d;border-radius:4px 4px 0 0;"></div>
<svg style="left:43.6px;top:102.3px" width="10" height="7" viewBox="0 0 10 7"><path d="M0.6 1 L5 5.6 L9.4 1" fill="none" stroke="#c4c4c4" stroke-width="1"/></svg>
<span class="t" style="left:58px;top:101px;font-size:11px;color:#e3e3e3;">Options</span>
<svg style="left:306.6px;top:103px" width="12" height="5" viewBox="0 0 12 5"><rect x="0" y="0" width="1.4" height="1.4" fill="#8a8a8a"/><rect x="3.1" y="0" width="1.4" height="1.4" fill="#8a8a8a"/><rect x="6.2" y="0" width="1.4" height="1.4" fill="#8a8a8a"/><rect x="9.3" y="0" width="1.4" height="1.4" fill="#8a8a8a"/><rect x="0" y="3" width="1.4" height="1.4" fill="#8a8a8a"/><rect x="3.1" y="3" width="1.4" height="1.4" fill="#8a8a8a"/><rect x="6.2" y="3" width="1.4" height="1.4" fill="#8a8a8a"/><rect x="9.3" y="3" width="1.4" height="1.4" fill="#8a8a8a"/></svg>
<svg style="left:57.4px;top:127.1px" width="10" height="7" viewBox="0 0 10 7"><path d="M0.6 1 L5 5.6 L9.4 1" fill="none" stroke="#c4c4c4" stroke-width="1"/></svg>
<span class="t" style="left:72.4px;top:125.8px;font-size:11px;color:#e3e3e3;">Transform</span>
<span class="t" style="left:68.2px;top:155.8px;width:80px;text-align:right;color:#e3e3e3">Affect Only</span>
<div class="abs" style="left:158.2px;top:155.2px;width:12px;height:12px;background:#545454;border-radius:2.5px;box-shadow:0 0 0 .6px #3e3e3e;"></div>
<span class="t" style="left:174.3px;top:155.8px;font-size:11px;color:#e3e3e3;">Origins</span>
<div class="abs" style="left:158.2px;top:175.3px;width:12px;height:12px;background:#545454;border-radius:2.5px;box-shadow:0 0 0 .6px #3e3e3e;"></div>
<span class="t" style="left:174.3px;top:175.9px;font-size:11px;color:#e3e3e3;">Locations</span>
<div class="abs" style="left:158.2px;top:195.4px;width:12px;height:12px;background:#545454;border-radius:2.5px;box-shadow:0 0 0 .6px #3e3e3e;"></div>
<span class="t" style="left:174.3px;top:196px;font-size:11px;color:#e3e3e3;">Parents</span>
<div class="abs" style="left:36px;top:221.2px;width:288px;height:24.6px;background:#3d3d3d;border-radius:4px;"></div>
<svg style="left:45.7px;top:228.8px" width="7" height="10" viewBox="0 0 7 10"><path d="M1 0.6 L5.6 5 L1 9.4" fill="none" stroke="#c4c4c4" stroke-width="1"/></svg>
<span class="t" style="left:58px;top:229px;font-size:11px;color:#e3e3e3;">Workspace</span>
<svg style="left:306.6px;top:231.2px" width="12" height="5" viewBox="0 0 12 5"><rect x="0" y="0" width="1.4" height="1.4" fill="#8a8a8a"/><rect x="3.1" y="0" width="1.4" height="1.4" fill="#8a8a8a"/><rect x="6.2" y="0" width="1.4" height="1.4" fill="#8a8a8a"/><rect x="9.3" y="0" width="1.4" height="1.4" fill="#8a8a8a"/><rect x="0" y="3" width="1.4" height="1.4" fill="#8a8a8a"/><rect x="3.1" y="3" width="1.4" height="1.4" fill="#8a8a8a"/><rect x="6.2" y="3" width="1.4" height="1.4" fill="#8a8a8a"/><rect x="9.3" y="3" width="1.4" height="1.4" fill="#8a8a8a"/></svg>
</div>
</body>
</html>
